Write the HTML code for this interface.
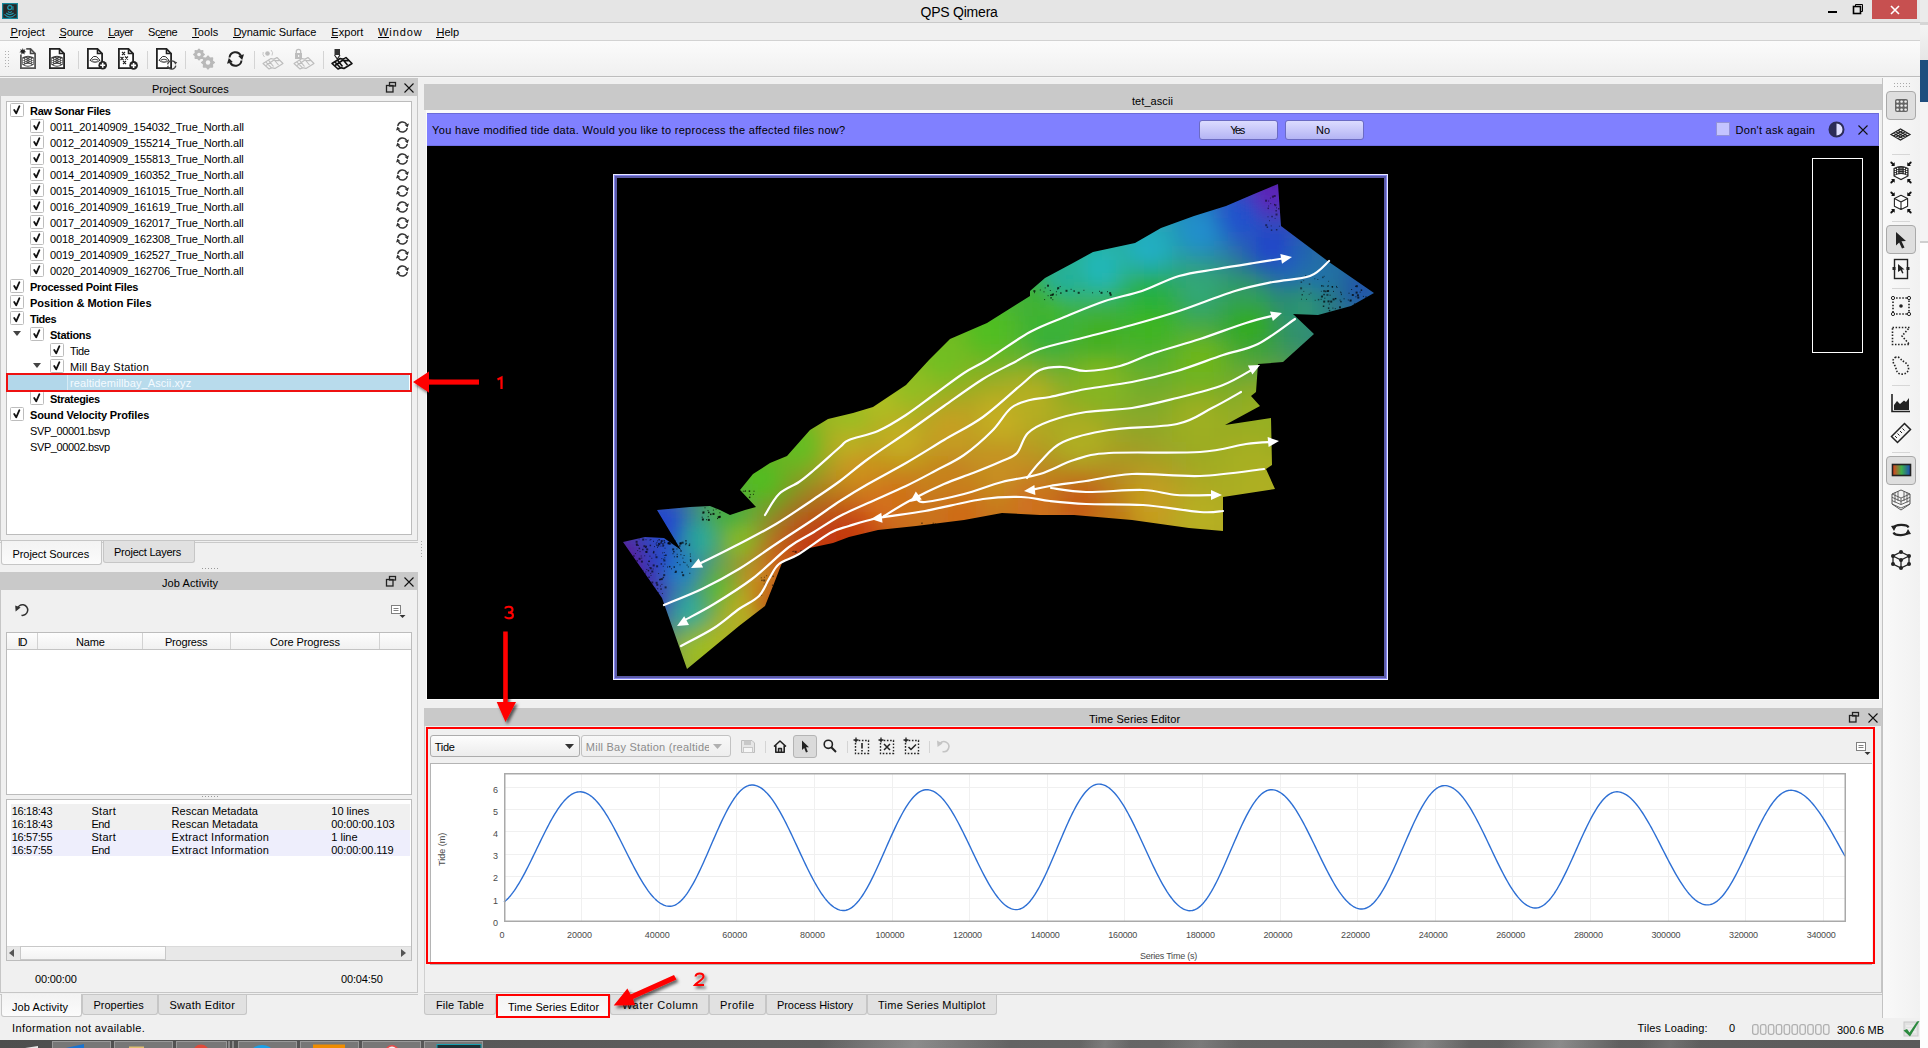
<!DOCTYPE html>
<html><head><meta charset="utf-8"><title>QPS Qimera</title>
<style>
html,body{margin:0;padding:0;}
body{width:1928px;height:1048px;overflow:hidden;position:relative;background:#f0f0f0;font-family:"Liberation Sans",sans-serif;}
.t{position:absolute;white-space:pre;}
.r{position:absolute;}
.s{position:absolute;overflow:visible;}
</style></head><body>
<div class="r" style="left:0px;top:0px;width:1920px;height:22px;background:#e5e5e5;"></div><div class="r" style="left:0px;top:22px;width:1920px;height:1px;background:#c9c9c9;"></div><svg class="s" style="left:2px;top:3px;" width="16" height="16" viewBox="0 0 16 16"><rect x="0" y="0" width="16" height="16" fill="#17889c"/><rect x="1.2" y="1.2" width="13.6" height="13.6" fill="#272727"/><circle cx="7.8" cy="4.6" r="2.1" stroke="#1e96aa" stroke-width="1.3" fill="none"/><path d="M11 3.2 V7.2" stroke="#1e96aa" stroke-width="1.1"/><path d="M6 8.4 Q7.8 10.6 9.8 8.4 M4.2 10 Q7.8 13.2 11.6 10 M2.4 11.4 Q7.8 16.8 13.6 11.4" stroke="#1e96aa" stroke-width="1.2" fill="none"/></svg><div class="t" style="left:920.50px;top:4px;font:14px/16px 'Liberation Sans',sans-serif;color:#000;letter-spacing:-0.222px;">QPS Qimera</div><div class="r" style="left:1828px;top:11px;width:9px;height:2px;background:#000;"></div><svg class="s" style="left:1852px;top:3px;" width="13" height="12" viewBox="0 0 13 12"><path d="M3.5 3.5 V1.5 H10.5 V8.5 H8.5" stroke="#000" fill="none"/><rect x="1.5" y="3.5" width="7" height="7" stroke="#000" stroke-width="1.6" fill="none"/></svg><div class="r" style="left:1872px;top:0px;width:45px;height:19px;background:#c75050;"></div><svg class="s" style="left:1889px;top:5px;" width="12" height="10" viewBox="0 0 12 10"><path d="M2 1 L10 9 M10 1 L2 9" stroke="#fff" stroke-width="1.6"/></svg><div class="r" style="left:0px;top:23px;width:1920px;height:17px;background:#f0f0f0;"></div><div class="r" style="left:0px;top:40px;width:1920px;height:1px;background:#d2d2d2;"></div><div class="t" style="left:10.60px;top:26px;font:11px/12px 'Liberation Sans',sans-serif;color:#000;letter-spacing:0.000px;">Project</div><div class="t" style="left:59.50px;top:26px;font:11px/12px 'Liberation Sans',sans-serif;color:#000;letter-spacing:-0.200px;">Source</div><div class="t" style="left:108.30px;top:26px;font:11px/12px 'Liberation Sans',sans-serif;color:#000;letter-spacing:-0.625px;">Layer</div><div class="t" style="left:148.10px;top:26px;font:11px/12px 'Liberation Sans',sans-serif;color:#000;letter-spacing:-0.425px;">Scene</div><div class="t" style="left:192.30px;top:26px;font:11px/12px 'Liberation Sans',sans-serif;color:#000;letter-spacing:0.050px;">Tools</div><div class="t" style="left:233.50px;top:26px;font:11px/12px 'Liberation Sans',sans-serif;color:#000;letter-spacing:-0.071px;">Dynamic Surface</div><div class="t" style="left:331.30px;top:26px;font:11px/12px 'Liberation Sans',sans-serif;color:#000;letter-spacing:0.060px;">Export</div><div class="t" style="left:378.00px;top:26px;font:11px/12px 'Liberation Sans',sans-serif;color:#000;letter-spacing:0.920px;">Window</div><div class="t" style="left:436.50px;top:26px;font:11px/12px 'Liberation Sans',sans-serif;color:#000;letter-spacing:0.000px;">Help</div><div class="r" style="left:10px;top:37px;width:8px;height:1px;background:#000;"></div><div class="r" style="left:59px;top:37px;width:7px;height:1px;background:#000;"></div><div class="r" style="left:108px;top:37px;width:7px;height:1px;background:#000;"></div><div class="r" style="left:158px;top:37px;width:7px;height:1px;background:#000;"></div><div class="r" style="left:192px;top:37px;width:7px;height:1px;background:#000;"></div><div class="r" style="left:233px;top:37px;width:8px;height:1px;background:#000;"></div><div class="r" style="left:331px;top:37px;width:7px;height:1px;background:#000;"></div><div class="r" style="left:378px;top:37px;width:11px;height:1px;background:#000;"></div><div class="r" style="left:436px;top:37px;width:8px;height:1px;background:#000;"></div><div class="r" style="left:0px;top:41px;width:1920px;height:35px;background:linear-gradient(#fbfbfb,#f0f0f0);"></div><div class="r" style="left:0px;top:76px;width:1920px;height:1px;background:#bdbdbd;"></div><div class="r" style="left:0px;top:77px;width:1920px;height:1px;background:#f5f5f5;"></div><svg class="s" style="left:5px;top:51px;" width="4" height="18" viewBox="0 0 4 18"><rect x="0" y="0" width="1" height="1" fill="#b0b0b0"/><rect x="0" y="3" width="1" height="1" fill="#b0b0b0"/><rect x="0" y="6" width="1" height="1" fill="#b0b0b0"/><rect x="0" y="9" width="1" height="1" fill="#b0b0b0"/><rect x="0" y="12" width="1" height="1" fill="#b0b0b0"/><rect x="0" y="15" width="1" height="1" fill="#b0b0b0"/><rect x="3" y="0" width="1" height="1" fill="#b0b0b0"/><rect x="3" y="3" width="1" height="1" fill="#b0b0b0"/><rect x="3" y="6" width="1" height="1" fill="#b0b0b0"/><rect x="3" y="9" width="1" height="1" fill="#b0b0b0"/><rect x="3" y="12" width="1" height="1" fill="#b0b0b0"/><rect x="3" y="15" width="1" height="1" fill="#b0b0b0"/></svg><svg class="s" style="left:20px;top:48px;" width="17" height="22" viewBox="0 0 17 22"><path d="M0.9 6.5 V20.1 H15.1 V5.5 L10.5 0.9 H6.2" fill="#fff" stroke="#555" stroke-width="1.8"/><path d="M10.5 0.9 V5.5 H15.1" fill="none" stroke="#444" stroke-width="1.6"/><path d="M2.3 9.2 Q8 6.2 13.7 9.2 V16.8 Q8 13.8 2.3 16.8Z" fill="#444"/><rect x="2.8" y="10.6" width="1.6" height="1.5" rx="0.7" fill="#fff"/><rect x="2.8" y="12.6" width="1.6" height="1.5" rx="0.7" fill="#fff"/><rect x="2.8" y="14.6" width="1.6" height="1.5" rx="0.7" fill="#fff"/><rect x="5.1" y="9.8" width="1.6" height="1.5" rx="0.7" fill="#fff"/><rect x="5.1" y="11.8" width="1.6" height="1.5" rx="0.7" fill="#fff"/><rect x="5.1" y="13.8" width="1.6" height="1.5" rx="0.7" fill="#fff"/><rect x="9.3" y="9.8" width="1.6" height="1.5" rx="0.7" fill="#fff"/><rect x="9.3" y="11.8" width="1.6" height="1.5" rx="0.7" fill="#fff"/><rect x="9.3" y="13.8" width="1.6" height="1.5" rx="0.7" fill="#fff"/><rect x="11.6" y="10.6" width="1.6" height="1.5" rx="0.7" fill="#fff"/><rect x="11.6" y="12.6" width="1.6" height="1.5" rx="0.7" fill="#fff"/><rect x="11.6" y="14.6" width="1.6" height="1.5" rx="0.7" fill="#fff"/><path d="M7 9.2 H9 M7 11.4 H9 M7 13.4 H9" stroke="#999" stroke-width="0.8"/><path d="M3.2 16.6 Q8 13.6 12.8 16.6 Q8 19.8 3.2 16.6Z" fill="#fff" stroke="#444" stroke-width="1.1"/><path d="M2.8 0 L3.5 1.9 L5.4 1.2 L4.6 3 L6.3 4 L4.4 4.4 L4.6 6.4 L2.9 5.2 L1.4 6.5 L1.4 4.5 L-0.6 4.2 L1 3 L0.2 1.2 L2.1 1.9Z" fill="#222"/></svg><svg class="s" style="left:49px;top:48px;" width="17" height="22" viewBox="0 0 17 22"><path d="M0.9 0.9 H10.5 L15.1 5.5 V20.1 H0.9Z" fill="#fff" stroke="#222" stroke-width="1.8" stroke-linejoin="miter"/><path d="M10.5 0.9 V5.5 H15.1" fill="none" stroke="#222" stroke-width="1.6"/><path d="M2.3 9.2 Q8 6.2 13.7 9.2 V16.8 Q8 13.8 2.3 16.8Z" fill="#3a3a3a"/><rect x="2.8" y="10.6" width="1.6" height="1.5" rx="0.7" fill="#fff"/><rect x="2.8" y="12.6" width="1.6" height="1.5" rx="0.7" fill="#fff"/><rect x="2.8" y="14.6" width="1.6" height="1.5" rx="0.7" fill="#fff"/><rect x="5.1" y="9.8" width="1.6" height="1.5" rx="0.7" fill="#fff"/><rect x="5.1" y="11.8" width="1.6" height="1.5" rx="0.7" fill="#fff"/><rect x="5.1" y="13.8" width="1.6" height="1.5" rx="0.7" fill="#fff"/><rect x="9.3" y="9.8" width="1.6" height="1.5" rx="0.7" fill="#fff"/><rect x="9.3" y="11.8" width="1.6" height="1.5" rx="0.7" fill="#fff"/><rect x="9.3" y="13.8" width="1.6" height="1.5" rx="0.7" fill="#fff"/><rect x="11.6" y="10.6" width="1.6" height="1.5" rx="0.7" fill="#fff"/><rect x="11.6" y="12.6" width="1.6" height="1.5" rx="0.7" fill="#fff"/><rect x="11.6" y="14.6" width="1.6" height="1.5" rx="0.7" fill="#fff"/><path d="M7 9.2 H9 M7 11.4 H9 M7 13.4 H9" stroke="#999" stroke-width="0.8"/><path d="M3.2 16.6 Q8 13.6 12.8 16.6 Q8 19.8 3.2 16.6Z" fill="#fff" stroke="#3a3a3a" stroke-width="1.1"/></svg><div class="r" style="left:78px;top:51px;width:1px;height:18px;background:#d4d4d4;"></div><svg class="s" style="left:87px;top:48px;" width="22" height="23" viewBox="0 0 22 23"><path d="M0.9 0.9 H10.5 L15.1 5.5 V20.1 H0.9Z" fill="#fff" stroke="#222" stroke-width="1.8" stroke-linejoin="miter"/><path d="M10.5 0.9 V5.5 H15.1" fill="none" stroke="#222" stroke-width="1.6"/><path d="M3 12.3 L6.3 8.6 Q8 8.2 9.8 8.8 L13 12.3 Q8 16.2 3 12.3Z" fill="#fff" stroke="#333" stroke-width="1"/><path d="M4.8 12.3 Q8 10.2 11.2 12.3" stroke="#555" stroke-width="1.1" fill="none"/><path d="M5.5 13.4 Q8 14.8 10.5 13.4" stroke="#777" stroke-width="1" fill="none"/><circle cx="15.7" cy="17.3" r="4.3" fill="#222"/><path d="M13.2 17.3 h5 M15.7 14.8 v5" stroke="#fff" stroke-width="1.6"/></svg><svg class="s" style="left:118px;top:48px;" width="22" height="23" viewBox="0 0 22 23"><path d="M0.9 0.9 H10.5 L15.1 5.5 V20.1 H0.9Z" fill="#fff" stroke="#222" stroke-width="1.8" stroke-linejoin="miter"/><path d="M10.5 0.9 V5.5 H15.1" fill="none" stroke="#222" stroke-width="1.6"/><path d="M4 4 l3 3 m0 -3 l-3 3 M2.5 9 l3 3 m0 -3 l-3 3 M7 8.5 l3 3 m0 -3 l-3 3 M5 13 l3 3 m0 -3 l-3 3" stroke="#222" stroke-width="1.1"/><circle cx="15.6" cy="17.4" r="4.3" fill="#222"/><path d="M13.1 17.4 h5 M15.6 14.9 v5" stroke="#fff" stroke-width="1.6"/></svg><div class="r" style="left:147px;top:51px;width:1px;height:18px;background:#d4d4d4;"></div><svg class="s" style="left:156px;top:48px;" width="23" height="23" viewBox="0 0 23 23"><path d="M0.9 0.9 H10.5 L15.1 5.5 V20.1 H0.9Z" fill="#fff" stroke="#222" stroke-width="1.8" stroke-linejoin="miter"/><path d="M10.5 0.9 V5.5 H15.1" fill="none" stroke="#222" stroke-width="1.6"/><path d="M3 12.3 L6.3 8.6 Q8 8.2 9.8 8.8 L13 12.3 Q8 16.2 3 12.3Z" fill="#fff" stroke="#333" stroke-width="1"/><path d="M4.8 12.3 Q8 10.2 11.2 12.3" stroke="#555" stroke-width="1.1" fill="none"/><path d="M5.5 13.4 Q8 14.8 10.5 13.4" stroke="#777" stroke-width="1" fill="none"/><path d="M11.6 16.3 A4.2 4.2 0 0 1 19.3 14.9" fill="none" stroke="#444" stroke-width="1.3"/><path d="M19.8 17.7 A4.2 4.2 0 0 1 12.1 19.1" fill="none" stroke="#444" stroke-width="1.3"/><path d="M18 13.2 L21.2 14.2 L19.2 16.8Z M13.4 20.8 L10.2 19.8 L12.2 17.2Z" fill="#444"/></svg><div class="r" style="left:185px;top:51px;width:1px;height:18px;background:#d4d4d4;"></div><svg class="s" style="left:192px;top:48px;" width="24" height="23" viewBox="0 0 24 23"><polygon points="12.20,6.50 10.46,7.93 10.68,10.18 8.43,9.96 7.00,11.70 5.57,9.96 3.32,10.18 3.54,7.93 1.80,6.50 3.54,5.07 3.32,2.82 5.57,3.04 7.00,1.30 8.43,3.04 10.68,2.82 10.46,5.07" fill="#b9b9b9" stroke="#b9b9b9" stroke-width="1.6" stroke-linejoin="round"/><circle cx="7" cy="6.5" r="1.8" fill="#f4f4f4"/><polygon points="22.30,14.50 20.19,16.24 20.45,18.95 17.74,18.69 16.00,20.80 14.26,18.69 11.55,18.95 11.81,16.24 9.70,14.50 11.81,12.76 11.55,10.05 14.26,10.31 16.00,8.20 17.74,10.31 20.45,10.05 20.19,12.76" fill="#b9b9b9" stroke="#b9b9b9" stroke-width="1.6" stroke-linejoin="round"/><circle cx="16" cy="14.5" r="2.2" fill="#f4f4f4"/></svg><svg class="s" style="left:226px;top:51px;" width="19" height="16" viewBox="0 0 19 16"><path d="M3.5 6.5 A6 6 0 0 1 14.8 4.5" stroke="#222" stroke-width="2" fill="none"/><path d="M15.5 9.5 A6 6 0 0 1 4.2 11.5" stroke="#222" stroke-width="2" fill="none"/><path d="M12.2 5 L18 3.2 L16.2 9Z M6.8 11 L1 12.8 L2.8 7Z" fill="#222"/></svg><div class="r" style="left:254px;top:51px;width:1px;height:18px;background:#d4d4d4;"></div><svg class="s" style="left:262px;top:48px;" width="22" height="22" viewBox="0 0 22 22"><path d="M1 15.5 L9 10.5 Q12 12 15 9.5 L21 15.5 L13 20.5 Q10 19 7 21Z" fill="none" stroke="#bdbdbd" stroke-width="1.1" stroke-linejoin="round"/><path d="M3.7 13.8 L9.5 19.8 M6.4 12.1 L11.5 18.5 M11.8 11.5 L16.5 17 M4 17.5 L12 12 Q14 13 18 12.5" fill="none" stroke="#bdbdbd" stroke-width="1.1"/><circle cx="5.5" cy="5.5" r="2.3" fill="#bdbdbd"/><path d="M2.5 9 A4.5 4.5 0 0 1 1.2 4 M9 2 A4.5 4.5 0 0 1 10 7.5" stroke="#c8c8c8" fill="none"/></svg><svg class="s" style="left:293px;top:48px;" width="22" height="22" viewBox="0 0 22 22"><path d="M1 15.5 L9 10.5 Q12 12 15 9.5 L21 15.5 L13 20.5 Q10 19 7 21Z" fill="none" stroke="#bdbdbd" stroke-width="1.1" stroke-linejoin="round"/><path d="M3.7 13.8 L9.5 19.8 M6.4 12.1 L11.5 18.5 M11.8 11.5 L16.5 17 M4 17.5 L12 12 Q14 13 18 12.5" fill="none" stroke="#bdbdbd" stroke-width="1.1"/><rect x="2" y="5" width="7" height="6" fill="#bdbdbd"/><path d="M3.3 5 V3.6 A2.2 2.2 0 0 1 7.7 3.6 V5" stroke="#bdbdbd" stroke-width="1.3" fill="none"/><rect x="5" y="7" width="1.2" height="2" fill="#f4f4f4"/></svg><div class="r" style="left:323px;top:51px;width:1px;height:18px;background:#d4d4d4;"></div><svg class="s" style="left:331px;top:48px;" width="23" height="23" viewBox="0 0 23 23"><path d="M1 15.5 L9 10.5 Q12 12 15 9.5 L21 15.5 L13 20.5 Q10 19 7 21Z" fill="none" stroke="#111" stroke-width="1.6" stroke-linejoin="round"/><path d="M3.7 13.8 L9.5 19.8 M6.4 12.1 L11.5 18.5 M11.8 11.5 L16.5 17 M4 17.5 L12 12 Q14 13 18 12.5" fill="none" stroke="#111" stroke-width="1.6"/><rect x="3.5" y="1" width="5.5" height="6" fill="#333"/><path d="M3.5 7 L6.25 11 L9 7" fill="#fff" stroke="#222" stroke-width="1.2"/></svg>
<div class="r" style="left:0px;top:78px;width:418px;height:18px;background:#c9c9c9;"></div><div class="t" style="left:152.00px;top:83px;font:11px/12px 'Liberation Sans',sans-serif;color:#000;letter-spacing:-0.071px;">Project Sources</div><svg class="s" style="left:386px;top:82px;" width="11" height="11" viewBox="0 0 11 11"><rect x="3.5" y="0.5" width="6" height="3.5" stroke="#222" stroke-width="1.3" fill="none"/><rect x="0.5" y="3.5" width="6.5" height="6.5" stroke="#222" stroke-width="1.3" fill="none"/></svg><svg class="s" style="left:404px;top:83px;" width="10" height="10" viewBox="0 0 10 10"><path d="M0.5 0.5 L9.5 9.5 M9.5 0.5 L0.5 9.5" stroke="#111" stroke-width="1.1"/></svg><div class="r" style="left:0px;top:96px;width:1px;height:445px;background:#c6c6c6;"></div><div class="r" style="left:417px;top:96px;width:1px;height:445px;background:#c6c6c6;"></div><div class="r" style="left:0px;top:540px;width:418px;height:1px;background:#c6c6c6;"></div><div class="r" style="left:6px;top:101px;width:406px;height:434px;background:#fff;border:1px solid #bcbcbc;box-sizing:border-box;"></div><div class="r" style="left:8px;top:375px;width:401px;height:15px;background:#b2d7ea;"></div><div class="r" style="left:67px;top:375px;width:342px;height:15px;background:#b8dbec;"></div><div class="r" style="left:67px;top:375px;width:1px;height:15px;background:#d6ebf5;"></div><div class="t" style="left:70.00px;top:377px;font:11px/12px 'Liberation Sans',sans-serif;color:#f4faff;letter-spacing:0.083px;">realtidemillbay_Ascii.xyz</div><svg class="s" style="left:10px;top:103px;" width="14" height="14" viewBox="0 0 14 14"><rect x="0.5" y="0.5" width="13" height="13" rx="1" fill="#fff" stroke="#bdbdbd"/><path d="M4.2 7 L6.2 10.3 L9.4 3.2" stroke="#111" stroke-width="1.8" fill="none" stroke-linejoin="round" stroke-linecap="round"/></svg><div class="t" style="left:30.00px;top:105px;font:bold 11px/12px 'Liberation Sans',sans-serif;color:#000;letter-spacing:-0.286px;">Raw Sonar Files</div><svg class="s" style="left:30px;top:119px;" width="14" height="14" viewBox="0 0 14 14"><rect x="0.5" y="0.5" width="13" height="13" rx="1" fill="#fff" stroke="#bdbdbd"/><path d="M4.2 7 L6.2 10.3 L9.4 3.2" stroke="#111" stroke-width="1.8" fill="none" stroke-linejoin="round" stroke-linecap="round"/></svg><div class="t" style="left:50.00px;top:121px;font:11px/12px 'Liberation Sans',sans-serif;color:#000;letter-spacing:-0.088px;">0011_20140909_154032_True_North.all</div><svg class="s" style="left:395px;top:120px;" width="15" height="14" viewBox="0 0 15 14"><path d="M2.8 6 A4.8 4.8 0 0 1 11.6 4.2" stroke="#333" stroke-width="1.4" fill="none"/><path d="M12.2 8 A4.8 4.8 0 0 1 3.4 9.8" stroke="#333" stroke-width="1.4" fill="none"/><path d="M9.6 4.8 L14 3.6 L12.6 7.6Z M5.4 9.2 L1 10.4 L2.4 6.4Z" fill="#333"/></svg><svg class="s" style="left:30px;top:135px;" width="14" height="14" viewBox="0 0 14 14"><rect x="0.5" y="0.5" width="13" height="13" rx="1" fill="#fff" stroke="#bdbdbd"/><path d="M4.2 7 L6.2 10.3 L9.4 3.2" stroke="#111" stroke-width="1.8" fill="none" stroke-linejoin="round" stroke-linecap="round"/></svg><div class="t" style="left:50.00px;top:137px;font:11px/12px 'Liberation Sans',sans-serif;color:#000;letter-spacing:-0.118px;">0012_20140909_155214_True_North.all</div><svg class="s" style="left:395px;top:136px;" width="15" height="14" viewBox="0 0 15 14"><path d="M2.8 6 A4.8 4.8 0 0 1 11.6 4.2" stroke="#333" stroke-width="1.4" fill="none"/><path d="M12.2 8 A4.8 4.8 0 0 1 3.4 9.8" stroke="#333" stroke-width="1.4" fill="none"/><path d="M9.6 4.8 L14 3.6 L12.6 7.6Z M5.4 9.2 L1 10.4 L2.4 6.4Z" fill="#333"/></svg><svg class="s" style="left:30px;top:151px;" width="14" height="14" viewBox="0 0 14 14"><rect x="0.5" y="0.5" width="13" height="13" rx="1" fill="#fff" stroke="#bdbdbd"/><path d="M4.2 7 L6.2 10.3 L9.4 3.2" stroke="#111" stroke-width="1.8" fill="none" stroke-linejoin="round" stroke-linecap="round"/></svg><div class="t" style="left:50.00px;top:153px;font:11px/12px 'Liberation Sans',sans-serif;color:#000;letter-spacing:-0.118px;">0013_20140909_155813_True_North.all</div><svg class="s" style="left:395px;top:152px;" width="15" height="14" viewBox="0 0 15 14"><path d="M2.8 6 A4.8 4.8 0 0 1 11.6 4.2" stroke="#333" stroke-width="1.4" fill="none"/><path d="M12.2 8 A4.8 4.8 0 0 1 3.4 9.8" stroke="#333" stroke-width="1.4" fill="none"/><path d="M9.6 4.8 L14 3.6 L12.6 7.6Z M5.4 9.2 L1 10.4 L2.4 6.4Z" fill="#333"/></svg><svg class="s" style="left:30px;top:167px;" width="14" height="14" viewBox="0 0 14 14"><rect x="0.5" y="0.5" width="13" height="13" rx="1" fill="#fff" stroke="#bdbdbd"/><path d="M4.2 7 L6.2 10.3 L9.4 3.2" stroke="#111" stroke-width="1.8" fill="none" stroke-linejoin="round" stroke-linecap="round"/></svg><div class="t" style="left:50.00px;top:169px;font:11px/12px 'Liberation Sans',sans-serif;color:#000;letter-spacing:-0.118px;">0014_20140909_160352_True_North.all</div><svg class="s" style="left:395px;top:168px;" width="15" height="14" viewBox="0 0 15 14"><path d="M2.8 6 A4.8 4.8 0 0 1 11.6 4.2" stroke="#333" stroke-width="1.4" fill="none"/><path d="M12.2 8 A4.8 4.8 0 0 1 3.4 9.8" stroke="#333" stroke-width="1.4" fill="none"/><path d="M9.6 4.8 L14 3.6 L12.6 7.6Z M5.4 9.2 L1 10.4 L2.4 6.4Z" fill="#333"/></svg><svg class="s" style="left:30px;top:183px;" width="14" height="14" viewBox="0 0 14 14"><rect x="0.5" y="0.5" width="13" height="13" rx="1" fill="#fff" stroke="#bdbdbd"/><path d="M4.2 7 L6.2 10.3 L9.4 3.2" stroke="#111" stroke-width="1.8" fill="none" stroke-linejoin="round" stroke-linecap="round"/></svg><div class="t" style="left:50.00px;top:185px;font:11px/12px 'Liberation Sans',sans-serif;color:#000;letter-spacing:-0.118px;">0015_20140909_161015_True_North.all</div><svg class="s" style="left:395px;top:184px;" width="15" height="14" viewBox="0 0 15 14"><path d="M2.8 6 A4.8 4.8 0 0 1 11.6 4.2" stroke="#333" stroke-width="1.4" fill="none"/><path d="M12.2 8 A4.8 4.8 0 0 1 3.4 9.8" stroke="#333" stroke-width="1.4" fill="none"/><path d="M9.6 4.8 L14 3.6 L12.6 7.6Z M5.4 9.2 L1 10.4 L2.4 6.4Z" fill="#333"/></svg><svg class="s" style="left:30px;top:199px;" width="14" height="14" viewBox="0 0 14 14"><rect x="0.5" y="0.5" width="13" height="13" rx="1" fill="#fff" stroke="#bdbdbd"/><path d="M4.2 7 L6.2 10.3 L9.4 3.2" stroke="#111" stroke-width="1.8" fill="none" stroke-linejoin="round" stroke-linecap="round"/></svg><div class="t" style="left:50.00px;top:201px;font:11px/12px 'Liberation Sans',sans-serif;color:#000;letter-spacing:-0.118px;">0016_20140909_161619_True_North.all</div><svg class="s" style="left:395px;top:200px;" width="15" height="14" viewBox="0 0 15 14"><path d="M2.8 6 A4.8 4.8 0 0 1 11.6 4.2" stroke="#333" stroke-width="1.4" fill="none"/><path d="M12.2 8 A4.8 4.8 0 0 1 3.4 9.8" stroke="#333" stroke-width="1.4" fill="none"/><path d="M9.6 4.8 L14 3.6 L12.6 7.6Z M5.4 9.2 L1 10.4 L2.4 6.4Z" fill="#333"/></svg><svg class="s" style="left:30px;top:215px;" width="14" height="14" viewBox="0 0 14 14"><rect x="0.5" y="0.5" width="13" height="13" rx="1" fill="#fff" stroke="#bdbdbd"/><path d="M4.2 7 L6.2 10.3 L9.4 3.2" stroke="#111" stroke-width="1.8" fill="none" stroke-linejoin="round" stroke-linecap="round"/></svg><div class="t" style="left:50.00px;top:217px;font:11px/12px 'Liberation Sans',sans-serif;color:#000;letter-spacing:-0.118px;">0017_20140909_162017_True_North.all</div><svg class="s" style="left:395px;top:216px;" width="15" height="14" viewBox="0 0 15 14"><path d="M2.8 6 A4.8 4.8 0 0 1 11.6 4.2" stroke="#333" stroke-width="1.4" fill="none"/><path d="M12.2 8 A4.8 4.8 0 0 1 3.4 9.8" stroke="#333" stroke-width="1.4" fill="none"/><path d="M9.6 4.8 L14 3.6 L12.6 7.6Z M5.4 9.2 L1 10.4 L2.4 6.4Z" fill="#333"/></svg><svg class="s" style="left:30px;top:231px;" width="14" height="14" viewBox="0 0 14 14"><rect x="0.5" y="0.5" width="13" height="13" rx="1" fill="#fff" stroke="#bdbdbd"/><path d="M4.2 7 L6.2 10.3 L9.4 3.2" stroke="#111" stroke-width="1.8" fill="none" stroke-linejoin="round" stroke-linecap="round"/></svg><div class="t" style="left:50.00px;top:233px;font:11px/12px 'Liberation Sans',sans-serif;color:#000;letter-spacing:-0.118px;">0018_20140909_162308_True_North.all</div><svg class="s" style="left:395px;top:232px;" width="15" height="14" viewBox="0 0 15 14"><path d="M2.8 6 A4.8 4.8 0 0 1 11.6 4.2" stroke="#333" stroke-width="1.4" fill="none"/><path d="M12.2 8 A4.8 4.8 0 0 1 3.4 9.8" stroke="#333" stroke-width="1.4" fill="none"/><path d="M9.6 4.8 L14 3.6 L12.6 7.6Z M5.4 9.2 L1 10.4 L2.4 6.4Z" fill="#333"/></svg><svg class="s" style="left:30px;top:247px;" width="14" height="14" viewBox="0 0 14 14"><rect x="0.5" y="0.5" width="13" height="13" rx="1" fill="#fff" stroke="#bdbdbd"/><path d="M4.2 7 L6.2 10.3 L9.4 3.2" stroke="#111" stroke-width="1.8" fill="none" stroke-linejoin="round" stroke-linecap="round"/></svg><div class="t" style="left:50.00px;top:249px;font:11px/12px 'Liberation Sans',sans-serif;color:#000;letter-spacing:-0.118px;">0019_20140909_162527_True_North.all</div><svg class="s" style="left:395px;top:248px;" width="15" height="14" viewBox="0 0 15 14"><path d="M2.8 6 A4.8 4.8 0 0 1 11.6 4.2" stroke="#333" stroke-width="1.4" fill="none"/><path d="M12.2 8 A4.8 4.8 0 0 1 3.4 9.8" stroke="#333" stroke-width="1.4" fill="none"/><path d="M9.6 4.8 L14 3.6 L12.6 7.6Z M5.4 9.2 L1 10.4 L2.4 6.4Z" fill="#333"/></svg><svg class="s" style="left:30px;top:263px;" width="14" height="14" viewBox="0 0 14 14"><rect x="0.5" y="0.5" width="13" height="13" rx="1" fill="#fff" stroke="#bdbdbd"/><path d="M4.2 7 L6.2 10.3 L9.4 3.2" stroke="#111" stroke-width="1.8" fill="none" stroke-linejoin="round" stroke-linecap="round"/></svg><div class="t" style="left:50.00px;top:265px;font:11px/12px 'Liberation Sans',sans-serif;color:#000;letter-spacing:-0.118px;">0020_20140909_162706_True_North.all</div><svg class="s" style="left:395px;top:264px;" width="15" height="14" viewBox="0 0 15 14"><path d="M2.8 6 A4.8 4.8 0 0 1 11.6 4.2" stroke="#333" stroke-width="1.4" fill="none"/><path d="M12.2 8 A4.8 4.8 0 0 1 3.4 9.8" stroke="#333" stroke-width="1.4" fill="none"/><path d="M9.6 4.8 L14 3.6 L12.6 7.6Z M5.4 9.2 L1 10.4 L2.4 6.4Z" fill="#333"/></svg><svg class="s" style="left:10px;top:279px;" width="14" height="14" viewBox="0 0 14 14"><rect x="0.5" y="0.5" width="13" height="13" rx="1" fill="#fff" stroke="#bdbdbd"/><path d="M4.2 7 L6.2 10.3 L9.4 3.2" stroke="#111" stroke-width="1.8" fill="none" stroke-linejoin="round" stroke-linecap="round"/></svg><div class="t" style="left:30.00px;top:281px;font:bold 11px/12px 'Liberation Sans',sans-serif;color:#000;letter-spacing:-0.300px;">Processed Point Files</div><svg class="s" style="left:10px;top:295px;" width="14" height="14" viewBox="0 0 14 14"><rect x="0.5" y="0.5" width="13" height="13" rx="1" fill="#fff" stroke="#bdbdbd"/><path d="M4.2 7 L6.2 10.3 L9.4 3.2" stroke="#111" stroke-width="1.8" fill="none" stroke-linejoin="round" stroke-linecap="round"/></svg><div class="t" style="left:30.00px;top:297px;font:bold 11px/12px 'Liberation Sans',sans-serif;color:#000;letter-spacing:0.000px;">Position &amp; Motion Files</div><svg class="s" style="left:10px;top:311px;" width="14" height="14" viewBox="0 0 14 14"><rect x="0.5" y="0.5" width="13" height="13" rx="1" fill="#fff" stroke="#bdbdbd"/><path d="M4.2 7 L6.2 10.3 L9.4 3.2" stroke="#111" stroke-width="1.8" fill="none" stroke-linejoin="round" stroke-linecap="round"/></svg><div class="t" style="left:30.00px;top:313px;font:bold 11px/12px 'Liberation Sans',sans-serif;color:#000;letter-spacing:-0.500px;">Tides</div><svg class="s" style="left:30px;top:327px;" width="14" height="14" viewBox="0 0 14 14"><rect x="0.5" y="0.5" width="13" height="13" rx="1" fill="#fff" stroke="#bdbdbd"/><path d="M4.2 7 L6.2 10.3 L9.4 3.2" stroke="#111" stroke-width="1.8" fill="none" stroke-linejoin="round" stroke-linecap="round"/></svg><div class="t" style="left:50.00px;top:329px;font:bold 11px/12px 'Liberation Sans',sans-serif;color:#000;letter-spacing:-0.286px;">Stations</div><svg class="s" style="left:13px;top:331px;" width="8" height="5" viewBox="0 0 8 5"><path d="M0 0 H8 L4.0 5Z" fill="#444"/></svg><svg class="s" style="left:50px;top:343px;" width="14" height="14" viewBox="0 0 14 14"><rect x="0.5" y="0.5" width="13" height="13" rx="1" fill="#fff" stroke="#bdbdbd"/><path d="M4.2 7 L6.2 10.3 L9.4 3.2" stroke="#111" stroke-width="1.8" fill="none" stroke-linejoin="round" stroke-linecap="round"/></svg><div class="t" style="left:70.00px;top:345px;font:11px/12px 'Liberation Sans',sans-serif;color:#000;letter-spacing:-0.333px;">Tide</div><svg class="s" style="left:50px;top:359px;" width="14" height="14" viewBox="0 0 14 14"><rect x="0.5" y="0.5" width="13" height="13" rx="1" fill="#fff" stroke="#bdbdbd"/><path d="M4.2 7 L6.2 10.3 L9.4 3.2" stroke="#111" stroke-width="1.8" fill="none" stroke-linejoin="round" stroke-linecap="round"/></svg><div class="t" style="left:70.00px;top:361px;font:11px/12px 'Liberation Sans',sans-serif;color:#000;letter-spacing:0.200px;">Mill Bay Station</div><svg class="s" style="left:33px;top:363px;" width="8" height="5" viewBox="0 0 8 5"><path d="M0 0 H8 L4.0 5Z" fill="#444"/></svg><svg class="s" style="left:30px;top:391px;" width="14" height="14" viewBox="0 0 14 14"><rect x="0.5" y="0.5" width="13" height="13" rx="1" fill="#fff" stroke="#bdbdbd"/><path d="M4.2 7 L6.2 10.3 L9.4 3.2" stroke="#111" stroke-width="1.8" fill="none" stroke-linejoin="round" stroke-linecap="round"/></svg><div class="t" style="left:50.00px;top:393px;font:bold 11px/12px 'Liberation Sans',sans-serif;color:#000;letter-spacing:-0.333px;">Strategies</div><svg class="s" style="left:10px;top:407px;" width="14" height="14" viewBox="0 0 14 14"><rect x="0.5" y="0.5" width="13" height="13" rx="1" fill="#fff" stroke="#bdbdbd"/><path d="M4.2 7 L6.2 10.3 L9.4 3.2" stroke="#111" stroke-width="1.8" fill="none" stroke-linejoin="round" stroke-linecap="round"/></svg><div class="t" style="left:30.00px;top:409px;font:bold 11px/12px 'Liberation Sans',sans-serif;color:#000;letter-spacing:-0.136px;">Sound Velocity Profiles</div><div class="t" style="left:30.00px;top:425px;font:11px/12px 'Liberation Sans',sans-serif;color:#000;letter-spacing:-0.385px;">SVP_00001.bsvp</div><div class="t" style="left:30.00px;top:441px;font:11px/12px 'Liberation Sans',sans-serif;color:#000;letter-spacing:-0.385px;">SVP_00002.bsvp</div><div class="r" style="left:6px;top:373px;width:406px;height:19px;border:1px solid #ee1111;box-sizing:border-box;border-width:2px;"></div><div class="r" style="left:0px;top:542px;width:418px;height:1px;background:#cacaca;"></div><div class="r" style="left:1px;top:541px;width:101px;height:24px;background:linear-gradient(#f3f3f3,#fbfbfb);border:1px solid #c6c6c6;border-top:none;border-radius:0 0 3px 3px;box-sizing:border-box;"></div><div class="t" style="left:12.50px;top:548px;font:11px/12px 'Liberation Sans',sans-serif;color:#000;letter-spacing:-0.071px;">Project Sources</div><div class="r" style="left:103px;top:541px;width:92px;height:22px;background:#e1e1e1;border:1px solid #c6c6c6;border-top:none;border-radius:0 0 3px 3px;box-sizing:border-box;"></div><div class="t" style="left:114.00px;top:546px;font:11px/12px 'Liberation Sans',sans-serif;color:#000;letter-spacing:-0.231px;">Project Layers</div><div class="r" style="left:202px;top:568px;width:1px;height:1px;background:#999;"></div><div class="r" style="left:205px;top:568px;width:1px;height:1px;background:#999;"></div><div class="r" style="left:208px;top:568px;width:1px;height:1px;background:#999;"></div><div class="r" style="left:211px;top:568px;width:1px;height:1px;background:#999;"></div><div class="r" style="left:214px;top:568px;width:1px;height:1px;background:#999;"></div><div class="r" style="left:217px;top:568px;width:1px;height:1px;background:#999;"></div><div class="r" style="left:421px;top:541px;width:1px;height:1px;background:#aaa;"></div><div class="r" style="left:421px;top:544px;width:1px;height:1px;background:#aaa;"></div><div class="r" style="left:421px;top:547px;width:1px;height:1px;background:#aaa;"></div><div class="r" style="left:421px;top:550px;width:1px;height:1px;background:#aaa;"></div><div class="r" style="left:421px;top:553px;width:1px;height:1px;background:#aaa;"></div><div class="r" style="left:421px;top:556px;width:1px;height:1px;background:#aaa;"></div><div class="r" style="left:0px;top:572px;width:418px;height:18px;background:#c9c9c9;"></div><div class="t" style="left:162.00px;top:577px;font:11px/12px 'Liberation Sans',sans-serif;color:#000;letter-spacing:0.091px;">Job Activity</div><svg class="s" style="left:386px;top:576px;" width="11" height="11" viewBox="0 0 11 11"><rect x="3.5" y="0.5" width="6" height="3.5" stroke="#222" stroke-width="1.3" fill="none"/><rect x="0.5" y="3.5" width="6.5" height="6.5" stroke="#222" stroke-width="1.3" fill="none"/></svg><svg class="s" style="left:404px;top:577px;" width="10" height="10" viewBox="0 0 10 10"><path d="M0.5 0.5 L9.5 9.5 M9.5 0.5 L0.5 9.5" stroke="#111" stroke-width="1.1"/></svg><div class="r" style="left:0px;top:590px;width:1px;height:403px;background:#c6c6c6;"></div><div class="r" style="left:417px;top:590px;width:1px;height:403px;background:#c6c6c6;"></div><div class="r" style="left:0px;top:992px;width:418px;height:1px;background:#c6c6c6;"></div><svg class="s" style="left:14px;top:602px;" width="16" height="16" viewBox="0 0 16 16"><path d="M3.2 7.2 A5.3 5.3 0 1 1 7.5 13.3" stroke="#333" stroke-width="1.5" fill="none"/><path d="M1.2 3.6 L6.6 5.4 L1.6 9.6Z" fill="#333"/></svg><svg class="s" style="left:391px;top:605px;" width="16" height="14" viewBox="0 0 16 14"><rect x="0.5" y="0.5" width="9" height="8" fill="#fff" stroke="#808080"/><path d="M2.5 3.5 H7.5 M2.5 5.5 H7.5" stroke="#808080"/><path d="M8.5 10 H14.5 L11.5 13Z" fill="#333"/></svg><div class="r" style="left:6px;top:632px;width:406px;height:163px;background:#fff;border:1px solid #bcbcbc;box-sizing:border-box;"></div><div class="r" style="left:7px;top:633px;width:404px;height:16px;background:linear-gradient(#fdfdfd,#f1f1f1);"></div><div class="r" style="left:7px;top:649px;width:404px;height:1px;background:#c4c4c4;"></div><div class="r" style="left:37px;top:633px;width:1px;height:16px;background:#d2d2d2;"></div><div class="r" style="left:142px;top:633px;width:1px;height:16px;background:#d2d2d2;"></div><div class="r" style="left:230px;top:633px;width:1px;height:16px;background:#d2d2d2;"></div><div class="r" style="left:379px;top:633px;width:1px;height:16px;background:#d2d2d2;"></div><div class="t" style="left:17.70px;top:636px;font:11px/12px 'Liberation Sans',sans-serif;color:#000;letter-spacing:-1.300px;">ID</div><div class="t" style="left:76.00px;top:636px;font:11px/12px 'Liberation Sans',sans-serif;color:#000;letter-spacing:-0.167px;">Name</div><div class="t" style="left:165.00px;top:636px;font:11px/12px 'Liberation Sans',sans-serif;color:#000;letter-spacing:-0.214px;">Progress</div><div class="t" style="left:270.00px;top:636px;font:11px/12px 'Liberation Sans',sans-serif;color:#000;letter-spacing:-0.083px;">Core Progress</div><div class="r" style="left:202px;top:796px;width:1px;height:1px;background:#999;"></div><div class="r" style="left:205px;top:796px;width:1px;height:1px;background:#999;"></div><div class="r" style="left:208px;top:796px;width:1px;height:1px;background:#999;"></div><div class="r" style="left:211px;top:796px;width:1px;height:1px;background:#999;"></div><div class="r" style="left:214px;top:796px;width:1px;height:1px;background:#999;"></div><div class="r" style="left:217px;top:796px;width:1px;height:1px;background:#999;"></div><div class="r" style="left:6px;top:799px;width:406px;height:162px;background:#fff;border:1px solid #bcbcbc;box-sizing:border-box;"></div><div class="r" style="left:11px;top:804px;width:399px;height:26px;background:#f0f0f0;"></div><div class="r" style="left:11px;top:830px;width:399px;height:26px;background:#eeeefc;"></div><div class="t" style="left:11.70px;top:805px;font:11px/12px 'Liberation Sans',sans-serif;color:#000;letter-spacing:-0.286px;">16:18:43</div><div class="t" style="left:91.50px;top:805px;font:11px/12px 'Liberation Sans',sans-serif;color:#000;letter-spacing:0.250px;">Start</div><div class="t" style="left:171.60px;top:805px;font:11px/12px 'Liberation Sans',sans-serif;color:#000;letter-spacing:0.000px;">Rescan Metadata</div><div class="t" style="left:331.30px;top:805px;font:11px/12px 'Liberation Sans',sans-serif;color:#000;letter-spacing:0.000px;">10 lines</div><div class="t" style="left:11.70px;top:818px;font:11px/12px 'Liberation Sans',sans-serif;color:#000;letter-spacing:-0.286px;">16:18:43</div><div class="t" style="left:91.50px;top:818px;font:11px/12px 'Liberation Sans',sans-serif;color:#000;letter-spacing:-0.500px;">End</div><div class="t" style="left:171.60px;top:818px;font:11px/12px 'Liberation Sans',sans-serif;color:#000;letter-spacing:0.000px;">Rescan Metadata</div><div class="t" style="left:331.30px;top:818px;font:11px/12px 'Liberation Sans',sans-serif;color:#000;letter-spacing:-0.091px;">00:00:00.103</div><div class="t" style="left:11.70px;top:831px;font:11px/12px 'Liberation Sans',sans-serif;color:#000;letter-spacing:-0.286px;">16:57:55</div><div class="t" style="left:91.50px;top:831px;font:11px/12px 'Liberation Sans',sans-serif;color:#000;letter-spacing:0.250px;">Start</div><div class="t" style="left:171.60px;top:831px;font:11px/12px 'Liberation Sans',sans-serif;color:#000;letter-spacing:0.278px;">Extract Information</div><div class="t" style="left:331.30px;top:831px;font:11px/12px 'Liberation Sans',sans-serif;color:#000;letter-spacing:0.000px;">1 line</div><div class="t" style="left:11.70px;top:844px;font:11px/12px 'Liberation Sans',sans-serif;color:#000;letter-spacing:-0.286px;">16:57:55</div><div class="t" style="left:91.50px;top:844px;font:11px/12px 'Liberation Sans',sans-serif;color:#000;letter-spacing:-0.500px;">End</div><div class="t" style="left:171.60px;top:844px;font:11px/12px 'Liberation Sans',sans-serif;color:#000;letter-spacing:0.278px;">Extract Information</div><div class="t" style="left:331.30px;top:844px;font:11px/12px 'Liberation Sans',sans-serif;color:#000;letter-spacing:-0.091px;">00:00:00.119</div><div class="r" style="left:7px;top:946px;width:404px;height:14px;background:#e8e8e8;"></div><div class="r" style="left:7px;top:946px;width:404px;height:1px;background:#dadada;"></div><div class="r" style="left:20px;top:946px;width:146px;height:14px;background:linear-gradient(#fdfdfd,#f3f3f3);border:1px solid #c8c8c8;box-sizing:border-box;"></div><svg class="s" style="left:9px;top:949px;" width="6" height="9" viewBox="0 0 6 9"><path d="M5 0 V8 L0 4Z" fill="#555"/></svg><svg class="s" style="left:401px;top:949px;" width="6" height="9" viewBox="0 0 6 9"><path d="M0 0 V8 L5 4Z" fill="#555"/></svg><div class="t" style="left:35.00px;top:973px;font:11px/12px 'Liberation Sans',sans-serif;color:#000;letter-spacing:-0.143px;">00:00:00</div><div class="t" style="left:341.00px;top:973px;font:11px/12px 'Liberation Sans',sans-serif;color:#000;letter-spacing:-0.143px;">00:04:50</div><div class="r" style="left:0px;top:994px;width:418px;height:1px;background:#c6c6c6;"></div><div class="r" style="left:1px;top:994px;width:81px;height:23px;background:linear-gradient(#f3f3f3,#fbfbfb);border:1px solid #c6c6c6;border-top:none;border-radius:0 0 3px 3px;box-sizing:border-box;"></div><div class="t" style="left:12.00px;top:1001px;font:11px/12px 'Liberation Sans',sans-serif;color:#000;letter-spacing:0.091px;">Job Activity</div><div class="r" style="left:82px;top:995px;width:76px;height:20px;background:#e1e1e1;border:1px solid #c6c6c6;border-top:none;border-radius:0 0 3px 3px;box-sizing:border-box;"></div><div class="t" style="left:93.50px;top:999px;font:11px/12px 'Liberation Sans',sans-serif;color:#000;letter-spacing:0.000px;">Properties</div><div class="r" style="left:158px;top:995px;width:89px;height:20px;background:#e1e1e1;border:1px solid #c6c6c6;border-top:none;border-radius:0 0 3px 3px;box-sizing:border-box;"></div><div class="t" style="left:169.50px;top:999px;font:11px/12px 'Liberation Sans',sans-serif;color:#000;letter-spacing:0.273px;">Swath Editor</div>
<div class="r" style="left:424px;top:84px;width:1458px;height:26px;background:#c9c9c9;"></div><div class="t" style="left:1132.00px;top:95px;font:11px/12px 'Liberation Sans',sans-serif;color:#000;letter-spacing:0.062px;">tet_ascii</div><div class="r" style="left:426px;top:110px;width:1454px;height:590px;background:#fafafa;"></div><div class="r" style="left:427px;top:113px;width:1452px;height:33px;background:#8080ff;"></div><div class="r" style="left:427px;top:113px;width:1452px;height:1px;background:#6a6ad8;"></div><div class="r" style="left:1878px;top:113px;width:1px;height:33px;background:#6f6fe0;"></div><div class="r" style="left:427px;top:145px;width:1452px;height:1px;background:#7070e6;"></div><div class="r" style="left:427px;top:146px;width:1452px;height:553px;background:#000;"></div><div class="t" style="left:432.10px;top:124px;font:11px/12px 'Liberation Sans',sans-serif;color:#000;letter-spacing:0.309px;">You have modified tide data. Would you like to reprocess the affected files now?</div><div class="r" style="left:1199px;top:120px;width:79px;height:20px;background:linear-gradient(#dcdcff,#b4b4f4);border:1px solid #6b6bc4;border-radius:3px;box-sizing:border-box;"></div><div class="t" style="left:1230.30px;top:124px;font:11px/12px 'Liberation Sans',sans-serif;color:#000;letter-spacing:-1.500px;">Yes</div><div class="r" style="left:1285px;top:120px;width:79px;height:20px;background:linear-gradient(#dcdcff,#b4b4f4);border:1px solid #6b6bc4;border-radius:3px;box-sizing:border-box;"></div><div class="t" style="left:1316.00px;top:124px;font:11px/12px 'Liberation Sans',sans-serif;color:#000;letter-spacing:0.000px;">No</div><div class="r" style="left:1716px;top:122px;width:14px;height:14px;background:#c4c4ff;border:1px solid #9292d8;box-sizing:border-box;"></div><div class="t" style="left:1735.50px;top:124px;font:11px/12px 'Liberation Sans',sans-serif;color:#000;letter-spacing:0.286px;">Don't ask again</div><svg class="s" style="left:1828px;top:121px;" width="17" height="17" viewBox="0 0 17 17"><circle cx="8.5" cy="8.5" r="7" fill="#e0e0ff" stroke="#2c2c58" stroke-width="2"/><path d="M8.5 1.5 A7 7 0 0 0 8.5 15.5Z" fill="#2c2c58"/></svg><svg class="s" style="left:1858px;top:125px;" width="10" height="10" viewBox="0 0 10 10"><path d="M0.5 0.5 L9.5 9.5 M9.5 0.5 L0.5 9.5" stroke="#111" stroke-width="1.1"/></svg><svg class="s" style="left:613px;top:174px;" width="775" height="506" viewBox="0 0 775 506"><rect x="0.5" y="0.5" width="774" height="505" fill="none" stroke="#e8e8ff" stroke-width="1"/><rect x="1.5" y="1.5" width="772" height="503" fill="none" stroke="#8282ee" stroke-width="1"/><rect x="3" y="3" width="769" height="500" fill="none" stroke="#5a5aa6" stroke-width="2"/></svg><div class="r" style="left:1812px;top:158px;width:51px;height:195px;border:1px solid #fff;box-sizing:border-box;"></div><div class="r" style="left:424px;top:708px;width:1458px;height:18px;background:#c9c9c9;"></div><div class="t" style="left:1089.00px;top:713px;font:11px/12px 'Liberation Sans',sans-serif;color:#000;letter-spacing:0.059px;">Time Series Editor</div><svg class="s" style="left:1849px;top:712px;" width="11" height="11" viewBox="0 0 11 11"><rect x="3.5" y="0.5" width="6" height="3.5" stroke="#222" stroke-width="1.3" fill="none"/><rect x="0.5" y="3.5" width="6.5" height="6.5" stroke="#222" stroke-width="1.3" fill="none"/></svg><svg class="s" style="left:1868px;top:713px;" width="10" height="10" viewBox="0 0 10 10"><path d="M0.5 0.5 L9.5 9.5 M9.5 0.5 L0.5 9.5" stroke="#111" stroke-width="1.1"/></svg><div class="r" style="left:424px;top:726px;width:1px;height:267px;background:#d0d0d0;"></div><div class="r" style="left:1881px;top:726px;width:1px;height:267px;background:#c6c6c6;"></div><div class="r" style="left:424px;top:992px;width:1458px;height:1px;background:#c6c6c6;"></div><div class="r" style="left:430px;top:763px;width:1442px;height:202px;background:#fff;border-left:1px solid #b4b4b4;border-top:1px solid #b4b4b4;border-bottom:1px solid #b4b4b4;box-sizing:border-box;"></div><div class="r" style="left:430px;top:735px;width:150px;height:22px;background:linear-gradient(#fdfdfd,#ececec);border:1px solid #acacac;border-radius:3px;box-sizing:border-box;"></div><div class="t" style="left:434.80px;top:741px;font:11px/12px 'Liberation Sans',sans-serif;color:#000;letter-spacing:-0.333px;">Tide</div><svg class="s" style="left:565px;top:744px;" width="9" height="5" viewBox="0 0 9 5"><path d="M0 0 H9 L4.5 5Z" fill="#333"/></svg><div class="r" style="left:581px;top:735px;width:150px;height:22px;background:linear-gradient(#f8f8f8,#eeeeee);border:1px solid #c2c2c2;border-radius:3px;box-sizing:border-box;"></div><div style="position:absolute;left:585px;top:738px;width:124px;height:16px;overflow:hidden"><div class="t" style="left:0.80px;top:3px;font:11px/12px 'Liberation Sans',sans-serif;color:#8c8c8c;letter-spacing:0.240px;">Mill Bay Station (realtide</div></div><svg class="s" style="left:713px;top:744px;" width="9" height="5" viewBox="0 0 9 5"><path d="M0 0 H9 L4.5 5Z" fill="#b0b0b0"/></svg><svg class="s" style="left:741px;top:740px;" width="14" height="13" viewBox="0 0 14 13"><path d="M0.5 0.5 H11 L13.5 3 V12.5 H0.5Z" fill="#e6e6e6" stroke="#bdbdbd"/><rect x="3" y="0.5" width="7" height="4.5" fill="#c8c8c8"/><rect x="2.5" y="7.5" width="9" height="5" fill="#f6f6f6" stroke="#c8c8c8"/></svg><div class="r" style="left:765px;top:741px;width:1px;height:12px;background:#d4d4d4;"></div><svg class="s" style="left:773px;top:740px;" width="14" height="13" viewBox="0 0 14 13"><path d="M1 6.5 L7 1 L13 6.5 M2.8 5.5 V12.3 H11.2 V5.5 M5.6 12.3 V8.5 H8.4 V12.3" stroke="#222" stroke-width="1.6" fill="none" stroke-linejoin="round"/></svg><div class="r" style="left:793px;top:735px;width:24px;height:23px;background:#dadada;border:1px solid #b4b4b4;border-radius:3px;box-sizing:border-box;"></div><svg class="s" style="left:801px;top:740px;" width="9" height="13" viewBox="0 0 9 13"><path d="M1 0.5 L8 7.2 L5 7.2 L6.8 11.8 L5 12.5 L3.2 8 L1 10Z" fill="#222"/></svg><svg class="s" style="left:823px;top:739px;" width="14" height="14" viewBox="0 0 14 14"><circle cx="5.3" cy="5.3" r="4.1" stroke="#222" stroke-width="1.6" fill="none"/><path d="M8.3 8.3 L13 13" stroke="#222" stroke-width="2"/></svg><div class="r" style="left:847px;top:741px;width:1px;height:12px;background:#d4d4d4;"></div><svg class="s" style="left:853px;top:737px;" width="18" height="18" viewBox="0 0 18 18"><rect x="2.5" y="3.5" width="13" height="13" stroke="#222" stroke-width="1.4" stroke-dasharray="1.6 1.6" fill="none"/><path d="M0.5 3 H5.5 M3 0.5 V5.5" stroke="#222" stroke-width="1.3"/><path d="M9 6 V11.5 M9 13 V14.5" stroke="#222" stroke-width="1.6"/></svg><svg class="s" style="left:878px;top:737px;" width="18" height="18" viewBox="0 0 18 18"><rect x="2.5" y="3.5" width="13" height="13" stroke="#222" stroke-width="1.4" stroke-dasharray="1.6 1.6" fill="none"/><path d="M0.5 3 H5.5 M3 0.5 V5.5" stroke="#222" stroke-width="1.3"/><path d="M6 7 L12 13 M12 7 L6 13" stroke="#222" stroke-width="1.5"/></svg><svg class="s" style="left:903px;top:737px;" width="18" height="18" viewBox="0 0 18 18"><rect x="2.5" y="3.5" width="13" height="13" stroke="#222" stroke-width="1.4" stroke-dasharray="1.6 1.6" fill="none"/><path d="M0.5 3 H5.5 M3 0.5 V5.5" stroke="#222" stroke-width="1.3"/><path d="M5.5 10 L8 12.5 L13 7.5" stroke="#222" stroke-width="1.5" fill="none"/></svg><div class="r" style="left:929px;top:741px;width:1px;height:12px;background:#d4d4d4;"></div><svg class="s" style="left:936px;top:739px;" width="16" height="14" viewBox="0 0 16 14"><path d="M4 4.5 A5 5 0 1 1 6.5 12.5" stroke="#c4c4c4" stroke-width="1.6" fill="none"/><path d="M1 1.5 L6.5 4.5 L1.5 8Z" fill="#c4c4c4"/></svg><svg class="s" style="left:1856px;top:742px;" width="16" height="14" viewBox="0 0 16 14"><rect x="0.5" y="0.5" width="9" height="8" fill="#fff" stroke="#808080"/><path d="M2.5 3.5 H7.5 M2.5 5.5 H7.5" stroke="#808080"/><path d="M8.5 10 H14.5 L11.5 13Z" fill="#333"/></svg><div class="r" style="left:426px;top:727px;width:1449px;height:237px;border:1px solid #ff0000;box-sizing:border-box;border-width:2px;"></div>
<div class="r" style="left:1882px;top:78px;width:1px;height:940px;background:#c3c3c3;"></div><div class="r" style="left:1883px;top:78px;width:37px;height:940px;background:linear-gradient(90deg,#f9f9f9,#f1f1f1);"></div><div class="r" style="left:1920px;top:0px;width:8px;height:22px;background:#ebebeb;"></div><div class="r" style="left:1920px;top:22px;width:8px;height:3px;background:#d6d6d6;"></div><div class="r" style="left:1920px;top:25px;width:8px;height:35px;background:linear-gradient(#f4f4f4,#e6e6e6);"></div><div class="r" style="left:1920px;top:60px;width:8px;height:42px;background:#1f4e7e;"></div><div class="r" style="left:1920px;top:102px;width:8px;height:139px;background:#f4f4f4;"></div><div class="r" style="left:1920px;top:241px;width:8px;height:2px;background:#cfcfcf;"></div><div class="r" style="left:1920px;top:243px;width:8px;height:805px;background:#fdfdfd;"></div><svg class="s" style="left:1883px;top:78px;" width="37" height="12" viewBox="0 0 37 12"><rect x="11" y="5" width="1" height="1" fill="#aaa"/><rect x="11" y="8" width="1" height="1" fill="#aaa"/><rect x="14" y="5" width="1" height="1" fill="#aaa"/><rect x="14" y="8" width="1" height="1" fill="#aaa"/><rect x="17" y="5" width="1" height="1" fill="#aaa"/><rect x="17" y="8" width="1" height="1" fill="#aaa"/><rect x="20" y="5" width="1" height="1" fill="#aaa"/><rect x="20" y="8" width="1" height="1" fill="#aaa"/><rect x="23" y="5" width="1" height="1" fill="#aaa"/><rect x="23" y="8" width="1" height="1" fill="#aaa"/><rect x="26" y="5" width="1" height="1" fill="#aaa"/><rect x="26" y="8" width="1" height="1" fill="#aaa"/></svg><div class="r" style="left:1886px;top:91px;width:30px;height:29px;background:#dedede;border:1px solid #a9a9a9;border-radius:4px;box-sizing:border-box;"></div><svg class="s" style="left:1894px;top:98px;" width="15" height="15" viewBox="0 0 15 15"><rect x="1" y="1" width="13" height="13" rx="2" fill="#666"/><rect x="2.3" y="2.6" width="2.6" height="2.2" rx="1" fill="#eee"/><rect x="2.3" y="6.6" width="2.6" height="2.2" rx="1" fill="#eee"/><rect x="2.3" y="10.6" width="2.6" height="2.2" rx="1" fill="#eee"/><rect x="6.3" y="2.6" width="2.6" height="2.2" rx="1" fill="#eee"/><rect x="6.3" y="6.6" width="2.6" height="2.2" rx="1" fill="#eee"/><rect x="6.3" y="10.6" width="2.6" height="2.2" rx="1" fill="#eee"/><rect x="10.3" y="2.6" width="2.6" height="2.2" rx="1" fill="#eee"/><rect x="10.3" y="6.6" width="2.6" height="2.2" rx="1" fill="#eee"/><rect x="10.3" y="10.6" width="2.6" height="2.2" rx="1" fill="#eee"/></svg><svg class="s" style="left:1890px;top:128px;" width="22" height="14" viewBox="0 0 22 14"><path d="M1 6.5 L10.5 1 L20 6.5 L10.5 12Z M5.75 3.75 L15.25 9.25 M15.25 3.75 L5.75 9.25 M3.4 5.1 L12.9 10.6 M8.1 2.4 L17.6 7.9 M17.6 5.1 L8.1 10.6 M12.9 2.4 L3.4 7.9" stroke="#222" stroke-width="1.2" fill="none"/></svg><div class="r" style="left:1892px;top:154px;width:18px;height:1px;background:#d6d6d6;"></div><svg class="s" style="left:1890px;top:161px;" width="22" height="23" viewBox="0 0 22 23"><path d="M1.3 1.5 L3.2 3.4 M20.7 1.5 L18.8 3.4 M1.3 21.5 L3.2 19.6 M20.7 21.5 L18.8 19.6" stroke="#111" stroke-width="1.9" stroke-linecap="round"/><path d="M4.7 4.9 V1.6 H4.2 L1.4 4.4 V4.9Z M17.3 4.9 V1.6 H17.8 L20.6 4.4 V4.9Z M4.7 18.1 V21.4 H4.2 L1.4 18.6 V18.1Z M17.3 18.1 V21.4 H17.8 L20.6 18.6 V18.1Z" fill="#111"/><path d="M4 7.5 Q11 3.6 18 7.5 V15 L11 18.6 L4 15Z" fill="#fff" stroke="#222" stroke-width="1.1"/><path d="M4 7.5 Q11 3.6 18 7.5 V15 Q11 11.2 4 15Z" fill="#2a2a2a"/><circle cx="5.4" cy="8.5" r="0.75" fill="#fff"/><circle cx="5.4" cy="10.6" r="0.75" fill="#fff"/><circle cx="5.4" cy="12.7" r="0.75" fill="#fff"/><circle cx="7.6" cy="7.6" r="0.75" fill="#fff"/><circle cx="7.6" cy="9.7" r="0.75" fill="#fff"/><circle cx="7.6" cy="11.8" r="0.75" fill="#fff"/><circle cx="14.4" cy="7.6" r="0.75" fill="#fff"/><circle cx="14.4" cy="9.7" r="0.75" fill="#fff"/><circle cx="14.4" cy="11.8" r="0.75" fill="#fff"/><circle cx="16.6" cy="8.5" r="0.75" fill="#fff"/><circle cx="16.6" cy="10.6" r="0.75" fill="#fff"/><circle cx="16.6" cy="12.7" r="0.75" fill="#fff"/><path d="M9.5 7.2 H12.5 M9.5 9.4 H12.5 M9.5 11.5 H12.5" stroke="#aaa" stroke-width="0.8"/></svg><svg class="s" style="left:1890px;top:191px;" width="22" height="23" viewBox="0 0 22 23"><path d="M1.3 1.5 L3.2 3.4 M20.7 1.5 L18.8 3.4 M1.3 21.5 L3.2 19.6 M20.7 21.5 L18.8 19.6" stroke="#111" stroke-width="1.9" stroke-linecap="round"/><path d="M4.7 4.9 V1.6 H4.2 L1.4 4.4 V4.9Z M17.3 4.9 V1.6 H17.8 L20.6 4.4 V4.9Z M4.7 18.1 V21.4 H4.2 L1.4 18.6 V18.1Z M17.3 18.1 V21.4 H17.8 L20.6 18.6 V18.1Z" fill="#111"/><path d="M11 4.3 L17.6 7.6 V15.2 L11 18.5 L4.4 15.2 V7.6Z M4.4 7.6 L11 10.9 L17.6 7.6 M11 10.9 V18.5" stroke="#222" stroke-width="1.1" fill="#fff" stroke-linejoin="round"/></svg><div class="r" style="left:1892px;top:221px;width:18px;height:1px;background:#d6d6d6;"></div><div class="r" style="left:1886px;top:225px;width:30px;height:29px;background:#dedede;border:1px solid #a9a9a9;border-radius:4px;box-sizing:border-box;"></div><svg class="s" style="left:1894px;top:230px;" width="14" height="20" viewBox="0 0 14 20"><path d="M2 2 L12 11 L7.5 11.2 L10.5 17.5 L8 18.6 L5.2 12.4 L2 15.5Z" fill="#222"/></svg><svg class="s" style="left:1892px;top:258px;" width="18" height="22" viewBox="0 0 18 22"><rect x="2.5" y="1.5" width="13" height="19" fill="none" stroke="#222" stroke-width="1.4"/><rect x="0.5" y="9" width="3" height="3" fill="#222"/><rect x="14.5" y="9" width="3" height="3" fill="#222"/><path d="M6 6 L12.5 11.5 L10 11.6 L11.5 15 L10.2 15.6 L8.7 12.2 L6 14Z" fill="#222"/></svg><div class="r" style="left:1892px;top:288px;width:18px;height:1px;background:#d6d6d6;"></div><svg class="s" style="left:1891px;top:296px;" width="20" height="20" viewBox="0 0 20 20"><rect x="2" y="2" width="16" height="16" stroke="#222" stroke-width="1.6" stroke-dasharray="1.5 1.6" fill="none"/><circle cx="2" cy="2" r="1.6" fill="#fff" stroke="#222"/><circle cx="18" cy="2" r="1.6" fill="#fff" stroke="#222"/><circle cx="2" cy="18" r="1.6" fill="#fff" stroke="#222"/><circle cx="18" cy="18" r="1.6" fill="#fff" stroke="#222"/><circle cx="10" cy="10" r="1.8" fill="#222"/></svg><svg class="s" style="left:1891px;top:326px;" width="20" height="20" viewBox="0 0 20 20"><path d="M1.5 1.5 H18.5 L11 10 L18.5 18.5 H1.5Z" stroke="#222" stroke-width="1.6" stroke-dasharray="1.5 1.6" fill="none"/></svg><svg class="s" style="left:1891px;top:355px;" width="20" height="22" viewBox="0 0 20 22"><path d="M4 2.5 C7 0.5 9.5 4 11 5.5 C14 7.5 18 9 17.5 14 C17 19 11 20 8 18.5 C5 17 5.5 13 3.5 10 C1.5 7 1.5 4 4 2.5Z" stroke="#222" stroke-width="1.6" stroke-dasharray="1.5 1.6" fill="none"/></svg><div class="r" style="left:1892px;top:385px;width:18px;height:1px;background:#d6d6d6;"></div><svg class="s" style="left:1891px;top:393px;" width="20" height="20" viewBox="0 0 20 20"><path d="M1 1 V18.5 H19" stroke="#222" stroke-width="1.6" fill="none"/><path d="M3 17 V12 L6 8 L9 11 L13 7.5 L15 9 L18 5 V17Z" fill="#222"/></svg><svg class="s" style="left:1890px;top:422px;" width="22" height="20" viewBox="0 0 22 20"><path d="M1.5 14.5 L14.5 1.5 L20.5 7.5 L7.5 20.5Z" stroke="#222" stroke-width="1.5" fill="none"/><path d="M5 14 L7 16 M7.5 11.5 L9.5 13.5 M10 9 L12 11 M12.5 6.5 L14.5 8.5" stroke="#222" stroke-width="1"/></svg><div class="r" style="left:1892px;top:452px;width:18px;height:1px;background:#d6d6d6;"></div><div class="r" style="left:1886px;top:456px;width:30px;height:29px;background:#dedede;border:1px solid #a9a9a9;border-radius:4px;box-sizing:border-box;"></div><svg class="s" style="left:1892px;top:464px;" width="19" height="12" viewBox="0 0 19 12"><defs><linearGradient id="cb" x1="0" x2="1"><stop offset="0" stop-color="#e83a1a"/><stop offset="0.5" stop-color="#3fb04a"/><stop offset="1" stop-color="#1a48b8"/></linearGradient></defs><rect x="0.5" y="0.5" width="18" height="11" fill="url(#cb)" stroke="#222" stroke-width="1.6"/></svg><svg class="s" style="left:1891px;top:489px;" width="20" height="22" viewBox="0 0 20 22"><path d="M10 1 L19 5 V15 L10 21 L1 15 V5Z" fill="none" stroke="#555" stroke-width="1"/><path d="M1 5 L10 9 L19 5 M10 9 V15 M1 8.3 L10 12.3 L19 8.3 M1 11.6 L10 15.6 L19 11.6 M4 3.7 V13.5 M7 2.4 V12 M13 2.4 V12 M16 3.7 V13.5 M1 15 L10 19 L19 15" stroke="#555" stroke-width="0.9" fill="none"/></svg><svg class="s" style="left:1890px;top:522px;" width="22" height="16" viewBox="0 0 22 16"><path d="M4 6 C5 2 17 2 18.5 5.5" stroke="#222" stroke-width="2.2" fill="none"/><path d="M18 10 C17 14 5 14 3.5 10.5" stroke="#222" stroke-width="2.2" fill="none"/><path d="M1 4 L7 3 L4 9Z M21 12 L15 13 L18 7Z" fill="#222"/></svg><svg class="s" style="left:1890px;top:550px;" width="22" height="20" viewBox="0 0 22 20"><path d="M11 2 L19 6 V14 L11 18 L3 14 V6Z M3 6 L11 10 L19 6 M11 10 V18" stroke="#222" stroke-width="1.3" fill="none"/><circle cx="11" cy="2" r="2" fill="#222"/><circle cx="19" cy="6" r="2" fill="#222"/><circle cx="19" cy="14" r="2" fill="#222"/><circle cx="11" cy="18" r="2" fill="#222"/><circle cx="3" cy="14" r="2" fill="#222"/><circle cx="3" cy="6" r="2" fill="#222"/><circle cx="11" cy="10" r="2" fill="#222"/></svg>
<div class="r" style="left:424px;top:994px;width:1458px;height:1px;background:#c6c6c6;"></div><div class="r" style="left:424px;top:995px;width:72px;height:20px;background:#e1e1e1;border:1px solid #c6c6c6;border-top:none;border-radius:0 0 3px 3px;box-sizing:border-box;"></div><div class="t" style="left:436.00px;top:999px;font:11px/12px 'Liberation Sans',sans-serif;color:#000;letter-spacing:0.111px;">File Table</div><div class="r" style="left:610px;top:995px;width:99px;height:20px;background:#e1e1e1;border:1px solid #c6c6c6;border-top:none;border-radius:0 0 3px 3px;box-sizing:border-box;"></div><div class="t" style="left:622.00px;top:999px;font:11px/12px 'Liberation Sans',sans-serif;color:#000;letter-spacing:0.545px;">Water Column</div><div class="r" style="left:709px;top:995px;width:57px;height:20px;background:#e1e1e1;border:1px solid #c6c6c6;border-top:none;border-radius:0 0 3px 3px;box-sizing:border-box;"></div><div class="t" style="left:720.00px;top:999px;font:11px/12px 'Liberation Sans',sans-serif;color:#000;letter-spacing:0.500px;">Profile</div><div class="r" style="left:766px;top:995px;width:101px;height:20px;background:#e1e1e1;border:1px solid #c6c6c6;border-top:none;border-radius:0 0 3px 3px;box-sizing:border-box;"></div><div class="t" style="left:777.00px;top:999px;font:11px/12px 'Liberation Sans',sans-serif;color:#000;letter-spacing:-0.071px;">Process History</div><div class="r" style="left:867px;top:995px;width:130px;height:20px;background:#e1e1e1;border:1px solid #c6c6c6;border-top:none;border-radius:0 0 3px 3px;box-sizing:border-box;"></div><div class="t" style="left:878.00px;top:999px;font:11px/12px 'Liberation Sans',sans-serif;color:#000;letter-spacing:0.250px;">Time Series Multiplot</div><div class="r" style="left:497px;top:994px;width:112px;height:23px;background:linear-gradient(#f3f3f3,#fbfbfb);"></div><div class="t" style="left:508.00px;top:1001px;font:11px/12px 'Liberation Sans',sans-serif;color:#000;letter-spacing:0.059px;">Time Series Editor</div><div class="t" style="left:12.00px;top:1022px;font:11px/12px 'Liberation Sans',sans-serif;color:#000;letter-spacing:0.400px;">Information not available.</div><div class="t" style="left:1637.60px;top:1022px;font:11px/12px 'Liberation Sans',sans-serif;color:#000;letter-spacing:0.154px;">Tiles Loading:</div><div class="t" style="left:1729.00px;top:1022px;font:11px/12px 'Liberation Sans',sans-serif;color:#000;">0</div><svg class="s" style="left:1752px;top:1024px;" width="80" height="12" viewBox="0 0 80 12"><rect x="0.65" y="0.65" width="5.4" height="9.7" rx="1.8" fill="none" stroke="#b0b0b0" stroke-width="1.3"/><rect x="8.53" y="0.65" width="5.4" height="9.7" rx="1.8" fill="none" stroke="#b0b0b0" stroke-width="1.3"/><rect x="16.41" y="0.65" width="5.4" height="9.7" rx="1.8" fill="none" stroke="#b0b0b0" stroke-width="1.3"/><rect x="24.29" y="0.65" width="5.4" height="9.7" rx="1.8" fill="none" stroke="#b0b0b0" stroke-width="1.3"/><rect x="32.17" y="0.65" width="5.4" height="9.7" rx="1.8" fill="none" stroke="#b0b0b0" stroke-width="1.3"/><rect x="40.05" y="0.65" width="5.4" height="9.7" rx="1.8" fill="none" stroke="#b0b0b0" stroke-width="1.3"/><rect x="47.93" y="0.65" width="5.4" height="9.7" rx="1.8" fill="none" stroke="#b0b0b0" stroke-width="1.3"/><rect x="55.81" y="0.65" width="5.4" height="9.7" rx="1.8" fill="none" stroke="#b0b0b0" stroke-width="1.3"/><rect x="63.69" y="0.65" width="5.4" height="9.7" rx="1.8" fill="none" stroke="#b0b0b0" stroke-width="1.3"/><rect x="71.57" y="0.65" width="5.4" height="9.7" rx="1.8" fill="none" stroke="#b0b0b0" stroke-width="1.3"/></svg><div class="t" style="left:1837.00px;top:1024px;font:11px/12px 'Liberation Sans',sans-serif;color:#000;letter-spacing:0.000px;">300.6 MB</div><svg class="s" style="left:1903px;top:1020px;" width="17" height="18" viewBox="0 0 17 18"><rect x="1" y="2" width="14" height="14" fill="#e2e2e2" stroke="#c8c8c8"/><path d="M3 6 H13 M3 9 H13 M3 12 H13" stroke="#f4f4f4"/><path d="M0.5 10.5 L4 9 L6.5 12.5 L14 1.5 L16.5 1 L7 16.5Z" fill="#2b8a3e"/></svg><div class="r" style="left:0px;top:1040px;width:1920px;height:8px;background:linear-gradient(90deg,#4e4e4e,#666 60%,#5a5a5a);"></div><div class="r" style="left:820px;top:1040px;width:190px;height:8px;background:linear-gradient(100deg,transparent,rgba(220,220,220,0.35) 50%,transparent);"></div><div class="r" style="left:1380px;top:1040px;width:90px;height:8px;background:linear-gradient(100deg,transparent,rgba(220,220,220,0.3) 50%,transparent);"></div><div class="r" style="left:1500px;top:1040px;width:120px;height:8px;background:linear-gradient(100deg,transparent,rgba(220,220,220,0.35) 50%,transparent);"></div><div class="r" style="left:1080px;top:1040px;width:50px;height:8px;background:linear-gradient(100deg,transparent,rgba(220,220,220,0.2) 50%,transparent);"></div><div class="r" style="left:1160px;top:1040px;width:80px;height:8px;background:linear-gradient(100deg,transparent,rgba(220,220,220,0.18) 50%,transparent);"></div><div class="r" style="left:1640px;top:1040px;width:60px;height:8px;background:linear-gradient(100deg,transparent,rgba(220,220,220,0.15) 50%,transparent);"></div><div class="r" style="left:52px;top:1041px;width:59px;height:7px;background:#777;border:1px solid #999;border-bottom:none;box-sizing:border-box;"></div><div class="r" style="left:114px;top:1041px;width:59px;height:7px;background:#777;border:1px solid #999;border-bottom:none;box-sizing:border-box;"></div><div class="r" style="left:176px;top:1041px;width:51px;height:7px;background:#777;border:1px solid #999;border-bottom:none;box-sizing:border-box;"></div><div class="r" style="left:238px;top:1041px;width:59px;height:7px;background:#777;border:1px solid #999;border-bottom:none;box-sizing:border-box;"></div><div class="r" style="left:300px;top:1041px;width:59px;height:7px;background:#777;border:1px solid #999;border-bottom:none;box-sizing:border-box;"></div><div class="r" style="left:362px;top:1041px;width:59px;height:7px;background:#777;border:1px solid #999;border-bottom:none;box-sizing:border-box;"></div><div class="r" style="left:424px;top:1041px;width:59px;height:7px;background:#777;border:1px solid #999;border-bottom:none;box-sizing:border-box;"></div><svg class="s" style="left:0px;top:1040px;" width="500" height="8" viewBox="0 0 500 8"><path d="M66 8 L84 4 V8Z" fill="#1a73d0"/><rect x="129" y="6.5" width="15" height="2" fill="#e0c070"/><circle cx="201" cy="12.5" r="8" fill="#e04a3a"/><ellipse cx="262" cy="11" rx="10" ry="6" fill="#1aa0e8"/><rect x="313" y="4.5" width="32" height="4" fill="#f08c00"/><circle cx="392" cy="12" r="7" fill="#e84a4a"/><circle cx="392" cy="12" r="5.5" fill="#f4f4f4"/><rect x="437" y="4.5" width="44" height="4" fill="#1d2f33" stroke="#18a0b0" stroke-width="1"/><path d="M25 8 L38 6 V8Z" fill="#e8e8e8"/></svg><div class="r" style="left:228px;top:1041px;width:2px;height:7px;background:#888;"></div><div class="r" style="left:232px;top:1041px;width:2px;height:7px;background:#888;"></div>
<svg class="s" style="left:600px;top:170px;" width="800" height="520" viewBox="0 0 800 520"><defs><clipPath id="tc"><polygon points="23,372 45,367 64,368 81,380 57,340 90,337 110,336 120,340 130,345 145,340 156,337 140,320 153,304 170,293 187,286 210,260 228,249 253,243 273,237 306,215 329,190 350,169 387,153 430,126 430,121 445,108 473,93 493,82 535,73 561,58 594,46 626,36 654,24 678,14 681,56 729,92 774,123 751,136 718,145 693,144 714,164 683,192 658,194 656,222 651,226 660,236 625,255 671,248 672,295 666,299 675,319 623,327 623,361 589,358 532,350 474,345 440,345 402,343 364,350 316,356 278,360 249,367 233,373 205,379 182,393 173,416 165,436 139,456 87,499 62,428"/></clipPath><filter id="bl" x="-5%" y="-5%" width="110%" height="110%"><feGaussianBlur stdDeviation="7"/></filter></defs><g clip-path="url(#tc)"><g filter="url(#bl)"><rect x="12" y="6" width="14" height="14" fill="#7e9044"/><rect x="26" y="6" width="14" height="14" fill="#7f9143"/><rect x="40" y="6" width="14" height="14" fill="#7f9242"/><rect x="54" y="6" width="14" height="14" fill="#809241"/><rect x="68" y="6" width="14" height="14" fill="#809340"/><rect x="82" y="6" width="14" height="14" fill="#80943f"/><rect x="96" y="6" width="14" height="14" fill="#81953f"/><rect x="110" y="6" width="14" height="14" fill="#81963e"/><rect x="124" y="6" width="14" height="14" fill="#81973d"/><rect x="138" y="6" width="14" height="14" fill="#81993c"/><rect x="152" y="6" width="14" height="14" fill="#819a3c"/><rect x="166" y="6" width="14" height="14" fill="#809b3b"/><rect x="180" y="6" width="14" height="14" fill="#7f9c3b"/><rect x="194" y="6" width="14" height="14" fill="#7f9d3b"/><rect x="208" y="6" width="14" height="14" fill="#7d9e3b"/><rect x="222" y="6" width="14" height="14" fill="#7c9f3b"/><rect x="236" y="6" width="14" height="14" fill="#7aa03c"/><rect x="250" y="6" width="14" height="14" fill="#78a13c"/><rect x="264" y="6" width="14" height="14" fill="#76a23d"/><rect x="278" y="6" width="14" height="14" fill="#73a23f"/><rect x="292" y="6" width="14" height="14" fill="#70a340"/><rect x="306" y="6" width="14" height="14" fill="#6ca442"/><rect x="320" y="6" width="14" height="14" fill="#68a544"/><rect x="334" y="6" width="14" height="14" fill="#64a547"/><rect x="348" y="6" width="14" height="14" fill="#60a64a"/><rect x="362" y="6" width="14" height="14" fill="#5ca64e"/><rect x="376" y="6" width="14" height="14" fill="#57a752"/><rect x="390" y="6" width="14" height="14" fill="#53a756"/><rect x="404" y="6" width="14" height="14" fill="#4fa75b"/><rect x="418" y="6" width="14" height="14" fill="#4ba761"/><rect x="432" y="6" width="14" height="14" fill="#47a766"/><rect x="446" y="6" width="14" height="14" fill="#43a66d"/><rect x="460" y="6" width="14" height="14" fill="#40a673"/><rect x="474" y="6" width="14" height="14" fill="#3da579"/><rect x="488" y="6" width="14" height="14" fill="#3aa380"/><rect x="502" y="6" width="14" height="14" fill="#38a187"/><rect x="516" y="6" width="14" height="14" fill="#359e8d"/><rect x="530" y="6" width="14" height="14" fill="#339a94"/><rect x="544" y="6" width="14" height="14" fill="#31959b"/><rect x="558" y="6" width="14" height="14" fill="#308fa2"/><rect x="572" y="6" width="14" height="14" fill="#2e86a9"/><rect x="586" y="6" width="14" height="14" fill="#2e7daf"/><rect x="600" y="6" width="14" height="14" fill="#2f70b4"/><rect x="614" y="6" width="14" height="14" fill="#315fb8"/><rect x="628" y="6" width="14" height="14" fill="#394eba"/><rect x="642" y="6" width="14" height="14" fill="#4a38b9"/><rect x="656" y="6" width="14" height="14" fill="#5927b7"/><rect x="670" y="6" width="14" height="14" fill="#5b26b7"/><rect x="684" y="6" width="14" height="14" fill="#5430b4"/><rect x="698" y="6" width="14" height="14" fill="#4941af"/><rect x="712" y="6" width="14" height="14" fill="#4150a8"/><rect x="726" y="6" width="14" height="14" fill="#3b5ba2"/><rect x="740" y="6" width="14" height="14" fill="#38639d"/><rect x="754" y="6" width="14" height="14" fill="#376899"/><rect x="768" y="6" width="14" height="14" fill="#366c95"/><rect x="782" y="6" width="14" height="14" fill="#366f92"/><rect x="12" y="20" width="14" height="14" fill="#7f8f44"/><rect x="26" y="20" width="14" height="14" fill="#7f9043"/><rect x="40" y="20" width="14" height="14" fill="#809142"/><rect x="54" y="20" width="14" height="14" fill="#809241"/><rect x="68" y="20" width="14" height="14" fill="#819340"/><rect x="82" y="20" width="14" height="14" fill="#81943f"/><rect x="96" y="20" width="14" height="14" fill="#81953e"/><rect x="110" y="20" width="14" height="14" fill="#82963d"/><rect x="124" y="20" width="14" height="14" fill="#82983c"/><rect x="138" y="20" width="14" height="14" fill="#82993b"/><rect x="152" y="20" width="14" height="14" fill="#829a3b"/><rect x="166" y="20" width="14" height="14" fill="#819b3a"/><rect x="180" y="20" width="14" height="14" fill="#819c3a"/><rect x="194" y="20" width="14" height="14" fill="#809d3a"/><rect x="208" y="20" width="14" height="14" fill="#7f9e3a"/><rect x="222" y="20" width="14" height="14" fill="#7e9f3a"/><rect x="236" y="20" width="14" height="14" fill="#7ca03a"/><rect x="250" y="20" width="14" height="14" fill="#7aa13b"/><rect x="264" y="20" width="14" height="14" fill="#77a23b"/><rect x="278" y="20" width="14" height="14" fill="#74a33d"/><rect x="292" y="20" width="14" height="14" fill="#71a43e"/><rect x="306" y="20" width="14" height="14" fill="#6da540"/><rect x="320" y="20" width="14" height="14" fill="#69a642"/><rect x="334" y="20" width="14" height="14" fill="#65a745"/><rect x="348" y="20" width="14" height="14" fill="#60a748"/><rect x="362" y="20" width="14" height="14" fill="#5ba84c"/><rect x="376" y="20" width="14" height="14" fill="#56a850"/><rect x="390" y="20" width="14" height="14" fill="#51a955"/><rect x="404" y="20" width="14" height="14" fill="#4da95b"/><rect x="418" y="20" width="14" height="14" fill="#48a961"/><rect x="432" y="20" width="14" height="14" fill="#44a967"/><rect x="446" y="20" width="14" height="14" fill="#40a96e"/><rect x="460" y="20" width="14" height="14" fill="#3da876"/><rect x="474" y="20" width="14" height="14" fill="#3aa87d"/><rect x="488" y="20" width="14" height="14" fill="#37a684"/><rect x="502" y="20" width="14" height="14" fill="#34a58b"/><rect x="516" y="20" width="14" height="14" fill="#32a293"/><rect x="530" y="20" width="14" height="14" fill="#309f9a"/><rect x="544" y="20" width="14" height="14" fill="#2e9aa1"/><rect x="558" y="20" width="14" height="14" fill="#2c93a8"/><rect x="572" y="20" width="14" height="14" fill="#2a8bb1"/><rect x="586" y="20" width="14" height="14" fill="#2982b8"/><rect x="600" y="20" width="14" height="14" fill="#2974bc"/><rect x="614" y="20" width="14" height="14" fill="#2a60c0"/><rect x="628" y="20" width="14" height="14" fill="#2d51c4"/><rect x="642" y="20" width="14" height="14" fill="#403dbf"/><rect x="656" y="20" width="14" height="14" fill="#5b25b8"/><rect x="670" y="20" width="14" height="14" fill="#5c23b7"/><rect x="684" y="20" width="14" height="14" fill="#532fb5"/><rect x="698" y="20" width="14" height="14" fill="#4643af"/><rect x="712" y="20" width="14" height="14" fill="#3d53a8"/><rect x="726" y="20" width="14" height="14" fill="#375ea2"/><rect x="740" y="20" width="14" height="14" fill="#35659d"/><rect x="754" y="20" width="14" height="14" fill="#346999"/><rect x="768" y="20" width="14" height="14" fill="#346d96"/><rect x="782" y="20" width="14" height="14" fill="#346f93"/><rect x="12" y="34" width="14" height="14" fill="#7f8f44"/><rect x="26" y="34" width="14" height="14" fill="#7f9043"/><rect x="40" y="34" width="14" height="14" fill="#809142"/><rect x="54" y="34" width="14" height="14" fill="#809241"/><rect x="68" y="34" width="14" height="14" fill="#819340"/><rect x="82" y="34" width="14" height="14" fill="#81943f"/><rect x="96" y="34" width="14" height="14" fill="#82953e"/><rect x="110" y="34" width="14" height="14" fill="#82963c"/><rect x="124" y="34" width="14" height="14" fill="#83983b"/><rect x="138" y="34" width="14" height="14" fill="#83993b"/><rect x="152" y="34" width="14" height="14" fill="#839a3a"/><rect x="166" y="34" width="14" height="14" fill="#839b39"/><rect x="180" y="34" width="14" height="14" fill="#829c39"/><rect x="194" y="34" width="14" height="14" fill="#829e38"/><rect x="208" y="34" width="14" height="14" fill="#819f38"/><rect x="222" y="34" width="14" height="14" fill="#80a038"/><rect x="236" y="34" width="14" height="14" fill="#7ea138"/><rect x="250" y="34" width="14" height="14" fill="#7ca239"/><rect x="264" y="34" width="14" height="14" fill="#79a339"/><rect x="278" y="34" width="14" height="14" fill="#76a43a"/><rect x="292" y="34" width="14" height="14" fill="#72a53c"/><rect x="306" y="34" width="14" height="14" fill="#6ea63e"/><rect x="320" y="34" width="14" height="14" fill="#6aa740"/><rect x="334" y="34" width="14" height="14" fill="#65a842"/><rect x="348" y="34" width="14" height="14" fill="#60a946"/><rect x="362" y="34" width="14" height="14" fill="#5ba94a"/><rect x="376" y="34" width="14" height="14" fill="#55aa4e"/><rect x="390" y="34" width="14" height="14" fill="#50aa54"/><rect x="404" y="34" width="14" height="14" fill="#4bab5a"/><rect x="418" y="34" width="14" height="14" fill="#46ab61"/><rect x="432" y="34" width="14" height="14" fill="#41ab69"/><rect x="446" y="34" width="14" height="14" fill="#3dab71"/><rect x="460" y="34" width="14" height="14" fill="#3aab79"/><rect x="474" y="34" width="14" height="14" fill="#36aa81"/><rect x="488" y="34" width="14" height="14" fill="#34aa89"/><rect x="502" y="34" width="14" height="14" fill="#31a891"/><rect x="516" y="34" width="14" height="14" fill="#2ea69a"/><rect x="530" y="34" width="14" height="14" fill="#2ba4a3"/><rect x="544" y="34" width="14" height="14" fill="#2aa0a9"/><rect x="558" y="34" width="14" height="14" fill="#2998af"/><rect x="572" y="34" width="14" height="14" fill="#268fb9"/><rect x="586" y="34" width="14" height="14" fill="#248ac3"/><rect x="600" y="34" width="14" height="14" fill="#247fc4"/><rect x="614" y="34" width="14" height="14" fill="#2562c6"/><rect x="628" y="34" width="14" height="14" fill="#2251cc"/><rect x="642" y="34" width="14" height="14" fill="#284dc9"/><rect x="656" y="34" width="14" height="14" fill="#4637bc"/><rect x="670" y="34" width="14" height="14" fill="#4f31b8"/><rect x="684" y="34" width="14" height="14" fill="#463db5"/><rect x="698" y="34" width="14" height="14" fill="#3c4dae"/><rect x="712" y="34" width="14" height="14" fill="#365aa8"/><rect x="726" y="34" width="14" height="14" fill="#3262a2"/><rect x="740" y="34" width="14" height="14" fill="#31689d"/><rect x="754" y="34" width="14" height="14" fill="#316b9a"/><rect x="768" y="34" width="14" height="14" fill="#316d97"/><rect x="782" y="34" width="14" height="14" fill="#326f94"/><rect x="12" y="48" width="14" height="14" fill="#7e8e45"/><rect x="26" y="48" width="14" height="14" fill="#7f8f44"/><rect x="40" y="48" width="14" height="14" fill="#809142"/><rect x="54" y="48" width="14" height="14" fill="#819241"/><rect x="68" y="48" width="14" height="14" fill="#819340"/><rect x="82" y="48" width="14" height="14" fill="#82943e"/><rect x="96" y="48" width="14" height="14" fill="#83953d"/><rect x="110" y="48" width="14" height="14" fill="#83963c"/><rect x="124" y="48" width="14" height="14" fill="#84983b"/><rect x="138" y="48" width="14" height="14" fill="#84993a"/><rect x="152" y="48" width="14" height="14" fill="#849a39"/><rect x="166" y="48" width="14" height="14" fill="#849c38"/><rect x="180" y="48" width="14" height="14" fill="#849d37"/><rect x="194" y="48" width="14" height="14" fill="#849e37"/><rect x="208" y="48" width="14" height="14" fill="#839f36"/><rect x="222" y="48" width="14" height="14" fill="#82a136"/><rect x="236" y="48" width="14" height="14" fill="#80a236"/><rect x="250" y="48" width="14" height="14" fill="#7ea337"/><rect x="264" y="48" width="14" height="14" fill="#7ba437"/><rect x="278" y="48" width="14" height="14" fill="#78a538"/><rect x="292" y="48" width="14" height="14" fill="#74a639"/><rect x="306" y="48" width="14" height="14" fill="#70a73b"/><rect x="320" y="48" width="14" height="14" fill="#6ba83d"/><rect x="334" y="48" width="14" height="14" fill="#66a940"/><rect x="348" y="48" width="14" height="14" fill="#60aa43"/><rect x="362" y="48" width="14" height="14" fill="#5aab47"/><rect x="376" y="48" width="14" height="14" fill="#54ab4c"/><rect x="390" y="48" width="14" height="14" fill="#4eac52"/><rect x="404" y="48" width="14" height="14" fill="#48ac59"/><rect x="418" y="48" width="14" height="14" fill="#43ac61"/><rect x="432" y="48" width="14" height="14" fill="#3ead6a"/><rect x="446" y="48" width="14" height="14" fill="#39ad74"/><rect x="460" y="48" width="14" height="14" fill="#36ad7e"/><rect x="474" y="48" width="14" height="14" fill="#32ae88"/><rect x="488" y="48" width="14" height="14" fill="#2fad91"/><rect x="502" y="48" width="14" height="14" fill="#2dac98"/><rect x="516" y="48" width="14" height="14" fill="#2aaaa3"/><rect x="530" y="48" width="14" height="14" fill="#27aaaf"/><rect x="544" y="48" width="14" height="14" fill="#25a8b5"/><rect x="558" y="48" width="14" height="14" fill="#26a0b5"/><rect x="572" y="48" width="14" height="14" fill="#2493bf"/><rect x="586" y="48" width="14" height="14" fill="#218fcb"/><rect x="600" y="48" width="14" height="14" fill="#218bcb"/><rect x="614" y="48" width="14" height="14" fill="#236dc6"/><rect x="628" y="48" width="14" height="14" fill="#2153cc"/><rect x="642" y="48" width="14" height="14" fill="#2451ca"/><rect x="656" y="48" width="14" height="14" fill="#2e4bc1"/><rect x="670" y="48" width="14" height="14" fill="#3148bd"/><rect x="684" y="48" width="14" height="14" fill="#314eb7"/><rect x="698" y="48" width="14" height="14" fill="#3058ae"/><rect x="712" y="48" width="14" height="14" fill="#2e61a7"/><rect x="726" y="48" width="14" height="14" fill="#2d67a1"/><rect x="740" y="48" width="14" height="14" fill="#2d6a9d"/><rect x="754" y="48" width="14" height="14" fill="#2d6c9a"/><rect x="768" y="48" width="14" height="14" fill="#2e6d97"/><rect x="782" y="48" width="14" height="14" fill="#2f6e95"/><rect x="12" y="62" width="14" height="14" fill="#7e8e45"/><rect x="26" y="62" width="14" height="14" fill="#7f8f44"/><rect x="40" y="62" width="14" height="14" fill="#809043"/><rect x="54" y="62" width="14" height="14" fill="#819141"/><rect x="68" y="62" width="14" height="14" fill="#819340"/><rect x="82" y="62" width="14" height="14" fill="#82943e"/><rect x="96" y="62" width="14" height="14" fill="#83953d"/><rect x="110" y="62" width="14" height="14" fill="#84963b"/><rect x="124" y="62" width="14" height="14" fill="#85983a"/><rect x="138" y="62" width="14" height="14" fill="#859939"/><rect x="152" y="62" width="14" height="14" fill="#869b38"/><rect x="166" y="62" width="14" height="14" fill="#869c37"/><rect x="180" y="62" width="14" height="14" fill="#869d36"/><rect x="194" y="62" width="14" height="14" fill="#859f35"/><rect x="208" y="62" width="14" height="14" fill="#85a035"/><rect x="222" y="62" width="14" height="14" fill="#84a134"/><rect x="236" y="62" width="14" height="14" fill="#82a334"/><rect x="250" y="62" width="14" height="14" fill="#80a435"/><rect x="264" y="62" width="14" height="14" fill="#7da535"/><rect x="278" y="62" width="14" height="14" fill="#7aa736"/><rect x="292" y="62" width="14" height="14" fill="#76a837"/><rect x="306" y="62" width="14" height="14" fill="#72a938"/><rect x="320" y="62" width="14" height="14" fill="#6daa3a"/><rect x="334" y="62" width="14" height="14" fill="#67ab3d"/><rect x="348" y="62" width="14" height="14" fill="#61ac40"/><rect x="362" y="62" width="14" height="14" fill="#5aac44"/><rect x="376" y="62" width="14" height="14" fill="#54ad48"/><rect x="390" y="62" width="14" height="14" fill="#4dad4f"/><rect x="404" y="62" width="14" height="14" fill="#46ae57"/><rect x="418" y="62" width="14" height="14" fill="#40ae60"/><rect x="432" y="62" width="14" height="14" fill="#3aae6c"/><rect x="446" y="62" width="14" height="14" fill="#35af78"/><rect x="460" y="62" width="14" height="14" fill="#31af85"/><rect x="474" y="62" width="14" height="14" fill="#2db092"/><rect x="488" y="62" width="14" height="14" fill="#2ab19d"/><rect x="502" y="62" width="14" height="14" fill="#29b0a1"/><rect x="516" y="62" width="14" height="14" fill="#27aea9"/><rect x="530" y="62" width="14" height="14" fill="#23aeba"/><rect x="544" y="62" width="14" height="14" fill="#21aec1"/><rect x="558" y="62" width="14" height="14" fill="#23a8ba"/><rect x="572" y="62" width="14" height="14" fill="#2497bb"/><rect x="586" y="62" width="14" height="14" fill="#2190c9"/><rect x="600" y="62" width="14" height="14" fill="#218dca"/><rect x="614" y="62" width="14" height="14" fill="#247bbf"/><rect x="628" y="62" width="14" height="14" fill="#2561bf"/><rect x="642" y="62" width="14" height="14" fill="#2656c0"/><rect x="656" y="62" width="14" height="14" fill="#2449c6"/><rect x="670" y="62" width="14" height="14" fill="#2347c7"/><rect x="684" y="62" width="14" height="14" fill="#2653bc"/><rect x="698" y="62" width="14" height="14" fill="#2860af"/><rect x="712" y="62" width="14" height="14" fill="#2967a6"/><rect x="726" y="62" width="14" height="14" fill="#296ba1"/><rect x="740" y="62" width="14" height="14" fill="#296c9d"/><rect x="754" y="62" width="14" height="14" fill="#2a6c9b"/><rect x="768" y="62" width="14" height="14" fill="#2b6c99"/><rect x="782" y="62" width="14" height="14" fill="#2d6d96"/><rect x="12" y="76" width="14" height="14" fill="#7e8d46"/><rect x="26" y="76" width="14" height="14" fill="#7f8e45"/><rect x="40" y="76" width="14" height="14" fill="#809043"/><rect x="54" y="76" width="14" height="14" fill="#819141"/><rect x="68" y="76" width="14" height="14" fill="#819240"/><rect x="82" y="76" width="14" height="14" fill="#82943e"/><rect x="96" y="76" width="14" height="14" fill="#83953d"/><rect x="110" y="76" width="14" height="14" fill="#84963b"/><rect x="124" y="76" width="14" height="14" fill="#859839"/><rect x="138" y="76" width="14" height="14" fill="#869938"/><rect x="152" y="76" width="14" height="14" fill="#879b37"/><rect x="166" y="76" width="14" height="14" fill="#879c35"/><rect x="180" y="76" width="14" height="14" fill="#889e34"/><rect x="194" y="76" width="14" height="14" fill="#879f34"/><rect x="208" y="76" width="14" height="14" fill="#87a133"/><rect x="222" y="76" width="14" height="14" fill="#86a233"/><rect x="236" y="76" width="14" height="14" fill="#85a432"/><rect x="250" y="76" width="14" height="14" fill="#83a532"/><rect x="264" y="76" width="14" height="14" fill="#80a633"/><rect x="278" y="76" width="14" height="14" fill="#7da833"/><rect x="292" y="76" width="14" height="14" fill="#79a934"/><rect x="306" y="76" width="14" height="14" fill="#74aa35"/><rect x="320" y="76" width="14" height="14" fill="#6eab37"/><rect x="334" y="76" width="14" height="14" fill="#68ac39"/><rect x="348" y="76" width="14" height="14" fill="#62ad3c"/><rect x="362" y="76" width="14" height="14" fill="#5bae3f"/><rect x="376" y="76" width="14" height="14" fill="#53ae44"/><rect x="390" y="76" width="14" height="14" fill="#4caf4a"/><rect x="404" y="76" width="14" height="14" fill="#45af53"/><rect x="418" y="76" width="14" height="14" fill="#3daf5f"/><rect x="432" y="76" width="14" height="14" fill="#36af6f"/><rect x="446" y="76" width="14" height="14" fill="#30b07f"/><rect x="460" y="76" width="14" height="14" fill="#2cb18c"/><rect x="474" y="76" width="14" height="14" fill="#28b39e"/><rect x="488" y="76" width="14" height="14" fill="#24b5af"/><rect x="502" y="76" width="14" height="14" fill="#25b4ae"/><rect x="516" y="76" width="14" height="14" fill="#26b0a9"/><rect x="530" y="76" width="14" height="14" fill="#22afbb"/><rect x="544" y="76" width="14" height="14" fill="#20afc4"/><rect x="558" y="76" width="14" height="14" fill="#23abb8"/><rect x="572" y="76" width="14" height="14" fill="#279ea9"/><rect x="586" y="76" width="14" height="14" fill="#2694b0"/><rect x="600" y="76" width="14" height="14" fill="#268eb0"/><rect x="614" y="76" width="14" height="14" fill="#2983a9"/><rect x="628" y="76" width="14" height="14" fill="#2971a9"/><rect x="642" y="76" width="14" height="14" fill="#265db4"/><rect x="656" y="76" width="14" height="14" fill="#2148c7"/><rect x="670" y="76" width="14" height="14" fill="#2147c9"/><rect x="684" y="76" width="14" height="14" fill="#225abb"/><rect x="698" y="76" width="14" height="14" fill="#2465af"/><rect x="712" y="76" width="14" height="14" fill="#256ca6"/><rect x="726" y="76" width="14" height="14" fill="#266ea1"/><rect x="740" y="76" width="14" height="14" fill="#266c9e"/><rect x="754" y="76" width="14" height="14" fill="#27699d"/><rect x="768" y="76" width="14" height="14" fill="#28699b"/><rect x="782" y="76" width="14" height="14" fill="#2a6a99"/><rect x="12" y="90" width="14" height="14" fill="#7d8d47"/><rect x="26" y="90" width="14" height="14" fill="#7e8e45"/><rect x="40" y="90" width="14" height="14" fill="#7f8f44"/><rect x="54" y="90" width="14" height="14" fill="#809042"/><rect x="68" y="90" width="14" height="14" fill="#819240"/><rect x="82" y="90" width="14" height="14" fill="#83933e"/><rect x="96" y="90" width="14" height="14" fill="#84953c"/><rect x="110" y="90" width="14" height="14" fill="#85963b"/><rect x="124" y="90" width="14" height="14" fill="#869839"/><rect x="138" y="90" width="14" height="14" fill="#879a37"/><rect x="152" y="90" width="14" height="14" fill="#889b36"/><rect x="166" y="90" width="14" height="14" fill="#899d34"/><rect x="180" y="90" width="14" height="14" fill="#899e33"/><rect x="194" y="90" width="14" height="14" fill="#8aa032"/><rect x="208" y="90" width="14" height="14" fill="#89a231"/><rect x="222" y="90" width="14" height="14" fill="#89a331"/><rect x="236" y="90" width="14" height="14" fill="#87a530"/><rect x="250" y="90" width="14" height="14" fill="#85a630"/><rect x="264" y="90" width="14" height="14" fill="#83a830"/><rect x="278" y="90" width="14" height="14" fill="#7fa930"/><rect x="292" y="90" width="14" height="14" fill="#7baa31"/><rect x="306" y="90" width="14" height="14" fill="#76ac32"/><rect x="320" y="90" width="14" height="14" fill="#70ad33"/><rect x="334" y="90" width="14" height="14" fill="#6aae35"/><rect x="348" y="90" width="14" height="14" fill="#63af37"/><rect x="362" y="90" width="14" height="14" fill="#5bb03a"/><rect x="376" y="90" width="14" height="14" fill="#53b03f"/><rect x="390" y="90" width="14" height="14" fill="#4cb044"/><rect x="404" y="90" width="14" height="14" fill="#44b04c"/><rect x="418" y="90" width="14" height="14" fill="#3cb058"/><rect x="432" y="90" width="14" height="14" fill="#33b06f"/><rect x="446" y="90" width="14" height="14" fill="#29b08c"/><rect x="460" y="90" width="14" height="14" fill="#27b095"/><rect x="474" y="90" width="14" height="14" fill="#26b4a3"/><rect x="488" y="90" width="14" height="14" fill="#21b7ba"/><rect x="502" y="90" width="14" height="14" fill="#22b6b7"/><rect x="516" y="90" width="14" height="14" fill="#27b2a0"/><rect x="530" y="90" width="14" height="14" fill="#26ae9e"/><rect x="544" y="90" width="14" height="14" fill="#24ada6"/><rect x="558" y="90" width="14" height="14" fill="#27aa99"/><rect x="572" y="90" width="14" height="14" fill="#2ca38b"/><rect x="586" y="90" width="14" height="14" fill="#2d9f87"/><rect x="600" y="90" width="14" height="14" fill="#2e9a88"/><rect x="614" y="90" width="14" height="14" fill="#2e9089"/><rect x="628" y="90" width="14" height="14" fill="#2d838c"/><rect x="642" y="90" width="14" height="14" fill="#2a7299"/><rect x="656" y="90" width="14" height="14" fill="#255faf"/><rect x="670" y="90" width="14" height="14" fill="#225db8"/><rect x="684" y="90" width="14" height="14" fill="#2161bb"/><rect x="698" y="90" width="14" height="14" fill="#236aad"/><rect x="712" y="90" width="14" height="14" fill="#2270a8"/><rect x="726" y="90" width="14" height="14" fill="#236fa3"/><rect x="740" y="90" width="14" height="14" fill="#2468a0"/><rect x="754" y="90" width="14" height="14" fill="#2462a1"/><rect x="768" y="90" width="14" height="14" fill="#2563a0"/><rect x="782" y="90" width="14" height="14" fill="#28679b"/><rect x="12" y="104" width="14" height="14" fill="#7c8c48"/><rect x="26" y="104" width="14" height="14" fill="#7d8d46"/><rect x="40" y="104" width="14" height="14" fill="#7f8e44"/><rect x="54" y="104" width="14" height="14" fill="#809043"/><rect x="68" y="104" width="14" height="14" fill="#819140"/><rect x="82" y="104" width="14" height="14" fill="#82933e"/><rect x="96" y="104" width="14" height="14" fill="#84953c"/><rect x="110" y="104" width="14" height="14" fill="#85963a"/><rect x="124" y="104" width="14" height="14" fill="#879838"/><rect x="138" y="104" width="14" height="14" fill="#889a36"/><rect x="152" y="104" width="14" height="14" fill="#899c35"/><rect x="166" y="104" width="14" height="14" fill="#8a9d33"/><rect x="180" y="104" width="14" height="14" fill="#8b9f32"/><rect x="194" y="104" width="14" height="14" fill="#8ca131"/><rect x="208" y="104" width="14" height="14" fill="#8ca330"/><rect x="222" y="104" width="14" height="14" fill="#8ba42f"/><rect x="236" y="104" width="14" height="14" fill="#8aa62e"/><rect x="250" y="104" width="14" height="14" fill="#89a82e"/><rect x="264" y="104" width="14" height="14" fill="#86a92e"/><rect x="278" y="104" width="14" height="14" fill="#82ab2e"/><rect x="292" y="104" width="14" height="14" fill="#7eac2e"/><rect x="306" y="104" width="14" height="14" fill="#79ae2f"/><rect x="320" y="104" width="14" height="14" fill="#73af30"/><rect x="334" y="104" width="14" height="14" fill="#6bb031"/><rect x="348" y="104" width="14" height="14" fill="#64b132"/><rect x="362" y="104" width="14" height="14" fill="#5cb234"/><rect x="376" y="104" width="14" height="14" fill="#54b338"/><rect x="390" y="104" width="14" height="14" fill="#4cb23d"/><rect x="404" y="104" width="14" height="14" fill="#44b143"/><rect x="418" y="104" width="14" height="14" fill="#3db048"/><rect x="432" y="104" width="14" height="14" fill="#36b05c"/><rect x="446" y="104" width="14" height="14" fill="#26b094"/><rect x="460" y="104" width="14" height="14" fill="#23b09c"/><rect x="474" y="104" width="14" height="14" fill="#28b297"/><rect x="488" y="104" width="14" height="14" fill="#24b6ae"/><rect x="502" y="104" width="14" height="14" fill="#25b5aa"/><rect x="516" y="104" width="14" height="14" fill="#2ab184"/><rect x="530" y="104" width="14" height="14" fill="#2aaf66"/><rect x="544" y="104" width="14" height="14" fill="#28ae5d"/><rect x="558" y="104" width="14" height="14" fill="#2bab64"/><rect x="572" y="104" width="14" height="14" fill="#2fa771"/><rect x="586" y="104" width="14" height="14" fill="#30a677"/><rect x="600" y="104" width="14" height="14" fill="#30a577"/><rect x="614" y="104" width="14" height="14" fill="#309c75"/><rect x="628" y="104" width="14" height="14" fill="#2f956f"/><rect x="642" y="104" width="14" height="14" fill="#2e9070"/><rect x="656" y="104" width="14" height="14" fill="#2b8184"/><rect x="670" y="104" width="14" height="14" fill="#2670a0"/><rect x="684" y="104" width="14" height="14" fill="#246ea6"/><rect x="698" y="104" width="14" height="14" fill="#25779b"/><rect x="712" y="104" width="14" height="14" fill="#2172a9"/><rect x="726" y="104" width="14" height="14" fill="#24719f"/><rect x="740" y="104" width="14" height="14" fill="#2360a2"/><rect x="754" y="104" width="14" height="14" fill="#2157a9"/><rect x="768" y="104" width="14" height="14" fill="#235ca4"/><rect x="782" y="104" width="14" height="14" fill="#27639d"/><rect x="12" y="118" width="14" height="14" fill="#7b8b49"/><rect x="26" y="118" width="14" height="14" fill="#7d8c48"/><rect x="40" y="118" width="14" height="14" fill="#7e8e45"/><rect x="54" y="118" width="14" height="14" fill="#7f8f43"/><rect x="68" y="118" width="14" height="14" fill="#819141"/><rect x="82" y="118" width="14" height="14" fill="#82933f"/><rect x="96" y="118" width="14" height="14" fill="#84943c"/><rect x="110" y="118" width="14" height="14" fill="#85963a"/><rect x="124" y="118" width="14" height="14" fill="#879838"/><rect x="138" y="118" width="14" height="14" fill="#899a36"/><rect x="152" y="118" width="14" height="14" fill="#8a9c34"/><rect x="166" y="118" width="14" height="14" fill="#8c9e32"/><rect x="180" y="118" width="14" height="14" fill="#8da030"/><rect x="194" y="118" width="14" height="14" fill="#8ea22f"/><rect x="208" y="118" width="14" height="14" fill="#8ea42e"/><rect x="222" y="118" width="14" height="14" fill="#8ea52d"/><rect x="236" y="118" width="14" height="14" fill="#8da72c"/><rect x="250" y="118" width="14" height="14" fill="#8ca92c"/><rect x="264" y="118" width="14" height="14" fill="#89ab2b"/><rect x="278" y="118" width="14" height="14" fill="#86ac2b"/><rect x="292" y="118" width="14" height="14" fill="#81ae2b"/><rect x="306" y="118" width="14" height="14" fill="#7cb02b"/><rect x="320" y="118" width="14" height="14" fill="#75b12c"/><rect x="334" y="118" width="14" height="14" fill="#6db22d"/><rect x="348" y="118" width="14" height="14" fill="#64b42d"/><rect x="362" y="118" width="14" height="14" fill="#5cb62e"/><rect x="376" y="118" width="14" height="14" fill="#55b62f"/><rect x="390" y="118" width="14" height="14" fill="#4eb533"/><rect x="404" y="118" width="14" height="14" fill="#46b239"/><rect x="418" y="118" width="14" height="14" fill="#40b139"/><rect x="432" y="118" width="14" height="14" fill="#3eb037"/><rect x="446" y="118" width="14" height="14" fill="#35b15d"/><rect x="460" y="118" width="14" height="14" fill="#2db17c"/><rect x="474" y="118" width="14" height="14" fill="#30b177"/><rect x="488" y="118" width="14" height="14" fill="#30b27e"/><rect x="502" y="118" width="14" height="14" fill="#30b277"/><rect x="516" y="118" width="14" height="14" fill="#2fb15b"/><rect x="530" y="118" width="14" height="14" fill="#29b045"/><rect x="544" y="118" width="14" height="14" fill="#25b041"/><rect x="558" y="118" width="14" height="14" fill="#2aae47"/><rect x="572" y="118" width="14" height="14" fill="#31a962"/><rect x="586" y="118" width="14" height="14" fill="#30a774"/><rect x="600" y="118" width="14" height="14" fill="#30a675"/><rect x="614" y="118" width="14" height="14" fill="#32a169"/><rect x="628" y="118" width="14" height="14" fill="#309e5c"/><rect x="642" y="118" width="14" height="14" fill="#309e5e"/><rect x="656" y="118" width="14" height="14" fill="#2f9863"/><rect x="670" y="118" width="14" height="14" fill="#2b887a"/><rect x="684" y="118" width="14" height="14" fill="#2a8979"/><rect x="698" y="118" width="14" height="14" fill="#2b8d78"/><rect x="712" y="118" width="14" height="14" fill="#28808b"/><rect x="726" y="118" width="14" height="14" fill="#287787"/><rect x="740" y="118" width="14" height="14" fill="#23609e"/><rect x="754" y="118" width="14" height="14" fill="#2154ab"/><rect x="768" y="118" width="14" height="14" fill="#235ba5"/><rect x="782" y="118" width="14" height="14" fill="#26639d"/><rect x="12" y="132" width="14" height="14" fill="#7a8a4b"/><rect x="26" y="132" width="14" height="14" fill="#7b8b49"/><rect x="40" y="132" width="14" height="14" fill="#7d8d47"/><rect x="54" y="132" width="14" height="14" fill="#7e8f44"/><rect x="68" y="132" width="14" height="14" fill="#809042"/><rect x="82" y="132" width="14" height="14" fill="#81923f"/><rect x="96" y="132" width="14" height="14" fill="#83943d"/><rect x="110" y="132" width="14" height="14" fill="#85963a"/><rect x="124" y="132" width="14" height="14" fill="#879837"/><rect x="138" y="132" width="14" height="14" fill="#899a35"/><rect x="152" y="132" width="14" height="14" fill="#8b9c33"/><rect x="166" y="132" width="14" height="14" fill="#8d9e31"/><rect x="180" y="132" width="14" height="14" fill="#8ea02f"/><rect x="194" y="132" width="14" height="14" fill="#90a32d"/><rect x="208" y="132" width="14" height="14" fill="#91a52c"/><rect x="222" y="132" width="14" height="14" fill="#91a72b"/><rect x="236" y="132" width="14" height="14" fill="#91a92a"/><rect x="250" y="132" width="14" height="14" fill="#8fab29"/><rect x="264" y="132" width="14" height="14" fill="#8dad29"/><rect x="278" y="132" width="14" height="14" fill="#89ae28"/><rect x="292" y="132" width="14" height="14" fill="#84b028"/><rect x="306" y="132" width="14" height="14" fill="#7eb228"/><rect x="320" y="132" width="14" height="14" fill="#78b428"/><rect x="334" y="132" width="14" height="14" fill="#70b529"/><rect x="348" y="132" width="14" height="14" fill="#65b729"/><rect x="362" y="132" width="14" height="14" fill="#5ab927"/><rect x="376" y="132" width="14" height="14" fill="#54bb26"/><rect x="390" y="132" width="14" height="14" fill="#50ba29"/><rect x="404" y="132" width="14" height="14" fill="#49b532"/><rect x="418" y="132" width="14" height="14" fill="#42b234"/><rect x="432" y="132" width="14" height="14" fill="#41b230"/><rect x="446" y="132" width="14" height="14" fill="#42b52d"/><rect x="460" y="132" width="14" height="14" fill="#3db342"/><rect x="474" y="132" width="14" height="14" fill="#3bb14e"/><rect x="488" y="132" width="14" height="14" fill="#3cb04a"/><rect x="502" y="132" width="14" height="14" fill="#3bb047"/><rect x="516" y="132" width="14" height="14" fill="#37b140"/><rect x="530" y="132" width="14" height="14" fill="#32b234"/><rect x="544" y="132" width="14" height="14" fill="#2fb231"/><rect x="558" y="132" width="14" height="14" fill="#32b137"/><rect x="572" y="132" width="14" height="14" fill="#36ac4e"/><rect x="586" y="132" width="14" height="14" fill="#35a765"/><rect x="600" y="132" width="14" height="14" fill="#35a566"/><rect x="614" y="132" width="14" height="14" fill="#34a356"/><rect x="628" y="132" width="14" height="14" fill="#31a444"/><rect x="642" y="132" width="14" height="14" fill="#30a441"/><rect x="656" y="132" width="14" height="14" fill="#30a048"/><rect x="670" y="132" width="14" height="14" fill="#2e9266"/><rect x="684" y="132" width="14" height="14" fill="#2c9072"/><rect x="698" y="132" width="14" height="14" fill="#2d9672"/><rect x="712" y="132" width="14" height="14" fill="#2b8a7c"/><rect x="726" y="132" width="14" height="14" fill="#297984"/><rect x="740" y="132" width="14" height="14" fill="#276d90"/><rect x="754" y="132" width="14" height="14" fill="#24609f"/><rect x="768" y="132" width="14" height="14" fill="#25629e"/><rect x="782" y="132" width="14" height="14" fill="#286799"/><rect x="12" y="146" width="14" height="14" fill="#79894d"/><rect x="26" y="146" width="14" height="14" fill="#7a8a4b"/><rect x="40" y="146" width="14" height="14" fill="#7b8c48"/><rect x="54" y="146" width="14" height="14" fill="#7d8e46"/><rect x="68" y="146" width="14" height="14" fill="#7f9043"/><rect x="82" y="146" width="14" height="14" fill="#809240"/><rect x="96" y="146" width="14" height="14" fill="#82943d"/><rect x="110" y="146" width="14" height="14" fill="#84963a"/><rect x="124" y="146" width="14" height="14" fill="#879837"/><rect x="138" y="146" width="14" height="14" fill="#899b34"/><rect x="152" y="146" width="14" height="14" fill="#8b9d32"/><rect x="166" y="146" width="14" height="14" fill="#8d9f30"/><rect x="180" y="146" width="14" height="14" fill="#90a12e"/><rect x="194" y="146" width="14" height="14" fill="#91a42c"/><rect x="208" y="146" width="14" height="14" fill="#93a62a"/><rect x="222" y="146" width="14" height="14" fill="#94a829"/><rect x="236" y="146" width="14" height="14" fill="#94aa28"/><rect x="250" y="146" width="14" height="14" fill="#93ac27"/><rect x="264" y="146" width="14" height="14" fill="#91af27"/><rect x="278" y="146" width="14" height="14" fill="#8db126"/><rect x="292" y="146" width="14" height="14" fill="#87b326"/><rect x="306" y="146" width="14" height="14" fill="#80b525"/><rect x="320" y="146" width="14" height="14" fill="#79b725"/><rect x="334" y="146" width="14" height="14" fill="#72b825"/><rect x="348" y="146" width="14" height="14" fill="#68b925"/><rect x="362" y="146" width="14" height="14" fill="#59bc23"/><rect x="376" y="146" width="14" height="14" fill="#51be21"/><rect x="390" y="146" width="14" height="14" fill="#50be22"/><rect x="404" y="146" width="14" height="14" fill="#4db82b"/><rect x="418" y="146" width="14" height="14" fill="#43b333"/><rect x="432" y="146" width="14" height="14" fill="#3db332"/><rect x="446" y="146" width="14" height="14" fill="#3cb332"/><rect x="460" y="146" width="14" height="14" fill="#3db237"/><rect x="474" y="146" width="14" height="14" fill="#40b136"/><rect x="488" y="146" width="14" height="14" fill="#40b029"/><rect x="502" y="146" width="14" height="14" fill="#40b02a"/><rect x="516" y="146" width="14" height="14" fill="#3eb130"/><rect x="530" y="146" width="14" height="14" fill="#3cb525"/><rect x="544" y="146" width="14" height="14" fill="#3eb61c"/><rect x="558" y="146" width="14" height="14" fill="#3cb428"/><rect x="572" y="146" width="14" height="14" fill="#3fae3d"/><rect x="586" y="146" width="14" height="14" fill="#43aa4a"/><rect x="600" y="146" width="14" height="14" fill="#42a84c"/><rect x="614" y="146" width="14" height="14" fill="#3ba642"/><rect x="628" y="146" width="14" height="14" fill="#33a92b"/><rect x="642" y="146" width="14" height="14" fill="#30ad19"/><rect x="656" y="146" width="14" height="14" fill="#31a72b"/><rect x="670" y="146" width="14" height="14" fill="#309857"/><rect x="684" y="146" width="14" height="14" fill="#2e926e"/><rect x="698" y="146" width="14" height="14" fill="#2e9174"/><rect x="712" y="146" width="14" height="14" fill="#2c897b"/><rect x="726" y="146" width="14" height="14" fill="#2b7d83"/><rect x="740" y="146" width="14" height="14" fill="#29748b"/><rect x="754" y="146" width="14" height="14" fill="#286d93"/><rect x="768" y="146" width="14" height="14" fill="#296b94"/><rect x="782" y="146" width="14" height="14" fill="#2b6d92"/><rect x="12" y="160" width="14" height="14" fill="#77874f"/><rect x="26" y="160" width="14" height="14" fill="#78894d"/><rect x="40" y="160" width="14" height="14" fill="#7a8b4a"/><rect x="54" y="160" width="14" height="14" fill="#7b8d47"/><rect x="68" y="160" width="14" height="14" fill="#7d8f44"/><rect x="82" y="160" width="14" height="14" fill="#7f9141"/><rect x="96" y="160" width="14" height="14" fill="#81943e"/><rect x="110" y="160" width="14" height="14" fill="#83963a"/><rect x="124" y="160" width="14" height="14" fill="#869937"/><rect x="138" y="160" width="14" height="14" fill="#889b34"/><rect x="152" y="160" width="14" height="14" fill="#8b9e31"/><rect x="166" y="160" width="14" height="14" fill="#8ea02f"/><rect x="180" y="160" width="14" height="14" fill="#90a22c"/><rect x="194" y="160" width="14" height="14" fill="#93a52a"/><rect x="208" y="160" width="14" height="14" fill="#95a729"/><rect x="222" y="160" width="14" height="14" fill="#97aa27"/><rect x="236" y="160" width="14" height="14" fill="#98ac26"/><rect x="250" y="160" width="14" height="14" fill="#97af25"/><rect x="264" y="160" width="14" height="14" fill="#95b125"/><rect x="278" y="160" width="14" height="14" fill="#91b324"/><rect x="292" y="160" width="14" height="14" fill="#8ab523"/><rect x="306" y="160" width="14" height="14" fill="#81b823"/><rect x="320" y="160" width="14" height="14" fill="#79ba22"/><rect x="334" y="160" width="14" height="14" fill="#74bb22"/><rect x="348" y="160" width="14" height="14" fill="#6ebb23"/><rect x="362" y="160" width="14" height="14" fill="#5ebc23"/><rect x="376" y="160" width="14" height="14" fill="#52be21"/><rect x="390" y="160" width="14" height="14" fill="#51be21"/><rect x="404" y="160" width="14" height="14" fill="#52b829"/><rect x="418" y="160" width="14" height="14" fill="#48b333"/><rect x="432" y="160" width="14" height="14" fill="#3ab139"/><rect x="446" y="160" width="14" height="14" fill="#35b03c"/><rect x="460" y="160" width="14" height="14" fill="#3eb138"/><rect x="474" y="160" width="14" height="14" fill="#44b02d"/><rect x="488" y="160" width="14" height="14" fill="#41b022"/><rect x="502" y="160" width="14" height="14" fill="#42b023"/><rect x="516" y="160" width="14" height="14" fill="#45b12b"/><rect x="530" y="160" width="14" height="14" fill="#42b328"/><rect x="544" y="160" width="14" height="14" fill="#41b424"/><rect x="558" y="160" width="14" height="14" fill="#44b22b"/><rect x="572" y="160" width="14" height="14" fill="#4fb031"/><rect x="586" y="160" width="14" height="14" fill="#5ab02f"/><rect x="600" y="160" width="14" height="14" fill="#59af30"/><rect x="614" y="160" width="14" height="14" fill="#4baa35"/><rect x="628" y="160" width="14" height="14" fill="#3ba92e"/><rect x="642" y="160" width="14" height="14" fill="#35a926"/><rect x="656" y="160" width="14" height="14" fill="#35a434"/><rect x="670" y="160" width="14" height="14" fill="#359a51"/><rect x="684" y="160" width="14" height="14" fill="#339267"/><rect x="698" y="160" width="14" height="14" fill="#318e72"/><rect x="712" y="160" width="14" height="14" fill="#308879"/><rect x="726" y="160" width="14" height="14" fill="#2e817f"/><rect x="740" y="160" width="14" height="14" fill="#2d7a85"/><rect x="754" y="160" width="14" height="14" fill="#2d758a"/><rect x="768" y="160" width="14" height="14" fill="#2e738b"/><rect x="782" y="160" width="14" height="14" fill="#30748a"/><rect x="12" y="174" width="14" height="14" fill="#758652"/><rect x="26" y="174" width="14" height="14" fill="#768850"/><rect x="40" y="174" width="14" height="14" fill="#778a4d"/><rect x="54" y="174" width="14" height="14" fill="#798c49"/><rect x="68" y="174" width="14" height="14" fill="#7b8e46"/><rect x="82" y="174" width="14" height="14" fill="#7d9142"/><rect x="96" y="174" width="14" height="14" fill="#80933e"/><rect x="110" y="174" width="14" height="14" fill="#82963b"/><rect x="124" y="174" width="14" height="14" fill="#859937"/><rect x="138" y="174" width="14" height="14" fill="#879c33"/><rect x="152" y="174" width="14" height="14" fill="#8a9e30"/><rect x="166" y="174" width="14" height="14" fill="#8da12d"/><rect x="180" y="174" width="14" height="14" fill="#91a42b"/><rect x="194" y="174" width="14" height="14" fill="#94a629"/><rect x="208" y="174" width="14" height="14" fill="#97a927"/><rect x="222" y="174" width="14" height="14" fill="#9aac26"/><rect x="236" y="174" width="14" height="14" fill="#9bae25"/><rect x="250" y="174" width="14" height="14" fill="#9cb124"/><rect x="264" y="174" width="14" height="14" fill="#9ab423"/><rect x="278" y="174" width="14" height="14" fill="#96b622"/><rect x="292" y="174" width="14" height="14" fill="#8eb822"/><rect x="306" y="174" width="14" height="14" fill="#83ba21"/><rect x="320" y="174" width="14" height="14" fill="#76bd20"/><rect x="334" y="174" width="14" height="14" fill="#71be20"/><rect x="348" y="174" width="14" height="14" fill="#72bd21"/><rect x="362" y="174" width="14" height="14" fill="#6bba23"/><rect x="376" y="174" width="14" height="14" fill="#5fba23"/><rect x="390" y="174" width="14" height="14" fill="#5db925"/><rect x="404" y="174" width="14" height="14" fill="#5fb52a"/><rect x="418" y="174" width="14" height="14" fill="#58b231"/><rect x="432" y="174" width="14" height="14" fill="#4ab036"/><rect x="446" y="174" width="14" height="14" fill="#45b038"/><rect x="460" y="174" width="14" height="14" fill="#4cb034"/><rect x="474" y="174" width="14" height="14" fill="#51b02c"/><rect x="488" y="174" width="14" height="14" fill="#4eb026"/><rect x="502" y="174" width="14" height="14" fill="#4fb026"/><rect x="516" y="174" width="14" height="14" fill="#52b02a"/><rect x="530" y="174" width="14" height="14" fill="#4eb12d"/><rect x="544" y="174" width="14" height="14" fill="#4db12d"/><rect x="558" y="174" width="14" height="14" fill="#53b12d"/><rect x="572" y="174" width="14" height="14" fill="#61b226"/><rect x="586" y="174" width="14" height="14" fill="#6bb61c"/><rect x="600" y="174" width="14" height="14" fill="#6bb51d"/><rect x="614" y="174" width="14" height="14" fill="#5fb028"/><rect x="628" y="174" width="14" height="14" fill="#4da932"/><rect x="642" y="174" width="14" height="14" fill="#44a536"/><rect x="656" y="174" width="14" height="14" fill="#41a13f"/><rect x="670" y="174" width="14" height="14" fill="#409b4f"/><rect x="684" y="174" width="14" height="14" fill="#3d945f"/><rect x="698" y="174" width="14" height="14" fill="#3a8f6a"/><rect x="712" y="174" width="14" height="14" fill="#378a72"/><rect x="726" y="174" width="14" height="14" fill="#358478"/><rect x="740" y="174" width="14" height="14" fill="#34807d"/><rect x="754" y="174" width="14" height="14" fill="#337c81"/><rect x="768" y="174" width="14" height="14" fill="#347a82"/><rect x="782" y="174" width="14" height="14" fill="#357a82"/><rect x="12" y="188" width="14" height="14" fill="#728455"/><rect x="26" y="188" width="14" height="14" fill="#738653"/><rect x="40" y="188" width="14" height="14" fill="#758850"/><rect x="54" y="188" width="14" height="14" fill="#778b4c"/><rect x="68" y="188" width="14" height="14" fill="#798d48"/><rect x="82" y="188" width="14" height="14" fill="#7b9044"/><rect x="96" y="188" width="14" height="14" fill="#7d933f"/><rect x="110" y="188" width="14" height="14" fill="#80963b"/><rect x="124" y="188" width="14" height="14" fill="#839937"/><rect x="138" y="188" width="14" height="14" fill="#869c33"/><rect x="152" y="188" width="14" height="14" fill="#899f2f"/><rect x="166" y="188" width="14" height="14" fill="#8ca22c"/><rect x="180" y="188" width="14" height="14" fill="#90a52a"/><rect x="194" y="188" width="14" height="14" fill="#94a828"/><rect x="208" y="188" width="14" height="14" fill="#98ab26"/><rect x="222" y="188" width="14" height="14" fill="#9cae24"/><rect x="236" y="188" width="14" height="14" fill="#9eb123"/><rect x="250" y="188" width="14" height="14" fill="#a0b422"/><rect x="264" y="188" width="14" height="14" fill="#a0b722"/><rect x="278" y="188" width="14" height="14" fill="#9bb921"/><rect x="292" y="188" width="14" height="14" fill="#93bb21"/><rect x="306" y="188" width="14" height="14" fill="#8bbc20"/><rect x="320" y="188" width="14" height="14" fill="#79bd20"/><rect x="334" y="188" width="14" height="14" fill="#72bf20"/><rect x="348" y="188" width="14" height="14" fill="#75bc21"/><rect x="362" y="188" width="14" height="14" fill="#7ab723"/><rect x="376" y="188" width="14" height="14" fill="#78b425"/><rect x="390" y="188" width="14" height="14" fill="#78b327"/><rect x="404" y="188" width="14" height="14" fill="#7bb129"/><rect x="418" y="188" width="14" height="14" fill="#7ab02b"/><rect x="432" y="188" width="14" height="14" fill="#70af2e"/><rect x="446" y="188" width="14" height="14" fill="#66af30"/><rect x="460" y="188" width="14" height="14" fill="#65b02e"/><rect x="474" y="188" width="14" height="14" fill="#6eb228"/><rect x="488" y="188" width="14" height="14" fill="#77b524"/><rect x="502" y="188" width="14" height="14" fill="#75b424"/><rect x="516" y="188" width="14" height="14" fill="#6ab228"/><rect x="530" y="188" width="14" height="14" fill="#60b02d"/><rect x="544" y="188" width="14" height="14" fill="#5caf2e"/><rect x="558" y="188" width="14" height="14" fill="#60b02b"/><rect x="572" y="188" width="14" height="14" fill="#69b322"/><rect x="586" y="188" width="14" height="14" fill="#6eb61a"/><rect x="600" y="188" width="14" height="14" fill="#6eb61a"/><rect x="614" y="188" width="14" height="14" fill="#69b124"/><rect x="628" y="188" width="14" height="14" fill="#60aa30"/><rect x="642" y="188" width="14" height="14" fill="#5aa638"/><rect x="656" y="188" width="14" height="14" fill="#59a23e"/><rect x="670" y="188" width="14" height="14" fill="#569e47"/><rect x="684" y="188" width="14" height="14" fill="#509952"/><rect x="698" y="188" width="14" height="14" fill="#49935e"/><rect x="712" y="188" width="14" height="14" fill="#438e67"/><rect x="726" y="188" width="14" height="14" fill="#3f896e"/><rect x="740" y="188" width="14" height="14" fill="#3d8574"/><rect x="754" y="188" width="14" height="14" fill="#3b8277"/><rect x="768" y="188" width="14" height="14" fill="#3b807a"/><rect x="782" y="188" width="14" height="14" fill="#3c7f7a"/><rect x="12" y="202" width="14" height="14" fill="#6f8259"/><rect x="26" y="202" width="14" height="14" fill="#708456"/><rect x="40" y="202" width="14" height="14" fill="#728753"/><rect x="54" y="202" width="14" height="14" fill="#74894f"/><rect x="68" y="202" width="14" height="14" fill="#768c4b"/><rect x="82" y="202" width="14" height="14" fill="#789046"/><rect x="96" y="202" width="14" height="14" fill="#7b9341"/><rect x="110" y="202" width="14" height="14" fill="#7d973c"/><rect x="124" y="202" width="14" height="14" fill="#809a37"/><rect x="138" y="202" width="14" height="14" fill="#839d32"/><rect x="152" y="202" width="14" height="14" fill="#86a12e"/><rect x="166" y="202" width="14" height="14" fill="#8aa42b"/><rect x="180" y="202" width="14" height="14" fill="#8ea728"/><rect x="194" y="202" width="14" height="14" fill="#93aa26"/><rect x="208" y="202" width="14" height="14" fill="#98ad24"/><rect x="222" y="202" width="14" height="14" fill="#9db023"/><rect x="236" y="202" width="14" height="14" fill="#a1b422"/><rect x="250" y="202" width="14" height="14" fill="#a4b721"/><rect x="264" y="202" width="14" height="14" fill="#a7ba20"/><rect x="278" y="202" width="14" height="14" fill="#a2bb20"/><rect x="292" y="202" width="14" height="14" fill="#94bd20"/><rect x="306" y="202" width="14" height="14" fill="#90be20"/><rect x="320" y="202" width="14" height="14" fill="#8abc20"/><rect x="334" y="202" width="14" height="14" fill="#80bb20"/><rect x="348" y="202" width="14" height="14" fill="#83b721"/><rect x="362" y="202" width="14" height="14" fill="#8cb223"/><rect x="376" y="202" width="14" height="14" fill="#92af24"/><rect x="390" y="202" width="14" height="14" fill="#97ae25"/><rect x="404" y="202" width="14" height="14" fill="#9dae25"/><rect x="418" y="202" width="14" height="14" fill="#a2ae24"/><rect x="432" y="202" width="14" height="14" fill="#9cae25"/><rect x="446" y="202" width="14" height="14" fill="#8aae29"/><rect x="460" y="202" width="14" height="14" fill="#7db029"/><rect x="474" y="202" width="14" height="14" fill="#80b424"/><rect x="488" y="202" width="14" height="14" fill="#86b720"/><rect x="502" y="202" width="14" height="14" fill="#84b621"/><rect x="516" y="202" width="14" height="14" fill="#7ab326"/><rect x="530" y="202" width="14" height="14" fill="#6faf2b"/><rect x="544" y="202" width="14" height="14" fill="#6aae2d"/><rect x="558" y="202" width="14" height="14" fill="#6cae2b"/><rect x="572" y="202" width="14" height="14" fill="#70b125"/><rect x="586" y="202" width="14" height="14" fill="#71b320"/><rect x="600" y="202" width="14" height="14" fill="#71b320"/><rect x="614" y="202" width="14" height="14" fill="#71af26"/><rect x="628" y="202" width="14" height="14" fill="#71ab2e"/><rect x="642" y="202" width="14" height="14" fill="#75a930"/><rect x="656" y="202" width="14" height="14" fill="#78a831"/><rect x="670" y="202" width="14" height="14" fill="#74a536"/><rect x="684" y="202" width="14" height="14" fill="#6aa041"/><rect x="698" y="202" width="14" height="14" fill="#5d9a4e"/><rect x="712" y="202" width="14" height="14" fill="#539459"/><rect x="726" y="202" width="14" height="14" fill="#4c8f62"/><rect x="740" y="202" width="14" height="14" fill="#488b69"/><rect x="754" y="202" width="14" height="14" fill="#45886d"/><rect x="768" y="202" width="14" height="14" fill="#448670"/><rect x="782" y="202" width="14" height="14" fill="#438472"/><rect x="12" y="216" width="14" height="14" fill="#6c805e"/><rect x="26" y="216" width="14" height="14" fill="#6d825b"/><rect x="40" y="216" width="14" height="14" fill="#6e8557"/><rect x="54" y="216" width="14" height="14" fill="#708853"/><rect x="68" y="216" width="14" height="14" fill="#728b4e"/><rect x="82" y="216" width="14" height="14" fill="#758f48"/><rect x="96" y="216" width="14" height="14" fill="#779342"/><rect x="110" y="216" width="14" height="14" fill="#7a973d"/><rect x="124" y="216" width="14" height="14" fill="#7d9b37"/><rect x="138" y="216" width="14" height="14" fill="#7f9f32"/><rect x="152" y="216" width="14" height="14" fill="#82a32d"/><rect x="166" y="216" width="14" height="14" fill="#85a72a"/><rect x="180" y="216" width="14" height="14" fill="#89aa27"/><rect x="194" y="216" width="14" height="14" fill="#8fac25"/><rect x="208" y="216" width="14" height="14" fill="#97af23"/><rect x="222" y="216" width="14" height="14" fill="#9db322"/><rect x="236" y="216" width="14" height="14" fill="#a0b721"/><rect x="250" y="216" width="14" height="14" fill="#a6b920"/><rect x="264" y="216" width="14" height="14" fill="#acbd20"/><rect x="278" y="216" width="14" height="14" fill="#acbe20"/><rect x="292" y="216" width="14" height="14" fill="#9abd20"/><rect x="306" y="216" width="14" height="14" fill="#92be20"/><rect x="320" y="216" width="14" height="14" fill="#95b920"/><rect x="334" y="216" width="14" height="14" fill="#98b221"/><rect x="348" y="216" width="14" height="14" fill="#9dae22"/><rect x="362" y="216" width="14" height="14" fill="#a3ac22"/><rect x="376" y="216" width="14" height="14" fill="#aaac23"/><rect x="390" y="216" width="14" height="14" fill="#afad22"/><rect x="404" y="216" width="14" height="14" fill="#b1ae22"/><rect x="418" y="216" width="14" height="14" fill="#b5af20"/><rect x="432" y="216" width="14" height="14" fill="#b2af21"/><rect x="446" y="216" width="14" height="14" fill="#a1ae24"/><rect x="460" y="216" width="14" height="14" fill="#8eae26"/><rect x="474" y="216" width="14" height="14" fill="#87b224"/><rect x="488" y="216" width="14" height="14" fill="#86b521"/><rect x="502" y="216" width="14" height="14" fill="#85b522"/><rect x="516" y="216" width="14" height="14" fill="#7fb226"/><rect x="530" y="216" width="14" height="14" fill="#79ae2a"/><rect x="544" y="216" width="14" height="14" fill="#76ac2c"/><rect x="558" y="216" width="14" height="14" fill="#79ad2a"/><rect x="572" y="216" width="14" height="14" fill="#80ae27"/><rect x="586" y="216" width="14" height="14" fill="#85af24"/><rect x="600" y="216" width="14" height="14" fill="#85af24"/><rect x="614" y="216" width="14" height="14" fill="#82ad27"/><rect x="628" y="216" width="14" height="14" fill="#83ac29"/><rect x="642" y="216" width="14" height="14" fill="#8bac27"/><rect x="656" y="216" width="14" height="14" fill="#90ad24"/><rect x="670" y="216" width="14" height="14" fill="#8dac27"/><rect x="684" y="216" width="14" height="14" fill="#81a731"/><rect x="698" y="216" width="14" height="14" fill="#71a13f"/><rect x="712" y="216" width="14" height="14" fill="#649a4c"/><rect x="726" y="216" width="14" height="14" fill="#5a9556"/><rect x="740" y="216" width="14" height="14" fill="#54905e"/><rect x="754" y="216" width="14" height="14" fill="#4f8d64"/><rect x="768" y="216" width="14" height="14" fill="#4d8b67"/><rect x="782" y="216" width="14" height="14" fill="#4b896a"/><rect x="12" y="230" width="14" height="14" fill="#687d63"/><rect x="26" y="230" width="14" height="14" fill="#697f61"/><rect x="40" y="230" width="14" height="14" fill="#6a825d"/><rect x="54" y="230" width="14" height="14" fill="#6c8658"/><rect x="68" y="230" width="14" height="14" fill="#6e8a52"/><rect x="82" y="230" width="14" height="14" fill="#718e4c"/><rect x="96" y="230" width="14" height="14" fill="#739345"/><rect x="110" y="230" width="14" height="14" fill="#76973e"/><rect x="124" y="230" width="14" height="14" fill="#789c37"/><rect x="138" y="230" width="14" height="14" fill="#7ba131"/><rect x="152" y="230" width="14" height="14" fill="#7da52c"/><rect x="166" y="230" width="14" height="14" fill="#7eaa28"/><rect x="180" y="230" width="14" height="14" fill="#80ae25"/><rect x="194" y="230" width="14" height="14" fill="#86b023"/><rect x="208" y="230" width="14" height="14" fill="#92b222"/><rect x="222" y="230" width="14" height="14" fill="#9bb621"/><rect x="236" y="230" width="14" height="14" fill="#9cbb20"/><rect x="250" y="230" width="14" height="14" fill="#a0bb20"/><rect x="264" y="230" width="14" height="14" fill="#acbc20"/><rect x="278" y="230" width="14" height="14" fill="#aebd20"/><rect x="292" y="230" width="14" height="14" fill="#a8b820"/><rect x="306" y="230" width="14" height="14" fill="#a2b620"/><rect x="320" y="230" width="14" height="14" fill="#a7af20"/><rect x="334" y="230" width="14" height="14" fill="#b1a821"/><rect x="348" y="230" width="14" height="14" fill="#b6a521"/><rect x="362" y="230" width="14" height="14" fill="#b5a621"/><rect x="376" y="230" width="14" height="14" fill="#bbab21"/><rect x="390" y="230" width="14" height="14" fill="#c1ae20"/><rect x="404" y="230" width="14" height="14" fill="#bcae20"/><rect x="418" y="230" width="14" height="14" fill="#b6af20"/><rect x="432" y="230" width="14" height="14" fill="#b4ae20"/><rect x="446" y="230" width="14" height="14" fill="#a9ad23"/><rect x="460" y="230" width="14" height="14" fill="#9cac24"/><rect x="474" y="230" width="14" height="14" fill="#95ae24"/><rect x="488" y="230" width="14" height="14" fill="#8eb024"/><rect x="502" y="230" width="14" height="14" fill="#8ab025"/><rect x="516" y="230" width="14" height="14" fill="#85ae27"/><rect x="530" y="230" width="14" height="14" fill="#82ab2a"/><rect x="544" y="230" width="14" height="14" fill="#82ab2a"/><rect x="558" y="230" width="14" height="14" fill="#87ac28"/><rect x="572" y="230" width="14" height="14" fill="#92ae24"/><rect x="586" y="230" width="14" height="14" fill="#9aaf21"/><rect x="600" y="230" width="14" height="14" fill="#9aaf21"/><rect x="614" y="230" width="14" height="14" fill="#92ae24"/><rect x="628" y="230" width="14" height="14" fill="#8fad26"/><rect x="642" y="230" width="14" height="14" fill="#94ae22"/><rect x="656" y="230" width="14" height="14" fill="#97af20"/><rect x="670" y="230" width="14" height="14" fill="#95af22"/><rect x="684" y="230" width="14" height="14" fill="#8cab29"/><rect x="698" y="230" width="14" height="14" fill="#7fa535"/><rect x="712" y="230" width="14" height="14" fill="#729f41"/><rect x="726" y="230" width="14" height="14" fill="#679a4c"/><rect x="740" y="230" width="14" height="14" fill="#609554"/><rect x="754" y="230" width="14" height="14" fill="#5a925a"/><rect x="768" y="230" width="14" height="14" fill="#568f5f"/><rect x="782" y="230" width="14" height="14" fill="#538d62"/><rect x="12" y="244" width="14" height="14" fill="#63796a"/><rect x="26" y="244" width="14" height="14" fill="#647c67"/><rect x="40" y="244" width="14" height="14" fill="#657f63"/><rect x="54" y="244" width="14" height="14" fill="#67835e"/><rect x="68" y="244" width="14" height="14" fill="#698857"/><rect x="82" y="244" width="14" height="14" fill="#6c8d50"/><rect x="96" y="244" width="14" height="14" fill="#6f9347"/><rect x="110" y="244" width="14" height="14" fill="#71983f"/><rect x="124" y="244" width="14" height="14" fill="#739e37"/><rect x="138" y="244" width="14" height="14" fill="#75a330"/><rect x="152" y="244" width="14" height="14" fill="#76a92b"/><rect x="166" y="244" width="14" height="14" fill="#75af26"/><rect x="180" y="244" width="14" height="14" fill="#73b423"/><rect x="194" y="244" width="14" height="14" fill="#76b621"/><rect x="208" y="244" width="14" height="14" fill="#89b421"/><rect x="222" y="244" width="14" height="14" fill="#9cb620"/><rect x="236" y="244" width="14" height="14" fill="#9cbc20"/><rect x="250" y="244" width="14" height="14" fill="#9dbc20"/><rect x="264" y="244" width="14" height="14" fill="#aab620"/><rect x="278" y="244" width="14" height="14" fill="#b3b420"/><rect x="292" y="244" width="14" height="14" fill="#b9b020"/><rect x="306" y="244" width="14" height="14" fill="#b7ad20"/><rect x="320" y="244" width="14" height="14" fill="#b9a620"/><rect x="334" y="244" width="14" height="14" fill="#c2a120"/><rect x="348" y="244" width="14" height="14" fill="#c4a020"/><rect x="362" y="244" width="14" height="14" fill="#bfa220"/><rect x="376" y="244" width="14" height="14" fill="#c1aa20"/><rect x="390" y="244" width="14" height="14" fill="#c6af20"/><rect x="404" y="244" width="14" height="14" fill="#c3ae20"/><rect x="418" y="244" width="14" height="14" fill="#b8ac21"/><rect x="432" y="244" width="14" height="14" fill="#b2ab21"/><rect x="446" y="244" width="14" height="14" fill="#abaa22"/><rect x="460" y="244" width="14" height="14" fill="#a8ac22"/><rect x="474" y="244" width="14" height="14" fill="#a8ad21"/><rect x="488" y="244" width="14" height="14" fill="#a2ac22"/><rect x="502" y="244" width="14" height="14" fill="#98ab25"/><rect x="516" y="244" width="14" height="14" fill="#90a927"/><rect x="530" y="244" width="14" height="14" fill="#8ca829"/><rect x="544" y="244" width="14" height="14" fill="#8ca829"/><rect x="558" y="244" width="14" height="14" fill="#90ab27"/><rect x="572" y="244" width="14" height="14" fill="#99ae23"/><rect x="586" y="244" width="14" height="14" fill="#9eaf20"/><rect x="600" y="244" width="14" height="14" fill="#9eaf20"/><rect x="614" y="244" width="14" height="14" fill="#99ae23"/><rect x="628" y="244" width="14" height="14" fill="#95ad25"/><rect x="642" y="244" width="14" height="14" fill="#96ae22"/><rect x="656" y="244" width="14" height="14" fill="#97af21"/><rect x="670" y="244" width="14" height="14" fill="#95ae22"/><rect x="684" y="244" width="14" height="14" fill="#90ac28"/><rect x="698" y="244" width="14" height="14" fill="#87a731"/><rect x="712" y="244" width="14" height="14" fill="#7ca23a"/><rect x="726" y="244" width="14" height="14" fill="#729d44"/><rect x="740" y="244" width="14" height="14" fill="#6a994c"/><rect x="754" y="244" width="14" height="14" fill="#649652"/><rect x="768" y="244" width="14" height="14" fill="#5f9357"/><rect x="782" y="244" width="14" height="14" fill="#5b905b"/><rect x="12" y="258" width="14" height="14" fill="#5e7571"/><rect x="26" y="258" width="14" height="14" fill="#5e786f"/><rect x="40" y="258" width="14" height="14" fill="#5f7b6c"/><rect x="54" y="258" width="14" height="14" fill="#618066"/><rect x="68" y="258" width="14" height="14" fill="#63865e"/><rect x="82" y="258" width="14" height="14" fill="#668c55"/><rect x="96" y="258" width="14" height="14" fill="#69934b"/><rect x="110" y="258" width="14" height="14" fill="#6c9a40"/><rect x="124" y="258" width="14" height="14" fill="#6da037"/><rect x="138" y="258" width="14" height="14" fill="#6ea62f"/><rect x="152" y="258" width="14" height="14" fill="#6fac29"/><rect x="166" y="258" width="14" height="14" fill="#6eb324"/><rect x="180" y="258" width="14" height="14" fill="#68ba21"/><rect x="194" y="258" width="14" height="14" fill="#65bd20"/><rect x="208" y="258" width="14" height="14" fill="#79b720"/><rect x="222" y="258" width="14" height="14" fill="#a1b120"/><rect x="236" y="258" width="14" height="14" fill="#b0b220"/><rect x="250" y="258" width="14" height="14" fill="#b2b220"/><rect x="264" y="258" width="14" height="14" fill="#b4ae20"/><rect x="278" y="258" width="14" height="14" fill="#bfad20"/><rect x="292" y="258" width="14" height="14" fill="#c5ae20"/><rect x="306" y="258" width="14" height="14" fill="#c2ac20"/><rect x="320" y="258" width="14" height="14" fill="#bfa320"/><rect x="334" y="258" width="14" height="14" fill="#c59f20"/><rect x="348" y="258" width="14" height="14" fill="#c69f20"/><rect x="362" y="258" width="14" height="14" fill="#c29f20"/><rect x="376" y="258" width="14" height="14" fill="#c1a420"/><rect x="390" y="258" width="14" height="14" fill="#c3a920"/><rect x="404" y="258" width="14" height="14" fill="#c1a820"/><rect x="418" y="258" width="14" height="14" fill="#b9a521"/><rect x="432" y="258" width="14" height="14" fill="#b2a422"/><rect x="446" y="258" width="14" height="14" fill="#ada722"/><rect x="460" y="258" width="14" height="14" fill="#aead20"/><rect x="474" y="258" width="14" height="14" fill="#afaf20"/><rect x="488" y="258" width="14" height="14" fill="#acad21"/><rect x="502" y="258" width="14" height="14" fill="#a3a823"/><rect x="516" y="258" width="14" height="14" fill="#9ba526"/><rect x="530" y="258" width="14" height="14" fill="#96a427"/><rect x="544" y="258" width="14" height="14" fill="#95a528"/><rect x="558" y="258" width="14" height="14" fill="#96a926"/><rect x="572" y="258" width="14" height="14" fill="#9aac23"/><rect x="586" y="258" width="14" height="14" fill="#9dae21"/><rect x="600" y="258" width="14" height="14" fill="#9dae21"/><rect x="614" y="258" width="14" height="14" fill="#9bad23"/><rect x="628" y="258" width="14" height="14" fill="#9cad23"/><rect x="642" y="258" width="14" height="14" fill="#9dae22"/><rect x="656" y="258" width="14" height="14" fill="#9bae23"/><rect x="670" y="258" width="14" height="14" fill="#98ad24"/><rect x="684" y="258" width="14" height="14" fill="#93ab28"/><rect x="698" y="258" width="14" height="14" fill="#8ca82e"/><rect x="712" y="258" width="14" height="14" fill="#84a436"/><rect x="726" y="258" width="14" height="14" fill="#7ba03e"/><rect x="740" y="258" width="14" height="14" fill="#739c45"/><rect x="754" y="258" width="14" height="14" fill="#6c994b"/><rect x="768" y="258" width="14" height="14" fill="#679651"/><rect x="782" y="258" width="14" height="14" fill="#629355"/><rect x="12" y="272" width="14" height="14" fill="#59707a"/><rect x="26" y="272" width="14" height="14" fill="#587379"/><rect x="40" y="272" width="14" height="14" fill="#587676"/><rect x="54" y="272" width="14" height="14" fill="#5a7c70"/><rect x="68" y="272" width="14" height="14" fill="#5d8267"/><rect x="82" y="272" width="14" height="14" fill="#608a5c"/><rect x="96" y="272" width="14" height="14" fill="#63934f"/><rect x="110" y="272" width="14" height="14" fill="#669c42"/><rect x="124" y="272" width="14" height="14" fill="#66a436"/><rect x="138" y="272" width="14" height="14" fill="#65ac2d"/><rect x="152" y="272" width="14" height="14" fill="#66b027"/><rect x="166" y="272" width="14" height="14" fill="#69b424"/><rect x="180" y="272" width="14" height="14" fill="#65bb21"/><rect x="194" y="272" width="14" height="14" fill="#62be20"/><rect x="208" y="272" width="14" height="14" fill="#75b720"/><rect x="222" y="272" width="14" height="14" fill="#a6ac20"/><rect x="236" y="272" width="14" height="14" fill="#bcad20"/><rect x="250" y="272" width="14" height="14" fill="#beab20"/><rect x="264" y="272" width="14" height="14" fill="#bfa320"/><rect x="278" y="272" width="14" height="14" fill="#c2a620"/><rect x="292" y="272" width="14" height="14" fill="#c5ac20"/><rect x="306" y="272" width="14" height="14" fill="#c4a720"/><rect x="320" y="272" width="14" height="14" fill="#c19d20"/><rect x="334" y="272" width="14" height="14" fill="#c39920"/><rect x="348" y="272" width="14" height="14" fill="#c39820"/><rect x="362" y="272" width="14" height="14" fill="#c29720"/><rect x="376" y="272" width="14" height="14" fill="#c19820"/><rect x="390" y="272" width="14" height="14" fill="#c39820"/><rect x="404" y="272" width="14" height="14" fill="#c19920"/><rect x="418" y="272" width="14" height="14" fill="#bc9a21"/><rect x="432" y="272" width="14" height="14" fill="#b59b22"/><rect x="446" y="272" width="14" height="14" fill="#b0a121"/><rect x="460" y="272" width="14" height="14" fill="#afaa20"/><rect x="474" y="272" width="14" height="14" fill="#afad20"/><rect x="488" y="272" width="14" height="14" fill="#adaa20"/><rect x="502" y="272" width="14" height="14" fill="#a9a322"/><rect x="516" y="272" width="14" height="14" fill="#a49f24"/><rect x="530" y="272" width="14" height="14" fill="#a19f25"/><rect x="544" y="272" width="14" height="14" fill="#9fa126"/><rect x="558" y="272" width="14" height="14" fill="#9da526"/><rect x="572" y="272" width="14" height="14" fill="#9ca925"/><rect x="586" y="272" width="14" height="14" fill="#9cab23"/><rect x="600" y="272" width="14" height="14" fill="#9dac23"/><rect x="614" y="272" width="14" height="14" fill="#9fad23"/><rect x="628" y="272" width="14" height="14" fill="#a4ae21"/><rect x="642" y="272" width="14" height="14" fill="#a6af20"/><rect x="656" y="272" width="14" height="14" fill="#a4af21"/><rect x="670" y="272" width="14" height="14" fill="#a0ad23"/><rect x="684" y="272" width="14" height="14" fill="#9aac27"/><rect x="698" y="272" width="14" height="14" fill="#93a92c"/><rect x="712" y="272" width="14" height="14" fill="#8ba632"/><rect x="726" y="272" width="14" height="14" fill="#82a239"/><rect x="740" y="272" width="14" height="14" fill="#7a9f40"/><rect x="754" y="272" width="14" height="14" fill="#739b46"/><rect x="768" y="272" width="14" height="14" fill="#6e984b"/><rect x="782" y="272" width="14" height="14" fill="#699650"/><rect x="12" y="286" width="14" height="14" fill="#536a84"/><rect x="26" y="286" width="14" height="14" fill="#516c84"/><rect x="40" y="286" width="14" height="14" fill="#507082"/><rect x="54" y="286" width="14" height="14" fill="#51757d"/><rect x="68" y="286" width="14" height="14" fill="#547e73"/><rect x="82" y="286" width="14" height="14" fill="#598864"/><rect x="96" y="286" width="14" height="14" fill="#5d9354"/><rect x="110" y="286" width="14" height="14" fill="#609d44"/><rect x="124" y="286" width="14" height="14" fill="#5fa934"/><rect x="138" y="286" width="14" height="14" fill="#5bb328"/><rect x="152" y="286" width="14" height="14" fill="#58b823"/><rect x="166" y="286" width="14" height="14" fill="#60b523"/><rect x="180" y="286" width="14" height="14" fill="#6bb422"/><rect x="194" y="286" width="14" height="14" fill="#6fb421"/><rect x="208" y="286" width="14" height="14" fill="#85ac21"/><rect x="222" y="286" width="14" height="14" fill="#aba220"/><rect x="236" y="286" width="14" height="14" fill="#c09d20"/><rect x="250" y="286" width="14" height="14" fill="#ca9520"/><rect x="264" y="286" width="14" height="14" fill="#c9941f"/><rect x="278" y="286" width="14" height="14" fill="#c5961f"/><rect x="292" y="286" width="14" height="14" fill="#c49a1f"/><rect x="306" y="286" width="14" height="14" fill="#c3971f"/><rect x="320" y="286" width="14" height="14" fill="#c38f1f"/><rect x="334" y="286" width="14" height="14" fill="#c4891f"/><rect x="348" y="286" width="14" height="14" fill="#c58720"/><rect x="362" y="286" width="14" height="14" fill="#c38c20"/><rect x="376" y="286" width="14" height="14" fill="#c49020"/><rect x="390" y="286" width="14" height="14" fill="#c79020"/><rect x="404" y="286" width="14" height="14" fill="#c59020"/><rect x="418" y="286" width="14" height="14" fill="#c19020"/><rect x="432" y="286" width="14" height="14" fill="#bb9021"/><rect x="446" y="286" width="14" height="14" fill="#b69321"/><rect x="460" y="286" width="14" height="14" fill="#b29a20"/><rect x="474" y="286" width="14" height="14" fill="#b19e20"/><rect x="488" y="286" width="14" height="14" fill="#b09b20"/><rect x="502" y="286" width="14" height="14" fill="#af9721"/><rect x="516" y="286" width="14" height="14" fill="#ad9722"/><rect x="530" y="286" width="14" height="14" fill="#ad9a23"/><rect x="544" y="286" width="14" height="14" fill="#ac9e24"/><rect x="558" y="286" width="14" height="14" fill="#a9a124"/><rect x="572" y="286" width="14" height="14" fill="#a4a525"/><rect x="586" y="286" width="14" height="14" fill="#a2a824"/><rect x="600" y="286" width="14" height="14" fill="#a1ab24"/><rect x="614" y="286" width="14" height="14" fill="#a3ad22"/><rect x="628" y="286" width="14" height="14" fill="#a6af21"/><rect x="642" y="286" width="14" height="14" fill="#a7af20"/><rect x="656" y="286" width="14" height="14" fill="#a8af20"/><rect x="670" y="286" width="14" height="14" fill="#a6ae22"/><rect x="684" y="286" width="14" height="14" fill="#a1ac25"/><rect x="698" y="286" width="14" height="14" fill="#99aa2a"/><rect x="712" y="286" width="14" height="14" fill="#91a72f"/><rect x="726" y="286" width="14" height="14" fill="#88a436"/><rect x="740" y="286" width="14" height="14" fill="#81a03c"/><rect x="754" y="286" width="14" height="14" fill="#7a9d42"/><rect x="768" y="286" width="14" height="14" fill="#749a47"/><rect x="782" y="286" width="14" height="14" fill="#6f984b"/><rect x="12" y="300" width="14" height="14" fill="#4d638e"/><rect x="26" y="300" width="14" height="14" fill="#4a6491"/><rect x="40" y="300" width="14" height="14" fill="#476792"/><rect x="54" y="300" width="14" height="14" fill="#476d8e"/><rect x="68" y="300" width="14" height="14" fill="#4a7783"/><rect x="82" y="300" width="14" height="14" fill="#508470"/><rect x="96" y="300" width="14" height="14" fill="#56935b"/><rect x="110" y="300" width="14" height="14" fill="#599f48"/><rect x="124" y="300" width="14" height="14" fill="#5aab36"/><rect x="138" y="300" width="14" height="14" fill="#55b826"/><rect x="152" y="300" width="14" height="14" fill="#51be20"/><rect x="166" y="300" width="14" height="14" fill="#58b922"/><rect x="180" y="300" width="14" height="14" fill="#6fab23"/><rect x="194" y="300" width="14" height="14" fill="#83a122"/><rect x="208" y="300" width="14" height="14" fill="#989921"/><rect x="222" y="300" width="14" height="14" fill="#b19220"/><rect x="236" y="300" width="14" height="14" fill="#c3901f"/><rect x="250" y="300" width="14" height="14" fill="#cd8f1f"/><rect x="264" y="300" width="14" height="14" fill="#cc8c1f"/><rect x="278" y="300" width="14" height="14" fill="#ca841e"/><rect x="292" y="300" width="14" height="14" fill="#c9801c"/><rect x="306" y="300" width="14" height="14" fill="#c7821d"/><rect x="320" y="300" width="14" height="14" fill="#c6831e"/><rect x="334" y="300" width="14" height="14" fill="#c7811f"/><rect x="348" y="300" width="14" height="14" fill="#c7801f"/><rect x="362" y="300" width="14" height="14" fill="#c6841f"/><rect x="376" y="300" width="14" height="14" fill="#c58b1f"/><rect x="390" y="300" width="14" height="14" fill="#c78f20"/><rect x="404" y="300" width="14" height="14" fill="#c68d20"/><rect x="418" y="300" width="14" height="14" fill="#c58520"/><rect x="432" y="300" width="14" height="14" fill="#c38120"/><rect x="446" y="300" width="14" height="14" fill="#be811f"/><rect x="460" y="300" width="14" height="14" fill="#bc7e1e"/><rect x="474" y="300" width="14" height="14" fill="#bb7c1d"/><rect x="488" y="300" width="14" height="14" fill="#b9801d"/><rect x="502" y="300" width="14" height="14" fill="#b7871e"/><rect x="516" y="300" width="14" height="14" fill="#b78f20"/><rect x="530" y="300" width="14" height="14" fill="#b99721"/><rect x="544" y="300" width="14" height="14" fill="#ba9c21"/><rect x="558" y="300" width="14" height="14" fill="#b69f22"/><rect x="572" y="300" width="14" height="14" fill="#afa323"/><rect x="586" y="300" width="14" height="14" fill="#aaa723"/><rect x="600" y="300" width="14" height="14" fill="#a7aa23"/><rect x="614" y="300" width="14" height="14" fill="#a7ac22"/><rect x="628" y="300" width="14" height="14" fill="#a9ae21"/><rect x="642" y="300" width="14" height="14" fill="#abaf20"/><rect x="656" y="300" width="14" height="14" fill="#aeaf20"/><rect x="670" y="300" width="14" height="14" fill="#abaf21"/><rect x="684" y="300" width="14" height="14" fill="#a6ad24"/><rect x="698" y="300" width="14" height="14" fill="#9eab28"/><rect x="712" y="300" width="14" height="14" fill="#95a82d"/><rect x="726" y="300" width="14" height="14" fill="#8da433"/><rect x="740" y="300" width="14" height="14" fill="#85a139"/><rect x="754" y="300" width="14" height="14" fill="#7e9e3e"/><rect x="768" y="300" width="14" height="14" fill="#799c43"/><rect x="782" y="300" width="14" height="14" fill="#749947"/><rect x="12" y="314" width="14" height="14" fill="#485b98"/><rect x="26" y="314" width="14" height="14" fill="#425b9f"/><rect x="40" y="314" width="14" height="14" fill="#3c5ca5"/><rect x="54" y="314" width="14" height="14" fill="#3a60a5"/><rect x="68" y="314" width="14" height="14" fill="#3e6c99"/><rect x="82" y="314" width="14" height="14" fill="#46807f"/><rect x="96" y="314" width="14" height="14" fill="#4e9462"/><rect x="110" y="314" width="14" height="14" fill="#51a24b"/><rect x="124" y="314" width="14" height="14" fill="#53aa3d"/><rect x="138" y="314" width="14" height="14" fill="#57b22d"/><rect x="152" y="314" width="14" height="14" fill="#55b923"/><rect x="166" y="314" width="14" height="14" fill="#5fb224"/><rect x="180" y="314" width="14" height="14" fill="#799e24"/><rect x="194" y="314" width="14" height="14" fill="#928d22"/><rect x="208" y="314" width="14" height="14" fill="#a58220"/><rect x="222" y="314" width="14" height="14" fill="#b57e1e"/><rect x="236" y="314" width="14" height="14" fill="#c17e1d"/><rect x="250" y="314" width="14" height="14" fill="#c97e1e"/><rect x="264" y="314" width="14" height="14" fill="#cf781e"/><rect x="278" y="314" width="14" height="14" fill="#d0741d"/><rect x="292" y="314" width="14" height="14" fill="#cf7219"/><rect x="306" y="314" width="14" height="14" fill="#cc751a"/><rect x="320" y="314" width="14" height="14" fill="#c87c1d"/><rect x="334" y="314" width="14" height="14" fill="#c77e1e"/><rect x="348" y="314" width="14" height="14" fill="#c87d1e"/><rect x="362" y="314" width="14" height="14" fill="#c87c1d"/><rect x="376" y="314" width="14" height="14" fill="#c6831e"/><rect x="390" y="314" width="14" height="14" fill="#c6881f"/><rect x="404" y="314" width="14" height="14" fill="#c88120"/><rect x="418" y="314" width="14" height="14" fill="#cc7620"/><rect x="432" y="314" width="14" height="14" fill="#cb741f"/><rect x="446" y="314" width="14" height="14" fill="#c5731e"/><rect x="460" y="314" width="14" height="14" fill="#c4661a"/><rect x="474" y="314" width="14" height="14" fill="#c56119"/><rect x="488" y="314" width="14" height="14" fill="#c16a1a"/><rect x="502" y="314" width="14" height="14" fill="#be7b1b"/><rect x="516" y="314" width="14" height="14" fill="#be8a1d"/><rect x="530" y="314" width="14" height="14" fill="#c2991f"/><rect x="544" y="314" width="14" height="14" fill="#c49e20"/><rect x="558" y="314" width="14" height="14" fill="#c09f20"/><rect x="572" y="314" width="14" height="14" fill="#b7a421"/><rect x="586" y="314" width="14" height="14" fill="#b2a922"/><rect x="600" y="314" width="14" height="14" fill="#afab22"/><rect x="614" y="314" width="14" height="14" fill="#acac22"/><rect x="628" y="314" width="14" height="14" fill="#abae21"/><rect x="642" y="314" width="14" height="14" fill="#aeaf20"/><rect x="656" y="314" width="14" height="14" fill="#afaf20"/><rect x="670" y="314" width="14" height="14" fill="#adaf21"/><rect x="684" y="314" width="14" height="14" fill="#a7ad23"/><rect x="698" y="314" width="14" height="14" fill="#a0ab27"/><rect x="712" y="314" width="14" height="14" fill="#98a82c"/><rect x="726" y="314" width="14" height="14" fill="#90a532"/><rect x="740" y="314" width="14" height="14" fill="#89a237"/><rect x="754" y="314" width="14" height="14" fill="#829f3c"/><rect x="768" y="314" width="14" height="14" fill="#7c9d40"/><rect x="782" y="314" width="14" height="14" fill="#789b45"/><rect x="12" y="328" width="14" height="14" fill="#4551a0"/><rect x="26" y="328" width="14" height="14" fill="#3c52aa"/><rect x="40" y="328" width="14" height="14" fill="#3251b8"/><rect x="54" y="328" width="14" height="14" fill="#2c50c0"/><rect x="68" y="328" width="14" height="14" fill="#305cb4"/><rect x="82" y="328" width="14" height="14" fill="#3c7b91"/><rect x="96" y="328" width="14" height="14" fill="#46976a"/><rect x="110" y="328" width="14" height="14" fill="#49a84a"/><rect x="124" y="328" width="14" height="14" fill="#47ad40"/><rect x="138" y="328" width="14" height="14" fill="#56ab39"/><rect x="152" y="328" width="14" height="14" fill="#67a72e"/><rect x="166" y="328" width="14" height="14" fill="#779c28"/><rect x="180" y="328" width="14" height="14" fill="#8e8824"/><rect x="194" y="328" width="14" height="14" fill="#a27520"/><rect x="208" y="328" width="14" height="14" fill="#b06a1c"/><rect x="222" y="328" width="14" height="14" fill="#ba641a"/><rect x="236" y="328" width="14" height="14" fill="#c26219"/><rect x="250" y="328" width="14" height="14" fill="#c9651a"/><rect x="264" y="328" width="14" height="14" fill="#d36d1e"/><rect x="278" y="328" width="14" height="14" fill="#d56f1e"/><rect x="292" y="328" width="14" height="14" fill="#cf7019"/><rect x="306" y="328" width="14" height="14" fill="#cd7219"/><rect x="320" y="328" width="14" height="14" fill="#c9761b"/><rect x="334" y="328" width="14" height="14" fill="#ca741b"/><rect x="348" y="328" width="14" height="14" fill="#cd6d19"/><rect x="362" y="328" width="14" height="14" fill="#cd6e19"/><rect x="376" y="328" width="14" height="14" fill="#c9771c"/><rect x="390" y="328" width="14" height="14" fill="#c77d1f"/><rect x="404" y="328" width="14" height="14" fill="#cb771f"/><rect x="418" y="328" width="14" height="14" fill="#cf7120"/><rect x="432" y="328" width="14" height="14" fill="#ce711f"/><rect x="446" y="328" width="14" height="14" fill="#c86e1d"/><rect x="460" y="328" width="14" height="14" fill="#c65e19"/><rect x="474" y="328" width="14" height="14" fill="#c75a18"/><rect x="488" y="328" width="14" height="14" fill="#c46619"/><rect x="502" y="328" width="14" height="14" fill="#c07719"/><rect x="516" y="328" width="14" height="14" fill="#c0831b"/><rect x="530" y="328" width="14" height="14" fill="#c59a1f"/><rect x="544" y="328" width="14" height="14" fill="#c79f20"/><rect x="558" y="328" width="14" height="14" fill="#c49f20"/><rect x="572" y="328" width="14" height="14" fill="#baa620"/><rect x="586" y="328" width="14" height="14" fill="#b6ad20"/><rect x="600" y="328" width="14" height="14" fill="#b5ae20"/><rect x="614" y="328" width="14" height="14" fill="#b1ad21"/><rect x="628" y="328" width="14" height="14" fill="#adad22"/><rect x="642" y="328" width="14" height="14" fill="#acae21"/><rect x="656" y="328" width="14" height="14" fill="#adae21"/><rect x="670" y="328" width="14" height="14" fill="#abae22"/><rect x="684" y="328" width="14" height="14" fill="#a6ac24"/><rect x="698" y="328" width="14" height="14" fill="#a0aa28"/><rect x="712" y="328" width="14" height="14" fill="#99a72c"/><rect x="726" y="328" width="14" height="14" fill="#92a531"/><rect x="740" y="328" width="14" height="14" fill="#8ba236"/><rect x="754" y="328" width="14" height="14" fill="#85a03a"/><rect x="768" y="328" width="14" height="14" fill="#7f9d3e"/><rect x="782" y="328" width="14" height="14" fill="#7b9b42"/><rect x="12" y="342" width="14" height="14" fill="#4546a3"/><rect x="26" y="342" width="14" height="14" fill="#3b49b0"/><rect x="40" y="342" width="14" height="14" fill="#2c49c3"/><rect x="54" y="342" width="14" height="14" fill="#2344d1"/><rect x="68" y="342" width="14" height="14" fill="#264ec8"/><rect x="82" y="342" width="14" height="14" fill="#327e9f"/><rect x="96" y="342" width="14" height="14" fill="#3b9c7c"/><rect x="110" y="342" width="14" height="14" fill="#48aa4e"/><rect x="124" y="342" width="14" height="14" fill="#47ae3f"/><rect x="138" y="342" width="14" height="14" fill="#60ac38"/><rect x="152" y="342" width="14" height="14" fill="#7b9e2f"/><rect x="166" y="342" width="14" height="14" fill="#918828"/><rect x="180" y="342" width="14" height="14" fill="#a57020"/><rect x="194" y="342" width="14" height="14" fill="#b35d1b"/><rect x="208" y="342" width="14" height="14" fill="#ba5217"/><rect x="222" y="342" width="14" height="14" fill="#bf4b15"/><rect x="236" y="342" width="14" height="14" fill="#c34814"/><rect x="250" y="342" width="14" height="14" fill="#c74913"/><rect x="264" y="342" width="14" height="14" fill="#cc5917"/><rect x="278" y="342" width="14" height="14" fill="#d06a1c"/><rect x="292" y="342" width="14" height="14" fill="#ce6e1a"/><rect x="306" y="342" width="14" height="14" fill="#cb711a"/><rect x="320" y="342" width="14" height="14" fill="#c9731b"/><rect x="334" y="342" width="14" height="14" fill="#cb6f1a"/><rect x="348" y="342" width="14" height="14" fill="#cf6918"/><rect x="362" y="342" width="14" height="14" fill="#ce6a18"/><rect x="376" y="342" width="14" height="14" fill="#ca721b"/><rect x="390" y="342" width="14" height="14" fill="#c7781e"/><rect x="404" y="342" width="14" height="14" fill="#ca761f"/><rect x="418" y="342" width="14" height="14" fill="#cd721f"/><rect x="432" y="342" width="14" height="14" fill="#cc711f"/><rect x="446" y="342" width="14" height="14" fill="#c76e1d"/><rect x="460" y="342" width="14" height="14" fill="#c5631a"/><rect x="474" y="342" width="14" height="14" fill="#c56018"/><rect x="488" y="342" width="14" height="14" fill="#c17018"/><rect x="502" y="342" width="14" height="14" fill="#c07818"/><rect x="516" y="342" width="14" height="14" fill="#c07c19"/><rect x="530" y="342" width="14" height="14" fill="#c3931e"/><rect x="544" y="342" width="14" height="14" fill="#c59d1f"/><rect x="558" y="342" width="14" height="14" fill="#c1a020"/><rect x="572" y="342" width="14" height="14" fill="#b9a920"/><rect x="586" y="342" width="14" height="14" fill="#b7af20"/><rect x="600" y="342" width="14" height="14" fill="#b7af20"/><rect x="614" y="342" width="14" height="14" fill="#b4ae21"/><rect x="628" y="342" width="14" height="14" fill="#aeac22"/><rect x="642" y="342" width="14" height="14" fill="#abac22"/><rect x="656" y="342" width="14" height="14" fill="#aaad23"/><rect x="670" y="342" width="14" height="14" fill="#a8ac24"/><rect x="684" y="342" width="14" height="14" fill="#a4ab26"/><rect x="698" y="342" width="14" height="14" fill="#9fa929"/><rect x="712" y="342" width="14" height="14" fill="#99a72d"/><rect x="726" y="342" width="14" height="14" fill="#92a431"/><rect x="740" y="342" width="14" height="14" fill="#8ca235"/><rect x="754" y="342" width="14" height="14" fill="#87a039"/><rect x="768" y="342" width="14" height="14" fill="#829e3d"/><rect x="782" y="342" width="14" height="14" fill="#7d9c41"/><rect x="12" y="356" width="14" height="14" fill="#4c36a1"/><rect x="26" y="356" width="14" height="14" fill="#423cab"/><rect x="40" y="356" width="14" height="14" fill="#3046bf"/><rect x="54" y="356" width="14" height="14" fill="#2546ce"/><rect x="68" y="356" width="14" height="14" fill="#2756c3"/><rect x="82" y="356" width="14" height="14" fill="#2994a1"/><rect x="96" y="356" width="14" height="14" fill="#29a996"/><rect x="110" y="356" width="14" height="14" fill="#4ba965"/><rect x="124" y="356" width="14" height="14" fill="#75b433"/><rect x="138" y="356" width="14" height="14" fill="#86b627"/><rect x="152" y="356" width="14" height="14" fill="#8f9d29"/><rect x="166" y="356" width="14" height="14" fill="#a77823"/><rect x="180" y="356" width="14" height="14" fill="#b75e1b"/><rect x="194" y="356" width="14" height="14" fill="#bf4915"/><rect x="208" y="356" width="14" height="14" fill="#c24113"/><rect x="222" y="356" width="14" height="14" fill="#c23b12"/><rect x="236" y="356" width="14" height="14" fill="#c43711"/><rect x="250" y="356" width="14" height="14" fill="#c74110"/><rect x="264" y="356" width="14" height="14" fill="#c74812"/><rect x="278" y="356" width="14" height="14" fill="#c95c18"/><rect x="292" y="356" width="14" height="14" fill="#c9691a"/><rect x="306" y="356" width="14" height="14" fill="#c86f1b"/><rect x="320" y="356" width="14" height="14" fill="#c7721c"/><rect x="334" y="356" width="14" height="14" fill="#c9701b"/><rect x="348" y="356" width="14" height="14" fill="#cc6c19"/><rect x="362" y="356" width="14" height="14" fill="#cc6d1a"/><rect x="376" y="356" width="14" height="14" fill="#c8731c"/><rect x="390" y="356" width="14" height="14" fill="#c5781e"/><rect x="404" y="356" width="14" height="14" fill="#c6781f"/><rect x="418" y="356" width="14" height="14" fill="#c87520"/><rect x="432" y="356" width="14" height="14" fill="#c7741f"/><rect x="446" y="356" width="14" height="14" fill="#c4711e"/><rect x="460" y="356" width="14" height="14" fill="#c26d1b"/><rect x="474" y="356" width="14" height="14" fill="#c16d1a"/><rect x="488" y="356" width="14" height="14" fill="#c07419"/><rect x="502" y="356" width="14" height="14" fill="#bf7818"/><rect x="516" y="356" width="14" height="14" fill="#bf7d1a"/><rect x="530" y="356" width="14" height="14" fill="#bf8b1d"/><rect x="544" y="356" width="14" height="14" fill="#bf981f"/><rect x="558" y="356" width="14" height="14" fill="#bc9f20"/><rect x="572" y="356" width="14" height="14" fill="#b8a820"/><rect x="586" y="356" width="14" height="14" fill="#b7ae20"/><rect x="600" y="356" width="14" height="14" fill="#b6ae20"/><rect x="614" y="356" width="14" height="14" fill="#b4ad21"/><rect x="628" y="356" width="14" height="14" fill="#afab22"/><rect x="642" y="356" width="14" height="14" fill="#aaab24"/><rect x="656" y="356" width="14" height="14" fill="#a7aa25"/><rect x="670" y="356" width="14" height="14" fill="#a5aa26"/><rect x="684" y="356" width="14" height="14" fill="#a1a928"/><rect x="698" y="356" width="14" height="14" fill="#9da72a"/><rect x="712" y="356" width="14" height="14" fill="#98a52e"/><rect x="726" y="356" width="14" height="14" fill="#92a331"/><rect x="740" y="356" width="14" height="14" fill="#8da135"/><rect x="754" y="356" width="14" height="14" fill="#889f39"/><rect x="768" y="356" width="14" height="14" fill="#839e3c"/><rect x="782" y="356" width="14" height="14" fill="#7f9c3f"/><rect x="12" y="370" width="14" height="14" fill="#55249c"/><rect x="26" y="370" width="14" height="14" fill="#5027a0"/><rect x="40" y="370" width="14" height="14" fill="#383fb6"/><rect x="54" y="370" width="14" height="14" fill="#2a4bc4"/><rect x="68" y="370" width="14" height="14" fill="#2a64bb"/><rect x="82" y="370" width="14" height="14" fill="#2a94a3"/><rect x="96" y="370" width="14" height="14" fill="#29a898"/><rect x="110" y="370" width="14" height="14" fill="#50a66b"/><rect x="124" y="370" width="14" height="14" fill="#82b330"/><rect x="138" y="370" width="14" height="14" fill="#8eb425"/><rect x="152" y="370" width="14" height="14" fill="#a29025"/><rect x="166" y="370" width="14" height="14" fill="#be6a1c"/><rect x="180" y="370" width="14" height="14" fill="#c35718"/><rect x="194" y="370" width="14" height="14" fill="#c33f12"/><rect x="208" y="370" width="14" height="14" fill="#c53b11"/><rect x="222" y="370" width="14" height="14" fill="#c33a11"/><rect x="236" y="370" width="14" height="14" fill="#c33511"/><rect x="250" y="370" width="14" height="14" fill="#c44012"/><rect x="264" y="370" width="14" height="14" fill="#c54a14"/><rect x="278" y="370" width="14" height="14" fill="#c55817"/><rect x="292" y="370" width="14" height="14" fill="#c5651a"/><rect x="306" y="370" width="14" height="14" fill="#c46d1c"/><rect x="320" y="370" width="14" height="14" fill="#c4711c"/><rect x="334" y="370" width="14" height="14" fill="#c6721c"/><rect x="348" y="370" width="14" height="14" fill="#c7711c"/><rect x="362" y="370" width="14" height="14" fill="#c7731c"/><rect x="376" y="370" width="14" height="14" fill="#c5761d"/><rect x="390" y="370" width="14" height="14" fill="#c3791f"/><rect x="404" y="370" width="14" height="14" fill="#c27a20"/><rect x="418" y="370" width="14" height="14" fill="#c27920"/><rect x="432" y="370" width="14" height="14" fill="#c2781f"/><rect x="446" y="370" width="14" height="14" fill="#c0761e"/><rect x="460" y="370" width="14" height="14" fill="#bf741d"/><rect x="474" y="370" width="14" height="14" fill="#be751c"/><rect x="488" y="370" width="14" height="14" fill="#be781b"/><rect x="502" y="370" width="14" height="14" fill="#be7b1a"/><rect x="516" y="370" width="14" height="14" fill="#bd801b"/><rect x="530" y="370" width="14" height="14" fill="#bc8a1e"/><rect x="544" y="370" width="14" height="14" fill="#bb9420"/><rect x="558" y="370" width="14" height="14" fill="#b89d21"/><rect x="572" y="370" width="14" height="14" fill="#b6a521"/><rect x="586" y="370" width="14" height="14" fill="#b5aa21"/><rect x="600" y="370" width="14" height="14" fill="#b4ab21"/><rect x="614" y="370" width="14" height="14" fill="#b1ab22"/><rect x="628" y="370" width="14" height="14" fill="#ada923"/><rect x="642" y="370" width="14" height="14" fill="#a9a925"/><rect x="656" y="370" width="14" height="14" fill="#a5a826"/><rect x="670" y="370" width="14" height="14" fill="#a2a828"/><rect x="684" y="370" width="14" height="14" fill="#9fa72a"/><rect x="698" y="370" width="14" height="14" fill="#9ba52c"/><rect x="712" y="370" width="14" height="14" fill="#96a42f"/><rect x="726" y="370" width="14" height="14" fill="#92a232"/><rect x="740" y="370" width="14" height="14" fill="#8da135"/><rect x="754" y="370" width="14" height="14" fill="#899f38"/><rect x="768" y="370" width="14" height="14" fill="#859d3b"/><rect x="782" y="370" width="14" height="14" fill="#819c3e"/><rect x="12" y="384" width="14" height="14" fill="#581d9a"/><rect x="26" y="384" width="14" height="14" fill="#571e9b"/><rect x="40" y="384" width="14" height="14" fill="#3a39b5"/><rect x="54" y="384" width="14" height="14" fill="#2745ca"/><rect x="68" y="384" width="14" height="14" fill="#246cc5"/><rect x="82" y="384" width="14" height="14" fill="#2884b6"/><rect x="96" y="384" width="14" height="14" fill="#3d968c"/><rect x="110" y="384" width="14" height="14" fill="#5ea05f"/><rect x="124" y="384" width="14" height="14" fill="#81a33c"/><rect x="138" y="384" width="14" height="14" fill="#9d992b"/><rect x="152" y="384" width="14" height="14" fill="#b78122"/><rect x="166" y="384" width="14" height="14" fill="#c9651a"/><rect x="180" y="384" width="14" height="14" fill="#c95a17"/><rect x="194" y="384" width="14" height="14" fill="#c13e11"/><rect x="208" y="384" width="14" height="14" fill="#c13d11"/><rect x="222" y="384" width="14" height="14" fill="#c14013"/><rect x="236" y="384" width="14" height="14" fill="#c14013"/><rect x="250" y="384" width="14" height="14" fill="#c14614"/><rect x="264" y="384" width="14" height="14" fill="#c24f16"/><rect x="278" y="384" width="14" height="14" fill="#c15a19"/><rect x="292" y="384" width="14" height="14" fill="#c1641b"/><rect x="306" y="384" width="14" height="14" fill="#c06c1d"/><rect x="320" y="384" width="14" height="14" fill="#c0711d"/><rect x="334" y="384" width="14" height="14" fill="#c1731e"/><rect x="348" y="384" width="14" height="14" fill="#c2751e"/><rect x="362" y="384" width="14" height="14" fill="#c2761e"/><rect x="376" y="384" width="14" height="14" fill="#c0781f"/><rect x="390" y="384" width="14" height="14" fill="#bf7b20"/><rect x="404" y="384" width="14" height="14" fill="#be7b20"/><rect x="418" y="384" width="14" height="14" fill="#be7b21"/><rect x="432" y="384" width="14" height="14" fill="#bd7b20"/><rect x="446" y="384" width="14" height="14" fill="#bc7a20"/><rect x="460" y="384" width="14" height="14" fill="#bc7a1f"/><rect x="474" y="384" width="14" height="14" fill="#bb7a1e"/><rect x="488" y="384" width="14" height="14" fill="#bb7c1d"/><rect x="502" y="384" width="14" height="14" fill="#bb7f1d"/><rect x="516" y="384" width="14" height="14" fill="#ba841e"/><rect x="530" y="384" width="14" height="14" fill="#b88b1f"/><rect x="544" y="384" width="14" height="14" fill="#b79321"/><rect x="558" y="384" width="14" height="14" fill="#b59a22"/><rect x="572" y="384" width="14" height="14" fill="#b3a122"/><rect x="586" y="384" width="14" height="14" fill="#b2a522"/><rect x="600" y="384" width="14" height="14" fill="#b1a723"/><rect x="614" y="384" width="14" height="14" fill="#aea824"/><rect x="628" y="384" width="14" height="14" fill="#aba725"/><rect x="642" y="384" width="14" height="14" fill="#a7a626"/><rect x="656" y="384" width="14" height="14" fill="#a3a628"/><rect x="670" y="384" width="14" height="14" fill="#a0a629"/><rect x="684" y="384" width="14" height="14" fill="#9da52b"/><rect x="698" y="384" width="14" height="14" fill="#99a42d"/><rect x="712" y="384" width="14" height="14" fill="#95a330"/><rect x="726" y="384" width="14" height="14" fill="#91a133"/><rect x="740" y="384" width="14" height="14" fill="#8da035"/><rect x="754" y="384" width="14" height="14" fill="#899e38"/><rect x="768" y="384" width="14" height="14" fill="#859d3b"/><rect x="782" y="384" width="14" height="14" fill="#829c3e"/><rect x="12" y="398" width="14" height="14" fill="#51259e"/><rect x="26" y="398" width="14" height="14" fill="#4d24a1"/><rect x="40" y="398" width="14" height="14" fill="#432faa"/><rect x="54" y="398" width="14" height="14" fill="#304fbc"/><rect x="68" y="398" width="14" height="14" fill="#227bc5"/><rect x="82" y="398" width="14" height="14" fill="#2885b9"/><rect x="96" y="398" width="14" height="14" fill="#499978"/><rect x="110" y="398" width="14" height="14" fill="#61ab45"/><rect x="124" y="398" width="14" height="14" fill="#80a535"/><rect x="138" y="398" width="14" height="14" fill="#b09327"/><rect x="152" y="398" width="14" height="14" fill="#c88a20"/><rect x="166" y="398" width="14" height="14" fill="#c5711d"/><rect x="180" y="398" width="14" height="14" fill="#c35718"/><rect x="194" y="398" width="14" height="14" fill="#c04915"/><rect x="208" y="398" width="14" height="14" fill="#bf4514"/><rect x="222" y="398" width="14" height="14" fill="#be4816"/><rect x="236" y="398" width="14" height="14" fill="#be4b17"/><rect x="250" y="398" width="14" height="14" fill="#be5018"/><rect x="264" y="398" width="14" height="14" fill="#be5619"/><rect x="278" y="398" width="14" height="14" fill="#bd5e1b"/><rect x="292" y="398" width="14" height="14" fill="#bd651d"/><rect x="306" y="398" width="14" height="14" fill="#bd6c1e"/><rect x="320" y="398" width="14" height="14" fill="#bd711f"/><rect x="334" y="398" width="14" height="14" fill="#bd741f"/><rect x="348" y="398" width="14" height="14" fill="#bd771f"/><rect x="362" y="398" width="14" height="14" fill="#bd7920"/><rect x="376" y="398" width="14" height="14" fill="#bc7a20"/><rect x="390" y="398" width="14" height="14" fill="#bc7c21"/><rect x="404" y="398" width="14" height="14" fill="#bb7d21"/><rect x="418" y="398" width="14" height="14" fill="#ba7e21"/><rect x="432" y="398" width="14" height="14" fill="#ba7e21"/><rect x="446" y="398" width="14" height="14" fill="#b97e21"/><rect x="460" y="398" width="14" height="14" fill="#b87e20"/><rect x="474" y="398" width="14" height="14" fill="#b87f20"/><rect x="488" y="398" width="14" height="14" fill="#b8801f"/><rect x="502" y="398" width="14" height="14" fill="#b7831f"/><rect x="516" y="398" width="14" height="14" fill="#b68720"/><rect x="530" y="398" width="14" height="14" fill="#b58c21"/><rect x="544" y="398" width="14" height="14" fill="#b39222"/><rect x="558" y="398" width="14" height="14" fill="#b29823"/><rect x="572" y="398" width="14" height="14" fill="#b09d23"/><rect x="586" y="398" width="14" height="14" fill="#afa124"/><rect x="600" y="398" width="14" height="14" fill="#ada324"/><rect x="614" y="398" width="14" height="14" fill="#aba425"/><rect x="628" y="398" width="14" height="14" fill="#a8a426"/><rect x="642" y="398" width="14" height="14" fill="#a5a428"/><rect x="656" y="398" width="14" height="14" fill="#a1a429"/><rect x="670" y="398" width="14" height="14" fill="#9ea32b"/><rect x="684" y="398" width="14" height="14" fill="#9ba32d"/><rect x="698" y="398" width="14" height="14" fill="#98a22f"/><rect x="712" y="398" width="14" height="14" fill="#94a131"/><rect x="726" y="398" width="14" height="14" fill="#91a033"/><rect x="740" y="398" width="14" height="14" fill="#8d9f36"/><rect x="754" y="398" width="14" height="14" fill="#899e38"/><rect x="768" y="398" width="14" height="14" fill="#869c3b"/><rect x="782" y="398" width="14" height="14" fill="#839b3d"/><rect x="12" y="412" width="14" height="14" fill="#4b2ca3"/><rect x="26" y="412" width="14" height="14" fill="#4924a5"/><rect x="40" y="412" width="14" height="14" fill="#442aae"/><rect x="54" y="412" width="14" height="14" fill="#3c45b5"/><rect x="68" y="412" width="14" height="14" fill="#3474ae"/><rect x="82" y="412" width="14" height="14" fill="#399099"/><rect x="96" y="412" width="14" height="14" fill="#51a660"/><rect x="110" y="412" width="14" height="14" fill="#59b935"/><rect x="124" y="412" width="14" height="14" fill="#82b02e"/><rect x="138" y="412" width="14" height="14" fill="#b39e24"/><rect x="152" y="412" width="14" height="14" fill="#c5821f"/><rect x="166" y="412" width="14" height="14" fill="#c4641b"/><rect x="180" y="412" width="14" height="14" fill="#c04a17"/><rect x="194" y="412" width="14" height="14" fill="#bf4b17"/><rect x="208" y="412" width="14" height="14" fill="#bd4f18"/><rect x="222" y="412" width="14" height="14" fill="#bc5219"/><rect x="236" y="412" width="14" height="14" fill="#bb541a"/><rect x="250" y="412" width="14" height="14" fill="#ba581b"/><rect x="264" y="412" width="14" height="14" fill="#ba5c1c"/><rect x="278" y="412" width="14" height="14" fill="#ba621d"/><rect x="292" y="412" width="14" height="14" fill="#ba681e"/><rect x="306" y="412" width="14" height="14" fill="#ba6d1f"/><rect x="320" y="412" width="14" height="14" fill="#b97220"/><rect x="334" y="412" width="14" height="14" fill="#ba7521"/><rect x="348" y="412" width="14" height="14" fill="#ba7821"/><rect x="362" y="412" width="14" height="14" fill="#b97a21"/><rect x="376" y="412" width="14" height="14" fill="#b97c22"/><rect x="390" y="412" width="14" height="14" fill="#b87d22"/><rect x="404" y="412" width="14" height="14" fill="#b87e22"/><rect x="418" y="412" width="14" height="14" fill="#b77f23"/><rect x="432" y="412" width="14" height="14" fill="#b68022"/><rect x="446" y="412" width="14" height="14" fill="#b68022"/><rect x="460" y="412" width="14" height="14" fill="#b58122"/><rect x="474" y="412" width="14" height="14" fill="#b58222"/><rect x="488" y="412" width="14" height="14" fill="#b48321"/><rect x="502" y="412" width="14" height="14" fill="#b48621"/><rect x="516" y="412" width="14" height="14" fill="#b38922"/><rect x="530" y="412" width="14" height="14" fill="#b28d23"/><rect x="544" y="412" width="14" height="14" fill="#b09223"/><rect x="558" y="412" width="14" height="14" fill="#af9724"/><rect x="572" y="412" width="14" height="14" fill="#ad9b25"/><rect x="586" y="412" width="14" height="14" fill="#ac9e25"/><rect x="600" y="412" width="14" height="14" fill="#aaa026"/><rect x="614" y="412" width="14" height="14" fill="#a8a127"/><rect x="628" y="412" width="14" height="14" fill="#a5a228"/><rect x="642" y="412" width="14" height="14" fill="#a2a229"/><rect x="656" y="412" width="14" height="14" fill="#9fa22b"/><rect x="670" y="412" width="14" height="14" fill="#9ca22c"/><rect x="684" y="412" width="14" height="14" fill="#99a12e"/><rect x="698" y="412" width="14" height="14" fill="#96a030"/><rect x="712" y="412" width="14" height="14" fill="#93a032"/><rect x="726" y="412" width="14" height="14" fill="#909f34"/><rect x="740" y="412" width="14" height="14" fill="#8d9e36"/><rect x="754" y="412" width="14" height="14" fill="#8a9d38"/><rect x="768" y="412" width="14" height="14" fill="#879c3b"/><rect x="782" y="412" width="14" height="14" fill="#849b3d"/><rect x="12" y="426" width="14" height="14" fill="#4835a6"/><rect x="26" y="426" width="14" height="14" fill="#4331b0"/><rect x="40" y="426" width="14" height="14" fill="#3c32c0"/><rect x="54" y="426" width="14" height="14" fill="#3d42b8"/><rect x="68" y="426" width="14" height="14" fill="#3786a1"/><rect x="82" y="426" width="14" height="14" fill="#2da89d"/><rect x="96" y="426" width="14" height="14" fill="#49a976"/><rect x="110" y="426" width="14" height="14" fill="#6fb13c"/><rect x="124" y="426" width="14" height="14" fill="#a4ad28"/><rect x="138" y="426" width="14" height="14" fill="#b8a822"/><rect x="152" y="426" width="14" height="14" fill="#bf751e"/><rect x="166" y="426" width="14" height="14" fill="#c55819"/><rect x="180" y="426" width="14" height="14" fill="#c05319"/><rect x="194" y="426" width="14" height="14" fill="#be5219"/><rect x="208" y="426" width="14" height="14" fill="#bb571b"/><rect x="222" y="426" width="14" height="14" fill="#b95a1c"/><rect x="236" y="426" width="14" height="14" fill="#b85c1d"/><rect x="250" y="426" width="14" height="14" fill="#b75f1e"/><rect x="264" y="426" width="14" height="14" fill="#b7621f"/><rect x="278" y="426" width="14" height="14" fill="#b7661f"/><rect x="292" y="426" width="14" height="14" fill="#b66b20"/><rect x="306" y="426" width="14" height="14" fill="#b66f21"/><rect x="320" y="426" width="14" height="14" fill="#b67322"/><rect x="334" y="426" width="14" height="14" fill="#b67622"/><rect x="348" y="426" width="14" height="14" fill="#b67922"/><rect x="362" y="426" width="14" height="14" fill="#b67b23"/><rect x="376" y="426" width="14" height="14" fill="#b67d23"/><rect x="390" y="426" width="14" height="14" fill="#b57e23"/><rect x="404" y="426" width="14" height="14" fill="#b48024"/><rect x="418" y="426" width="14" height="14" fill="#b48124"/><rect x="432" y="426" width="14" height="14" fill="#b38124"/><rect x="446" y="426" width="14" height="14" fill="#b38224"/><rect x="460" y="426" width="14" height="14" fill="#b28323"/><rect x="474" y="426" width="14" height="14" fill="#b28423"/><rect x="488" y="426" width="14" height="14" fill="#b18623"/><rect x="502" y="426" width="14" height="14" fill="#b18823"/><rect x="516" y="426" width="14" height="14" fill="#b08b24"/><rect x="530" y="426" width="14" height="14" fill="#af8e24"/><rect x="544" y="426" width="14" height="14" fill="#ad9225"/><rect x="558" y="426" width="14" height="14" fill="#ac9526"/><rect x="572" y="426" width="14" height="14" fill="#aa9826"/><rect x="586" y="426" width="14" height="14" fill="#a99b27"/><rect x="600" y="426" width="14" height="14" fill="#a79d28"/><rect x="614" y="426" width="14" height="14" fill="#a59e29"/><rect x="628" y="426" width="14" height="14" fill="#a39f2a"/><rect x="642" y="426" width="14" height="14" fill="#a0a02b"/><rect x="656" y="426" width="14" height="14" fill="#9ea02c"/><rect x="670" y="426" width="14" height="14" fill="#9ba02e"/><rect x="684" y="426" width="14" height="14" fill="#989f2f"/><rect x="698" y="426" width="14" height="14" fill="#959f31"/><rect x="712" y="426" width="14" height="14" fill="#929e33"/><rect x="726" y="426" width="14" height="14" fill="#8f9e35"/><rect x="740" y="426" width="14" height="14" fill="#8c9d37"/><rect x="754" y="426" width="14" height="14" fill="#8a9c39"/><rect x="768" y="426" width="14" height="14" fill="#879b3b"/><rect x="782" y="426" width="14" height="14" fill="#849a3d"/><rect x="12" y="440" width="14" height="14" fill="#4a42a3"/><rect x="26" y="440" width="14" height="14" fill="#453fac"/><rect x="40" y="440" width="14" height="14" fill="#4141b3"/><rect x="54" y="440" width="14" height="14" fill="#425aa7"/><rect x="68" y="440" width="14" height="14" fill="#3b9497"/><rect x="82" y="440" width="14" height="14" fill="#30ab9a"/><rect x="96" y="440" width="14" height="14" fill="#53ab74"/><rect x="110" y="440" width="14" height="14" fill="#8cad3b"/><rect x="124" y="440" width="14" height="14" fill="#adaf25"/><rect x="138" y="440" width="14" height="14" fill="#b5ad22"/><rect x="152" y="440" width="14" height="14" fill="#b88c21"/><rect x="166" y="440" width="14" height="14" fill="#bd6b1d"/><rect x="180" y="440" width="14" height="14" fill="#bc621d"/><rect x="194" y="440" width="14" height="14" fill="#ba5f1d"/><rect x="208" y="440" width="14" height="14" fill="#b8601e"/><rect x="222" y="440" width="14" height="14" fill="#b6611f"/><rect x="236" y="440" width="14" height="14" fill="#b56320"/><rect x="250" y="440" width="14" height="14" fill="#b46520"/><rect x="264" y="440" width="14" height="14" fill="#b46721"/><rect x="278" y="440" width="14" height="14" fill="#b46a22"/><rect x="292" y="440" width="14" height="14" fill="#b36e22"/><rect x="306" y="440" width="14" height="14" fill="#b37123"/><rect x="320" y="440" width="14" height="14" fill="#b37423"/><rect x="334" y="440" width="14" height="14" fill="#b37724"/><rect x="348" y="440" width="14" height="14" fill="#b37a24"/><rect x="362" y="440" width="14" height="14" fill="#b37c24"/><rect x="376" y="440" width="14" height="14" fill="#b37e24"/><rect x="390" y="440" width="14" height="14" fill="#b27f25"/><rect x="404" y="440" width="14" height="14" fill="#b28025"/><rect x="418" y="440" width="14" height="14" fill="#b18225"/><rect x="432" y="440" width="14" height="14" fill="#b18325"/><rect x="446" y="440" width="14" height="14" fill="#b08425"/><rect x="460" y="440" width="14" height="14" fill="#b08525"/><rect x="474" y="440" width="14" height="14" fill="#af8625"/><rect x="488" y="440" width="14" height="14" fill="#ae8825"/><rect x="502" y="440" width="14" height="14" fill="#ae8a25"/><rect x="516" y="440" width="14" height="14" fill="#ad8c25"/><rect x="530" y="440" width="14" height="14" fill="#ac8f26"/><rect x="544" y="440" width="14" height="14" fill="#aa9126"/><rect x="558" y="440" width="14" height="14" fill="#a99427"/><rect x="572" y="440" width="14" height="14" fill="#a89728"/><rect x="586" y="440" width="14" height="14" fill="#a69928"/><rect x="600" y="440" width="14" height="14" fill="#a49b29"/><rect x="614" y="440" width="14" height="14" fill="#a39c2a"/><rect x="628" y="440" width="14" height="14" fill="#a09d2b"/><rect x="642" y="440" width="14" height="14" fill="#9e9e2c"/><rect x="656" y="440" width="14" height="14" fill="#9c9e2d"/><rect x="670" y="440" width="14" height="14" fill="#999e2f"/><rect x="684" y="440" width="14" height="14" fill="#979e30"/><rect x="698" y="440" width="14" height="14" fill="#949e32"/><rect x="712" y="440" width="14" height="14" fill="#919d33"/><rect x="726" y="440" width="14" height="14" fill="#8f9d35"/><rect x="740" y="440" width="14" height="14" fill="#8c9c37"/><rect x="754" y="440" width="14" height="14" fill="#8a9b39"/><rect x="768" y="440" width="14" height="14" fill="#879b3b"/><rect x="782" y="440" width="14" height="14" fill="#859a3c"/><rect x="12" y="454" width="14" height="14" fill="#4f5198"/><rect x="26" y="454" width="14" height="14" fill="#4d539c"/><rect x="40" y="454" width="14" height="14" fill="#4e5c99"/><rect x="54" y="454" width="14" height="14" fill="#53768a"/><rect x="68" y="454" width="14" height="14" fill="#5b9875"/><rect x="82" y="454" width="14" height="14" fill="#6aab5f"/><rect x="96" y="454" width="14" height="14" fill="#8ab13f"/><rect x="110" y="454" width="14" height="14" fill="#a5b428"/><rect x="124" y="454" width="14" height="14" fill="#acb125"/><rect x="138" y="454" width="14" height="14" fill="#b1ac23"/><rect x="152" y="454" width="14" height="14" fill="#b19924"/><rect x="166" y="454" width="14" height="14" fill="#b48023"/><rect x="180" y="454" width="14" height="14" fill="#b57222"/><rect x="194" y="454" width="14" height="14" fill="#b56c22"/><rect x="208" y="454" width="14" height="14" fill="#b36a22"/><rect x="222" y="454" width="14" height="14" fill="#b26922"/><rect x="236" y="454" width="14" height="14" fill="#b26923"/><rect x="250" y="454" width="14" height="14" fill="#b16a23"/><rect x="264" y="454" width="14" height="14" fill="#b16c23"/><rect x="278" y="454" width="14" height="14" fill="#b16e24"/><rect x="292" y="454" width="14" height="14" fill="#b17024"/><rect x="306" y="454" width="14" height="14" fill="#b17325"/><rect x="320" y="454" width="14" height="14" fill="#b17625"/><rect x="334" y="454" width="14" height="14" fill="#b17825"/><rect x="348" y="454" width="14" height="14" fill="#b07a25"/><rect x="362" y="454" width="14" height="14" fill="#b07c26"/><rect x="376" y="454" width="14" height="14" fill="#b07e26"/><rect x="390" y="454" width="14" height="14" fill="#b08026"/><rect x="404" y="454" width="14" height="14" fill="#af8126"/><rect x="418" y="454" width="14" height="14" fill="#af8226"/><rect x="432" y="454" width="14" height="14" fill="#ae8426"/><rect x="446" y="454" width="14" height="14" fill="#ae8526"/><rect x="460" y="454" width="14" height="14" fill="#ad8626"/><rect x="474" y="454" width="14" height="14" fill="#ad8726"/><rect x="488" y="454" width="14" height="14" fill="#ac8926"/><rect x="502" y="454" width="14" height="14" fill="#ab8b27"/><rect x="516" y="454" width="14" height="14" fill="#aa8d27"/><rect x="530" y="454" width="14" height="14" fill="#a98f27"/><rect x="544" y="454" width="14" height="14" fill="#a89128"/><rect x="558" y="454" width="14" height="14" fill="#a79328"/><rect x="572" y="454" width="14" height="14" fill="#a59629"/><rect x="586" y="454" width="14" height="14" fill="#a4982a"/><rect x="600" y="454" width="14" height="14" fill="#a2992a"/><rect x="614" y="454" width="14" height="14" fill="#a09a2b"/><rect x="628" y="454" width="14" height="14" fill="#9e9b2c"/><rect x="642" y="454" width="14" height="14" fill="#9c9c2d"/><rect x="656" y="454" width="14" height="14" fill="#9a9c2f"/><rect x="670" y="454" width="14" height="14" fill="#989c30"/><rect x="684" y="454" width="14" height="14" fill="#969c31"/><rect x="698" y="454" width="14" height="14" fill="#939c33"/><rect x="712" y="454" width="14" height="14" fill="#919c34"/><rect x="726" y="454" width="14" height="14" fill="#8e9b36"/><rect x="740" y="454" width="14" height="14" fill="#8c9b37"/><rect x="754" y="454" width="14" height="14" fill="#8a9a39"/><rect x="768" y="454" width="14" height="14" fill="#879a3b"/><rect x="782" y="454" width="14" height="14" fill="#85993c"/><rect x="12" y="468" width="14" height="14" fill="#57608b"/><rect x="26" y="468" width="14" height="14" fill="#586689"/><rect x="40" y="468" width="14" height="14" fill="#5d7380"/><rect x="54" y="468" width="14" height="14" fill="#688a6c"/><rect x="68" y="468" width="14" height="14" fill="#7da44e"/><rect x="82" y="468" width="14" height="14" fill="#95b82e"/><rect x="96" y="468" width="14" height="14" fill="#9ebc24"/><rect x="110" y="468" width="14" height="14" fill="#aab723"/><rect x="124" y="468" width="14" height="14" fill="#aab324"/><rect x="138" y="468" width="14" height="14" fill="#aaa927"/><rect x="152" y="468" width="14" height="14" fill="#ab9b28"/><rect x="166" y="468" width="14" height="14" fill="#ad8b27"/><rect x="180" y="468" width="14" height="14" fill="#af7e26"/><rect x="194" y="468" width="14" height="14" fill="#af7626"/><rect x="208" y="468" width="14" height="14" fill="#af7225"/><rect x="222" y="468" width="14" height="14" fill="#af7025"/><rect x="236" y="468" width="14" height="14" fill="#ae6f26"/><rect x="250" y="468" width="14" height="14" fill="#ae6f26"/><rect x="264" y="468" width="14" height="14" fill="#ae7026"/><rect x="278" y="468" width="14" height="14" fill="#ae7126"/><rect x="292" y="468" width="14" height="14" fill="#ae7326"/><rect x="306" y="468" width="14" height="14" fill="#ae7526"/><rect x="320" y="468" width="14" height="14" fill="#ae7726"/><rect x="334" y="468" width="14" height="14" fill="#ae7927"/><rect x="348" y="468" width="14" height="14" fill="#ae7b27"/><rect x="362" y="468" width="14" height="14" fill="#ae7d27"/><rect x="376" y="468" width="14" height="14" fill="#ae7f27"/><rect x="390" y="468" width="14" height="14" fill="#ad8027"/><rect x="404" y="468" width="14" height="14" fill="#ad8227"/><rect x="418" y="468" width="14" height="14" fill="#ac8327"/><rect x="432" y="468" width="14" height="14" fill="#ac8427"/><rect x="446" y="468" width="14" height="14" fill="#ab8627"/><rect x="460" y="468" width="14" height="14" fill="#ab8727"/><rect x="474" y="468" width="14" height="14" fill="#aa8828"/><rect x="488" y="468" width="14" height="14" fill="#aa8a28"/><rect x="502" y="468" width="14" height="14" fill="#a98b28"/><rect x="516" y="468" width="14" height="14" fill="#a88d28"/><rect x="530" y="468" width="14" height="14" fill="#a78f29"/><rect x="544" y="468" width="14" height="14" fill="#a69129"/><rect x="558" y="468" width="14" height="14" fill="#a4932a"/><rect x="572" y="468" width="14" height="14" fill="#a3952a"/><rect x="586" y="468" width="14" height="14" fill="#a2962b"/><rect x="600" y="468" width="14" height="14" fill="#a0982c"/><rect x="614" y="468" width="14" height="14" fill="#9e992d"/><rect x="628" y="468" width="14" height="14" fill="#9d9a2d"/><rect x="642" y="468" width="14" height="14" fill="#9b9a2e"/><rect x="656" y="468" width="14" height="14" fill="#999b30"/><rect x="670" y="468" width="14" height="14" fill="#979b31"/><rect x="684" y="468" width="14" height="14" fill="#959b32"/><rect x="698" y="468" width="14" height="14" fill="#929b33"/><rect x="712" y="468" width="14" height="14" fill="#909b35"/><rect x="726" y="468" width="14" height="14" fill="#8e9a36"/><rect x="740" y="468" width="14" height="14" fill="#8c9a38"/><rect x="754" y="468" width="14" height="14" fill="#899a39"/><rect x="768" y="468" width="14" height="14" fill="#87993b"/><rect x="782" y="468" width="14" height="14" fill="#85993c"/><rect x="12" y="482" width="14" height="14" fill="#5f6c7e"/><rect x="26" y="482" width="14" height="14" fill="#637478"/><rect x="40" y="482" width="14" height="14" fill="#6a816d"/><rect x="54" y="482" width="14" height="14" fill="#779459"/><rect x="68" y="482" width="14" height="14" fill="#89a93f"/><rect x="82" y="482" width="14" height="14" fill="#99b829"/><rect x="96" y="482" width="14" height="14" fill="#9ebb24"/><rect x="110" y="482" width="14" height="14" fill="#a2b626"/><rect x="124" y="482" width="14" height="14" fill="#a5af28"/><rect x="138" y="482" width="14" height="14" fill="#a5a62a"/><rect x="152" y="482" width="14" height="14" fill="#a69b2b"/><rect x="166" y="482" width="14" height="14" fill="#a88f2b"/><rect x="180" y="482" width="14" height="14" fill="#a9852a"/><rect x="194" y="482" width="14" height="14" fill="#aa7d29"/><rect x="208" y="482" width="14" height="14" fill="#ab7829"/><rect x="222" y="482" width="14" height="14" fill="#ab7528"/><rect x="236" y="482" width="14" height="14" fill="#ab7428"/><rect x="250" y="482" width="14" height="14" fill="#ab7328"/><rect x="264" y="482" width="14" height="14" fill="#ab7328"/><rect x="278" y="482" width="14" height="14" fill="#ab7428"/><rect x="292" y="482" width="14" height="14" fill="#ab7628"/><rect x="306" y="482" width="14" height="14" fill="#ac7728"/><rect x="320" y="482" width="14" height="14" fill="#ac7928"/><rect x="334" y="482" width="14" height="14" fill="#ac7b28"/><rect x="348" y="482" width="14" height="14" fill="#ac7c28"/><rect x="362" y="482" width="14" height="14" fill="#ac7e28"/><rect x="376" y="482" width="14" height="14" fill="#ab8028"/><rect x="390" y="482" width="14" height="14" fill="#ab8128"/><rect x="404" y="482" width="14" height="14" fill="#ab8228"/><rect x="418" y="482" width="14" height="14" fill="#aa8428"/><rect x="432" y="482" width="14" height="14" fill="#aa8529"/><rect x="446" y="482" width="14" height="14" fill="#a98629"/><rect x="460" y="482" width="14" height="14" fill="#a98729"/><rect x="474" y="482" width="14" height="14" fill="#a88929"/><rect x="488" y="482" width="14" height="14" fill="#a78a29"/><rect x="502" y="482" width="14" height="14" fill="#a78c29"/><rect x="516" y="482" width="14" height="14" fill="#a68d2a"/><rect x="530" y="482" width="14" height="14" fill="#a58f2a"/><rect x="544" y="482" width="14" height="14" fill="#a4902a"/><rect x="558" y="482" width="14" height="14" fill="#a2922b"/><rect x="572" y="482" width="14" height="14" fill="#a1942c"/><rect x="586" y="482" width="14" height="14" fill="#a0952c"/><rect x="600" y="482" width="14" height="14" fill="#9e962d"/><rect x="614" y="482" width="14" height="14" fill="#9d972e"/><rect x="628" y="482" width="14" height="14" fill="#9b982f"/><rect x="642" y="482" width="14" height="14" fill="#99992f"/><rect x="656" y="482" width="14" height="14" fill="#979931"/><rect x="670" y="482" width="14" height="14" fill="#969a32"/><rect x="684" y="482" width="14" height="14" fill="#949a33"/><rect x="698" y="482" width="14" height="14" fill="#929a34"/><rect x="712" y="482" width="14" height="14" fill="#909a35"/><rect x="726" y="482" width="14" height="14" fill="#8d9a37"/><rect x="740" y="482" width="14" height="14" fill="#8b9938"/><rect x="754" y="482" width="14" height="14" fill="#899939"/><rect x="768" y="482" width="14" height="14" fill="#87993b"/><rect x="782" y="482" width="14" height="14" fill="#86983c"/><rect x="12" y="496" width="14" height="14" fill="#677573"/><rect x="26" y="496" width="14" height="14" fill="#6b7d6c"/><rect x="40" y="496" width="14" height="14" fill="#728961"/><rect x="54" y="496" width="14" height="14" fill="#7d9752"/><rect x="68" y="496" width="14" height="14" fill="#8aa640"/><rect x="82" y="496" width="14" height="14" fill="#95b031"/><rect x="96" y="496" width="14" height="14" fill="#9ab32c"/><rect x="110" y="496" width="14" height="14" fill="#9db02c"/><rect x="124" y="496" width="14" height="14" fill="#9faa2d"/><rect x="138" y="496" width="14" height="14" fill="#a0a22e"/><rect x="152" y="496" width="14" height="14" fill="#a29a2e"/><rect x="166" y="496" width="14" height="14" fill="#a3902e"/><rect x="180" y="496" width="14" height="14" fill="#a5882d"/><rect x="194" y="496" width="14" height="14" fill="#a6822c"/><rect x="208" y="496" width="14" height="14" fill="#a77d2c"/><rect x="222" y="496" width="14" height="14" fill="#a87a2b"/><rect x="236" y="496" width="14" height="14" fill="#a8782b"/><rect x="250" y="496" width="14" height="14" fill="#a8772a"/><rect x="264" y="496" width="14" height="14" fill="#a9772a"/><rect x="278" y="496" width="14" height="14" fill="#a9772a"/><rect x="292" y="496" width="14" height="14" fill="#a9782a"/><rect x="306" y="496" width="14" height="14" fill="#a9792a"/><rect x="320" y="496" width="14" height="14" fill="#a97a29"/><rect x="334" y="496" width="14" height="14" fill="#a97c29"/><rect x="348" y="496" width="14" height="14" fill="#a97d29"/><rect x="362" y="496" width="14" height="14" fill="#a97f29"/><rect x="376" y="496" width="14" height="14" fill="#a98029"/><rect x="390" y="496" width="14" height="14" fill="#a98229"/><rect x="404" y="496" width="14" height="14" fill="#a9832a"/><rect x="418" y="496" width="14" height="14" fill="#a8842a"/><rect x="432" y="496" width="14" height="14" fill="#a8852a"/><rect x="446" y="496" width="14" height="14" fill="#a7872a"/><rect x="460" y="496" width="14" height="14" fill="#a7882a"/><rect x="474" y="496" width="14" height="14" fill="#a6892a"/><rect x="488" y="496" width="14" height="14" fill="#a58a2a"/><rect x="502" y="496" width="14" height="14" fill="#a58c2a"/><rect x="516" y="496" width="14" height="14" fill="#a48d2b"/><rect x="530" y="496" width="14" height="14" fill="#a38f2b"/><rect x="544" y="496" width="14" height="14" fill="#a2902c"/><rect x="558" y="496" width="14" height="14" fill="#a1922c"/><rect x="572" y="496" width="14" height="14" fill="#9f932d"/><rect x="586" y="496" width="14" height="14" fill="#9e942d"/><rect x="600" y="496" width="14" height="14" fill="#9d952e"/><rect x="614" y="496" width="14" height="14" fill="#9b962f"/><rect x="628" y="496" width="14" height="14" fill="#9a9730"/><rect x="642" y="496" width="14" height="14" fill="#989830"/><rect x="656" y="496" width="14" height="14" fill="#969831"/><rect x="670" y="496" width="14" height="14" fill="#959932"/><rect x="684" y="496" width="14" height="14" fill="#939934"/><rect x="698" y="496" width="14" height="14" fill="#919935"/><rect x="712" y="496" width="14" height="14" fill="#8f9936"/><rect x="726" y="496" width="14" height="14" fill="#8d9937"/><rect x="740" y="496" width="14" height="14" fill="#8b9838"/><rect x="754" y="496" width="14" height="14" fill="#89983a"/><rect x="768" y="496" width="14" height="14" fill="#88983b"/><rect x="782" y="496" width="14" height="14" fill="#86983c"/></g><rect x="38.0" y="374.8" width="1" height="1" fill="#000" opacity="0.6"/><rect x="27.9" y="399.8" width="1.5" height="1.5" fill="#000" opacity="0.6"/><rect x="48.3" y="424.1" width="1" height="1" fill="#000" opacity="0.6"/><rect x="26.5" y="393.2" width="1" height="1" fill="#000" opacity="0.6"/><rect x="34.6" y="400.8" width="1" height="1" fill="#000" opacity="0.6"/><rect x="58.1" y="373.0" width="1" height="1" fill="#000" opacity="0.6"/><rect x="50.2" y="402.9" width="1" height="1" fill="#000" opacity="0.6"/><rect x="48.1" y="390.8" width="1" height="1" fill="#000" opacity="0.6"/><rect x="26.9" y="420.8" width="1.5" height="1.5" fill="#000" opacity="0.6"/><rect x="41.8" y="400.1" width="1.5" height="1.5" fill="#000" opacity="0.6"/><rect x="47.4" y="409.3" width="1" height="1" fill="#000" opacity="0.6"/><rect x="48.3" y="406.5" width="1.5" height="1.5" fill="#000" opacity="0.6"/><rect x="28.9" y="411.3" width="1" height="1" fill="#000" opacity="0.6"/><rect x="49.8" y="397.3" width="2" height="2" fill="#000" opacity="0.6"/><rect x="56.1" y="395.3" width="2" height="2" fill="#000" opacity="0.6"/><rect x="39.5" y="381.1" width="1" height="1" fill="#000" opacity="0.6"/><rect x="53.0" y="380.9" width="1.5" height="1.5" fill="#000" opacity="0.6"/><rect x="46.0" y="421.9" width="2" height="2" fill="#000" opacity="0.6"/><rect x="36.5" y="428.7" width="1" height="1" fill="#000" opacity="0.6"/><rect x="45.5" y="375.7" width="1.5" height="1.5" fill="#000" opacity="0.6"/><rect x="31.1" y="396.8" width="1" height="1" fill="#000" opacity="0.6"/><rect x="63.5" y="370.0" width="1.5" height="1.5" fill="#000" opacity="0.6"/><rect x="38.6" y="387.8" width="2" height="2" fill="#000" opacity="0.6"/><rect x="48.2" y="394.7" width="1" height="1" fill="#000" opacity="0.6"/><rect x="62.8" y="395.8" width="1" height="1" fill="#000" opacity="0.6"/><rect x="27.4" y="410.6" width="2" height="2" fill="#000" opacity="0.6"/><rect x="36.4" y="390.1" width="1.5" height="1.5" fill="#000" opacity="0.6"/><rect x="25.9" y="395.0" width="1" height="1" fill="#000" opacity="0.6"/><rect x="49.4" y="397.1" width="1" height="1" fill="#000" opacity="0.6"/><rect x="55.7" y="373.4" width="1" height="1" fill="#000" opacity="0.6"/><rect x="40.9" y="424.6" width="2" height="2" fill="#000" opacity="0.6"/><rect x="28.2" y="394.2" width="1.5" height="1.5" fill="#000" opacity="0.6"/><rect x="60.3" y="418.3" width="1.5" height="1.5" fill="#000" opacity="0.6"/><rect x="53.3" y="429.1" width="2" height="2" fill="#000" opacity="0.6"/><rect x="63.3" y="374.8" width="1" height="1" fill="#000" opacity="0.6"/><rect x="31.1" y="407.8" width="1" height="1" fill="#000" opacity="0.6"/><rect x="44.4" y="403.3" width="1.5" height="1.5" fill="#000" opacity="0.6"/><rect x="36.3" y="374.5" width="1.5" height="1.5" fill="#000" opacity="0.6"/><rect x="49.4" y="385.7" width="1" height="1" fill="#000" opacity="0.6"/><rect x="52.6" y="398.5" width="1" height="1" fill="#000" opacity="0.6"/><rect x="43.3" y="421.6" width="2" height="2" fill="#000" opacity="0.6"/><rect x="40.9" y="390.6" width="2" height="2" fill="#000" opacity="0.6"/><rect x="50.4" y="369.0" width="1" height="1" fill="#000" opacity="0.6"/><rect x="64.4" y="393.6" width="1" height="1" fill="#000" opacity="0.6"/><rect x="38.6" y="368.4" width="1" height="1" fill="#000" opacity="0.6"/><rect x="47.7" y="399.9" width="1.5" height="1.5" fill="#000" opacity="0.6"/><rect x="49.5" y="369.6" width="1" height="1" fill="#000" opacity="0.6"/><rect x="49.6" y="374.7" width="1.5" height="1.5" fill="#000" opacity="0.6"/><rect x="63.2" y="404.1" width="2" height="2" fill="#000" opacity="0.6"/><rect x="29.9" y="420.2" width="2" height="2" fill="#000" opacity="0.6"/><rect x="44.2" y="385.3" width="1" height="1" fill="#000" opacity="0.6"/><rect x="29.1" y="387.3" width="1.5" height="1.5" fill="#000" opacity="0.6"/><rect x="44.1" y="410.0" width="1" height="1" fill="#000" opacity="0.6"/><rect x="33.2" y="426.9" width="1.5" height="1.5" fill="#000" opacity="0.6"/><rect x="30.9" y="400.3" width="1" height="1" fill="#000" opacity="0.6"/><rect x="55.3" y="384.4" width="1" height="1" fill="#000" opacity="0.6"/><rect x="52.8" y="382.0" width="1.5" height="1.5" fill="#000" opacity="0.6"/><rect x="61.3" y="388.1" width="1" height="1" fill="#000" opacity="0.6"/><rect x="46.3" y="415.6" width="1.5" height="1.5" fill="#000" opacity="0.6"/><rect x="50.5" y="404.9" width="1" height="1" fill="#000" opacity="0.6"/><rect x="57.2" y="418.2" width="1" height="1" fill="#000" opacity="0.6"/><rect x="33.0" y="397.0" width="1" height="1" fill="#000" opacity="0.6"/><rect x="64.6" y="416.4" width="2" height="2" fill="#000" opacity="0.6"/><rect x="35.4" y="410.0" width="1.5" height="1.5" fill="#000" opacity="0.6"/><rect x="42.9" y="425.9" width="1.5" height="1.5" fill="#000" opacity="0.6"/><rect x="63.2" y="388.7" width="1" height="1" fill="#000" opacity="0.6"/><rect x="29.1" y="395.6" width="1.5" height="1.5" fill="#000" opacity="0.6"/><rect x="33.2" y="405.6" width="1" height="1" fill="#000" opacity="0.6"/><rect x="44.2" y="407.4" width="1" height="1" fill="#000" opacity="0.6"/><rect x="58.4" y="372.8" width="2" height="2" fill="#000" opacity="0.6"/><rect x="56.3" y="413.8" width="2" height="2" fill="#000" opacity="0.6"/><rect x="60.6" y="393.2" width="1.5" height="1.5" fill="#000" opacity="0.6"/><rect x="28.5" y="426.5" width="2" height="2" fill="#000" opacity="0.6"/><rect x="43.5" y="413.3" width="1" height="1" fill="#000" opacity="0.6"/><rect x="54.0" y="376.1" width="1" height="1" fill="#000" opacity="0.6"/><rect x="26.1" y="403.4" width="2" height="2" fill="#000" opacity="0.6"/><rect x="57.3" y="374.5" width="2" height="2" fill="#000" opacity="0.6"/><rect x="51.3" y="387.8" width="1" height="1" fill="#000" opacity="0.6"/><rect x="25.9" y="417.0" width="1" height="1" fill="#000" opacity="0.6"/><rect x="46.1" y="425.7" width="2" height="2" fill="#000" opacity="0.6"/><rect x="64.5" y="377.7" width="1" height="1" fill="#000" opacity="0.6"/><rect x="26.1" y="378.8" width="1" height="1" fill="#000" opacity="0.6"/><rect x="55.5" y="386.2" width="2" height="2" fill="#000" opacity="0.6"/><rect x="58.4" y="369.0" width="1.5" height="1.5" fill="#000" opacity="0.6"/><rect x="60.9" y="408.1" width="2" height="2" fill="#000" opacity="0.6"/><rect x="58.1" y="422.1" width="1" height="1" fill="#000" opacity="0.6"/><rect x="46.3" y="399.0" width="1" height="1" fill="#000" opacity="0.6"/><rect x="59.9" y="415.5" width="1" height="1" fill="#000" opacity="0.6"/><rect x="56.0" y="374.7" width="1" height="1" fill="#000" opacity="0.6"/><rect x="43.9" y="412.1" width="1" height="1" fill="#000" opacity="0.6"/><rect x="38.0" y="398.7" width="2" height="2" fill="#000" opacity="0.6"/><rect x="56.4" y="371.9" width="1" height="1" fill="#000" opacity="0.6"/><rect x="34.9" y="383.0" width="1" height="1" fill="#000" opacity="0.6"/><rect x="45.3" y="401.5" width="1" height="1" fill="#000" opacity="0.6"/><rect x="42.7" y="404.8" width="1" height="1" fill="#000" opacity="0.6"/><rect x="52.7" y="394.4" width="2" height="2" fill="#000" opacity="0.6"/><rect x="45.3" y="381.1" width="1.5" height="1.5" fill="#000" opacity="0.6"/><rect x="61.9" y="423.0" width="1" height="1" fill="#000" opacity="0.6"/><rect x="58.6" y="373.9" width="1" height="1" fill="#000" opacity="0.6"/><rect x="40.7" y="385.5" width="1" height="1" fill="#000" opacity="0.6"/><rect x="42.1" y="378.8" width="1.5" height="1.5" fill="#000" opacity="0.6"/><rect x="56.4" y="423.3" width="1" height="1" fill="#000" opacity="0.6"/><rect x="62.6" y="406.8" width="1.5" height="1.5" fill="#000" opacity="0.6"/><rect x="30.7" y="422.4" width="2" height="2" fill="#000" opacity="0.6"/><rect x="33.8" y="426.9" width="2" height="2" fill="#000" opacity="0.6"/><rect x="60.4" y="375.6" width="1" height="1" fill="#000" opacity="0.6"/><rect x="31.5" y="393.0" width="2" height="2" fill="#000" opacity="0.6"/><rect x="38.6" y="377.7" width="1.5" height="1.5" fill="#000" opacity="0.6"/><rect x="28.7" y="388.8" width="1.5" height="1.5" fill="#000" opacity="0.6"/><rect x="47.2" y="393.6" width="1" height="1" fill="#000" opacity="0.6"/><rect x="40.4" y="398.6" width="1.5" height="1.5" fill="#000" opacity="0.6"/><rect x="45.5" y="369.2" width="1" height="1" fill="#000" opacity="0.6"/><rect x="63.9" y="371.8" width="1.5" height="1.5" fill="#000" opacity="0.6"/><rect x="35.9" y="423.9" width="1" height="1" fill="#000" opacity="0.6"/><rect x="35.8" y="373.4" width="2" height="2" fill="#000" opacity="0.6"/><rect x="59.0" y="408.9" width="1.5" height="1.5" fill="#000" opacity="0.6"/><rect x="41.2" y="399.9" width="2" height="2" fill="#000" opacity="0.6"/><rect x="53.0" y="370.8" width="1" height="1" fill="#000" opacity="0.6"/><rect x="57.0" y="376.9" width="1" height="1" fill="#000" opacity="0.6"/><rect x="35.8" y="366.1" width="1" height="1" fill="#000" opacity="0.6"/><rect x="57.1" y="370.4" width="1" height="1" fill="#000" opacity="0.6"/><rect x="27.7" y="421.1" width="2" height="2" fill="#000" opacity="0.6"/><rect x="25.5" y="429.6" width="2" height="2" fill="#000" opacity="0.6"/><rect x="62.1" y="382.4" width="1" height="1" fill="#000" opacity="0.6"/><rect x="26.7" y="411.1" width="1" height="1" fill="#000" opacity="0.6"/><rect x="63.8" y="382.0" width="1" height="1" fill="#000" opacity="0.6"/><rect x="33.1" y="385.3" width="1.5" height="1.5" fill="#000" opacity="0.6"/><rect x="46.2" y="378.4" width="2" height="2" fill="#000" opacity="0.6"/><rect x="45.0" y="376.6" width="1.5" height="1.5" fill="#000" opacity="0.6"/><rect x="57.1" y="429.6" width="1" height="1" fill="#000" opacity="0.6"/><rect x="25.6" y="412.7" width="1" height="1" fill="#000" opacity="0.6"/><rect x="45.6" y="381.0" width="2" height="2" fill="#000" opacity="0.6"/><rect x="29.3" y="418.2" width="2" height="2" fill="#000" opacity="0.6"/><rect x="51.3" y="400.5" width="2" height="2" fill="#000" opacity="0.6"/><rect x="63.8" y="385.0" width="1" height="1" fill="#000" opacity="0.6"/><rect x="64.3" y="387.3" width="1" height="1" fill="#000" opacity="0.6"/><rect x="41.2" y="387.6" width="1" height="1" fill="#000" opacity="0.6"/><rect x="58.5" y="365.9" width="1.5" height="1.5" fill="#000" opacity="0.6"/><rect x="42.2" y="368.6" width="2" height="2" fill="#000" opacity="0.6"/><rect x="59.8" y="408.6" width="1.5" height="1.5" fill="#000" opacity="0.6"/><rect x="49.0" y="410.0" width="1" height="1" fill="#000" opacity="0.6"/><rect x="43.4" y="375.2" width="2" height="2" fill="#000" opacity="0.6"/><rect x="25.1" y="388.7" width="1.5" height="1.5" fill="#000" opacity="0.6"/><rect x="63.9" y="400.6" width="1" height="1" fill="#000" opacity="0.6"/><rect x="26.4" y="422.4" width="1" height="1" fill="#000" opacity="0.6"/><rect x="39.3" y="365.1" width="2" height="2" fill="#000" opacity="0.6"/><rect x="28.4" y="383.1" width="1" height="1" fill="#000" opacity="0.6"/><rect x="34.9" y="415.5" width="1" height="1" fill="#000" opacity="0.6"/><rect x="35.6" y="370.8" width="2" height="2" fill="#000" opacity="0.6"/><rect x="48.5" y="390.6" width="1.5" height="1.5" fill="#000" opacity="0.6"/><rect x="37.2" y="380.1" width="1" height="1" fill="#000" opacity="0.6"/><rect x="51.3" y="411.5" width="2" height="2" fill="#000" opacity="0.6"/><rect x="55.6" y="411.8" width="2" height="2" fill="#000" opacity="0.6"/><rect x="31.0" y="412.1" width="1" height="1" fill="#000" opacity="0.6"/><rect x="26.8" y="419.3" width="2" height="2" fill="#000" opacity="0.6"/><rect x="54.4" y="417.8" width="1" height="1" fill="#000" opacity="0.6"/><rect x="61.4" y="413.9" width="1" height="1" fill="#000" opacity="0.6"/><rect x="58.1" y="403.0" width="1" height="1" fill="#000" opacity="0.6"/><rect x="28.4" y="367.7" width="1.5" height="1.5" fill="#000" opacity="0.6"/><rect x="63.4" y="389.5" width="2" height="2" fill="#000" opacity="0.6"/><rect x="76.8" y="392.0" width="1" height="1" fill="#000" opacity="0.7"/><rect x="74.7" y="370.1" width="1" height="1" fill="#000" opacity="0.7"/><rect x="82.4" y="387.6" width="1" height="1" fill="#000" opacity="0.7"/><rect x="79.8" y="372.3" width="2" height="2" fill="#000" opacity="0.7"/><rect x="67.6" y="372.6" width="1.5" height="1.5" fill="#000" opacity="0.7"/><rect x="67.0" y="396.5" width="1" height="1" fill="#000" opacity="0.7"/><rect x="82.2" y="404.2" width="2" height="2" fill="#000" opacity="0.7"/><rect x="85.4" y="372.7" width="1.5" height="1.5" fill="#000" opacity="0.7"/><rect x="83.0" y="391.6" width="1" height="1" fill="#000" opacity="0.7"/><rect x="62.3" y="375.2" width="1.5" height="1.5" fill="#000" opacity="0.7"/><rect x="79.5" y="394.3" width="1" height="1" fill="#000" opacity="0.7"/><rect x="60.4" y="372.1" width="1.5" height="1.5" fill="#000" opacity="0.7"/><rect x="89.2" y="373.5" width="1" height="1" fill="#000" opacity="0.7"/><rect x="80.3" y="380.2" width="1.5" height="1.5" fill="#000" opacity="0.7"/><rect x="73.9" y="386.3" width="1" height="1" fill="#000" opacity="0.7"/><rect x="89.8" y="389.2" width="1.5" height="1.5" fill="#000" opacity="0.7"/><rect x="89.3" y="402.8" width="1" height="1" fill="#000" opacity="0.7"/><rect x="68.7" y="372.7" width="2" height="2" fill="#000" opacity="0.7"/><rect x="89.8" y="383.5" width="1" height="1" fill="#000" opacity="0.7"/><rect x="62.2" y="373.2" width="1.5" height="1.5" fill="#000" opacity="0.7"/><rect x="88.6" y="374.6" width="1.5" height="1.5" fill="#000" opacity="0.7"/><rect x="86.6" y="394.6" width="1" height="1" fill="#000" opacity="0.7"/><rect x="74.9" y="400.7" width="2" height="2" fill="#000" opacity="0.7"/><rect x="60.7" y="370.1" width="2" height="2" fill="#000" opacity="0.7"/><rect x="80.4" y="384.2" width="1" height="1" fill="#000" opacity="0.7"/><rect x="72.5" y="383.2" width="1" height="1" fill="#000" opacity="0.7"/><rect x="85.2" y="370.1" width="1.5" height="1.5" fill="#000" opacity="0.7"/><rect x="85.2" y="374.2" width="1" height="1" fill="#000" opacity="0.7"/><rect x="81.4" y="401.6" width="1.5" height="1.5" fill="#000" opacity="0.7"/><rect x="67.6" y="372.3" width="2" height="2" fill="#000" opacity="0.7"/><rect x="90.0" y="390.6" width="1.5" height="1.5" fill="#000" opacity="0.7"/><rect x="87.8" y="396.4" width="1" height="1" fill="#000" opacity="0.7"/><rect x="68.4" y="371.8" width="1.5" height="1.5" fill="#000" opacity="0.7"/><rect x="79.0" y="375.2" width="1.5" height="1.5" fill="#000" opacity="0.7"/><rect x="73.1" y="381.0" width="1.5" height="1.5" fill="#000" opacity="0.7"/><rect x="83.6" y="385.0" width="1" height="1" fill="#000" opacity="0.7"/><rect x="84.4" y="392.1" width="1" height="1" fill="#000" opacity="0.7"/><rect x="81.6" y="371.7" width="2" height="2" fill="#000" opacity="0.7"/><rect x="73.5" y="396.3" width="1.5" height="1.5" fill="#000" opacity="0.7"/><rect x="74.6" y="401.9" width="1" height="1" fill="#000" opacity="0.7"/><rect x="65.1" y="384.5" width="1.5" height="1.5" fill="#000" opacity="0.7"/><rect x="68.9" y="395.9" width="1.5" height="1.5" fill="#000" opacity="0.7"/><rect x="72.2" y="378.4" width="2" height="2" fill="#000" opacity="0.7"/><rect x="76.7" y="383.8" width="1" height="1" fill="#000" opacity="0.7"/><rect x="79.3" y="372.6" width="2" height="2" fill="#000" opacity="0.7"/><rect x="76.5" y="385.9" width="1.5" height="1.5" fill="#000" opacity="0.7"/><rect x="89.9" y="385.7" width="1" height="1" fill="#000" opacity="0.7"/><rect x="76.4" y="378.5" width="1" height="1" fill="#000" opacity="0.7"/><rect x="70.3" y="373.2" width="1" height="1" fill="#000" opacity="0.7"/><rect x="71.0" y="398.3" width="1" height="1" fill="#000" opacity="0.7"/><rect x="117.7" y="346.2" width="2" height="2" fill="#000" opacity="0.8"/><rect x="107.7" y="346.2" width="1" height="1" fill="#000" opacity="0.8"/><rect x="107.5" y="340.1" width="1" height="1" fill="#000" opacity="0.8"/><rect x="110.0" y="343.6" width="1.5" height="1.5" fill="#000" opacity="0.8"/><rect x="102.5" y="342.6" width="1" height="1" fill="#000" opacity="0.8"/><rect x="101.9" y="348.5" width="2" height="2" fill="#000" opacity="0.8"/><rect x="108.0" y="341.7" width="1.5" height="1.5" fill="#000" opacity="0.8"/><rect x="117.0" y="348.1" width="1" height="1" fill="#000" opacity="0.8"/><rect x="102.5" y="341.4" width="2" height="2" fill="#000" opacity="0.8"/><rect x="119.4" y="342.3" width="1" height="1" fill="#000" opacity="0.8"/><rect x="107.8" y="348.9" width="2" height="2" fill="#000" opacity="0.8"/><rect x="119.4" y="338.7" width="1" height="1" fill="#000" opacity="0.8"/><rect x="104.5" y="337.3" width="1" height="1" fill="#000" opacity="0.8"/><rect x="118.8" y="345.8" width="2" height="2" fill="#000" opacity="0.8"/><rect x="101.7" y="346.7" width="1" height="1" fill="#000" opacity="0.8"/><rect x="115.6" y="338.5" width="1" height="1" fill="#000" opacity="0.8"/><rect x="112.9" y="339.6" width="1" height="1" fill="#000" opacity="0.8"/><rect x="112.5" y="342.9" width="2" height="2" fill="#000" opacity="0.8"/><rect x="114.0" y="336.7" width="1" height="1" fill="#000" opacity="0.8"/><rect x="106.0" y="349.2" width="1" height="1" fill="#000" opacity="0.8"/><rect x="142.8" y="320.7" width="1" height="1" fill="#000" opacity="0.8"/><rect x="135.2" y="321.6" width="2" height="2" fill="#000" opacity="0.8"/><rect x="140.6" y="321.8" width="1" height="1" fill="#000" opacity="0.8"/><rect x="144.5" y="320.8" width="1" height="1" fill="#000" opacity="0.8"/><rect x="135.6" y="322.9" width="1.5" height="1.5" fill="#000" opacity="0.8"/><rect x="136.1" y="320.3" width="2" height="2" fill="#000" opacity="0.8"/><rect x="136.6" y="320.7" width="2" height="2" fill="#000" opacity="0.8"/><rect x="153.5" y="320.7" width="1" height="1" fill="#000" opacity="0.8"/><rect x="148.9" y="326.6" width="1.5" height="1.5" fill="#000" opacity="0.8"/><rect x="148.7" y="320.4" width="1.5" height="1.5" fill="#000" opacity="0.8"/><rect x="149.8" y="324.1" width="1" height="1" fill="#000" opacity="0.8"/><rect x="144.9" y="320.4" width="1" height="1" fill="#000" opacity="0.8"/><rect x="139.6" y="320.7" width="1.5" height="1.5" fill="#000" opacity="0.8"/><rect x="137.2" y="325.5" width="1" height="1" fill="#000" opacity="0.8"/><rect x="152.9" y="323.8" width="1" height="1" fill="#000" opacity="0.8"/><rect x="246.9" y="384.4" width="2" height="2" fill="#000" opacity="0.55"/><rect x="193.3" y="380.7" width="1" height="1" fill="#000" opacity="0.55"/><rect x="214.9" y="401.3" width="1" height="1" fill="#000" opacity="0.55"/><rect x="213.6" y="406.9" width="1.5" height="1.5" fill="#000" opacity="0.55"/><rect x="234.0" y="409.9" width="1" height="1" fill="#000" opacity="0.55"/><rect x="209.8" y="385.6" width="2" height="2" fill="#000" opacity="0.55"/><rect x="191.9" y="399.9" width="2" height="2" fill="#000" opacity="0.55"/><rect x="240.3" y="409.5" width="2" height="2" fill="#000" opacity="0.55"/><rect x="200.2" y="380.1" width="1.5" height="1.5" fill="#000" opacity="0.55"/><rect x="194.8" y="392.6" width="1" height="1" fill="#000" opacity="0.55"/><rect x="223.7" y="402.8" width="2" height="2" fill="#000" opacity="0.55"/><rect x="211.4" y="404.6" width="2" height="2" fill="#000" opacity="0.55"/><rect x="195.3" y="401.2" width="1" height="1" fill="#000" opacity="0.55"/><rect x="212.4" y="407.6" width="1" height="1" fill="#000" opacity="0.55"/><rect x="209.4" y="402.1" width="2" height="2" fill="#000" opacity="0.55"/><rect x="191.8" y="392.3" width="2" height="2" fill="#000" opacity="0.55"/><rect x="192.4" y="381.0" width="1" height="1" fill="#000" opacity="0.55"/><rect x="238.2" y="381.9" width="1" height="1" fill="#000" opacity="0.55"/><rect x="234.8" y="407.0" width="1.5" height="1.5" fill="#000" opacity="0.55"/><rect x="211.8" y="390.0" width="1" height="1" fill="#000" opacity="0.55"/><rect x="205.7" y="401.5" width="1.5" height="1.5" fill="#000" opacity="0.55"/><rect x="245.5" y="388.9" width="1" height="1" fill="#000" opacity="0.55"/><rect x="191.5" y="387.0" width="2" height="2" fill="#000" opacity="0.55"/><rect x="232.9" y="394.0" width="2" height="2" fill="#000" opacity="0.55"/><rect x="237.4" y="407.4" width="2" height="2" fill="#000" opacity="0.55"/><rect x="198.0" y="394.9" width="1" height="1" fill="#000" opacity="0.55"/><rect x="238.2" y="402.2" width="1" height="1" fill="#000" opacity="0.55"/><rect x="226.4" y="389.8" width="1.5" height="1.5" fill="#000" opacity="0.55"/><rect x="217.6" y="403.5" width="1" height="1" fill="#000" opacity="0.55"/><rect x="220.7" y="391.8" width="1" height="1" fill="#000" opacity="0.55"/><rect x="204.8" y="381.9" width="1" height="1" fill="#000" opacity="0.55"/><rect x="218.9" y="396.3" width="1" height="1" fill="#000" opacity="0.55"/><rect x="248.8" y="406.5" width="1" height="1" fill="#000" opacity="0.55"/><rect x="205.9" y="382.5" width="1" height="1" fill="#000" opacity="0.55"/><rect x="215.3" y="409.7" width="2" height="2" fill="#000" opacity="0.55"/><rect x="200.4" y="384.0" width="2" height="2" fill="#000" opacity="0.55"/><rect x="227.2" y="400.2" width="1" height="1" fill="#000" opacity="0.55"/><rect x="236.8" y="388.8" width="1.5" height="1.5" fill="#000" opacity="0.55"/><rect x="224.0" y="391.2" width="1.5" height="1.5" fill="#000" opacity="0.55"/><rect x="202.0" y="387.4" width="1" height="1" fill="#000" opacity="0.55"/><rect x="204.1" y="388.4" width="1" height="1" fill="#000" opacity="0.55"/><rect x="209.6" y="391.9" width="1" height="1" fill="#000" opacity="0.55"/><rect x="220.4" y="386.9" width="1" height="1" fill="#000" opacity="0.55"/><rect x="229.2" y="409.7" width="1" height="1" fill="#000" opacity="0.55"/><rect x="190.3" y="406.5" width="1" height="1" fill="#000" opacity="0.55"/><rect x="240.4" y="407.4" width="1" height="1" fill="#000" opacity="0.55"/><rect x="242.6" y="387.0" width="1" height="1" fill="#000" opacity="0.55"/><rect x="201.4" y="409.2" width="1" height="1" fill="#000" opacity="0.55"/><rect x="245.8" y="391.2" width="1" height="1" fill="#000" opacity="0.55"/><rect x="216.9" y="387.8" width="1" height="1" fill="#000" opacity="0.55"/><rect x="196.3" y="397.9" width="1.5" height="1.5" fill="#000" opacity="0.55"/><rect x="203.1" y="391.1" width="1" height="1" fill="#000" opacity="0.55"/><rect x="192.6" y="410.0" width="1" height="1" fill="#000" opacity="0.55"/><rect x="226.0" y="399.5" width="1" height="1" fill="#000" opacity="0.55"/><rect x="238.9" y="404.6" width="2" height="2" fill="#000" opacity="0.55"/><rect x="230.7" y="385.6" width="1.5" height="1.5" fill="#000" opacity="0.55"/><rect x="194.7" y="380.9" width="2" height="2" fill="#000" opacity="0.55"/><rect x="222.9" y="381.9" width="1" height="1" fill="#000" opacity="0.55"/><rect x="237.8" y="399.9" width="1" height="1" fill="#000" opacity="0.55"/><rect x="228.4" y="382.7" width="1" height="1" fill="#000" opacity="0.55"/><rect x="171.9" y="414.5" width="1.5" height="1.5" fill="#000" opacity="0.5"/><rect x="180.0" y="419.6" width="1" height="1" fill="#000" opacity="0.5"/><rect x="169.4" y="424.8" width="1.5" height="1.5" fill="#000" opacity="0.5"/><rect x="172.4" y="405.6" width="1.5" height="1.5" fill="#000" opacity="0.5"/><rect x="179.3" y="418.7" width="2" height="2" fill="#000" opacity="0.5"/><rect x="166.1" y="405.2" width="1" height="1" fill="#000" opacity="0.5"/><rect x="172.7" y="433.7" width="2" height="2" fill="#000" opacity="0.5"/><rect x="177.3" y="417.8" width="1" height="1" fill="#000" opacity="0.5"/><rect x="163.9" y="406.8" width="1" height="1" fill="#000" opacity="0.5"/><rect x="179.2" y="436.8" width="1" height="1" fill="#000" opacity="0.5"/><rect x="177.2" y="437.5" width="1" height="1" fill="#000" opacity="0.5"/><rect x="164.4" y="414.9" width="1" height="1" fill="#000" opacity="0.5"/><rect x="187.8" y="408.8" width="2" height="2" fill="#000" opacity="0.5"/><rect x="182.6" y="432.7" width="1" height="1" fill="#000" opacity="0.5"/><rect x="169.0" y="434.3" width="1" height="1" fill="#000" opacity="0.5"/><rect x="189.3" y="421.9" width="1" height="1" fill="#000" opacity="0.5"/><rect x="178.2" y="427.3" width="1" height="1" fill="#000" opacity="0.5"/><rect x="187.1" y="426.7" width="1" height="1" fill="#000" opacity="0.5"/><rect x="179.2" y="435.0" width="2" height="2" fill="#000" opacity="0.5"/><rect x="178.4" y="411.9" width="2" height="2" fill="#000" opacity="0.5"/><rect x="165.5" y="412.6" width="2" height="2" fill="#000" opacity="0.5"/><rect x="188.2" y="410.5" width="1.5" height="1.5" fill="#000" opacity="0.5"/><rect x="163.7" y="413.6" width="1" height="1" fill="#000" opacity="0.5"/><rect x="161.2" y="424.7" width="1" height="1" fill="#000" opacity="0.5"/><rect x="180.0" y="416.3" width="2" height="2" fill="#000" opacity="0.5"/><rect x="178.0" y="424.3" width="1.5" height="1.5" fill="#000" opacity="0.5"/><rect x="179.5" y="415.8" width="1" height="1" fill="#000" opacity="0.5"/><rect x="172.8" y="428.1" width="2" height="2" fill="#000" opacity="0.5"/><rect x="175.1" y="411.3" width="1" height="1" fill="#000" opacity="0.5"/><rect x="178.6" y="422.1" width="1" height="1" fill="#000" opacity="0.5"/><rect x="173.4" y="426.7" width="2" height="2" fill="#000" opacity="0.5"/><rect x="185.1" y="433.4" width="2" height="2" fill="#000" opacity="0.5"/><rect x="163.2" y="409.5" width="2" height="2" fill="#000" opacity="0.5"/><rect x="171.0" y="433.1" width="1" height="1" fill="#000" opacity="0.5"/><rect x="161.2" y="409.6" width="1.5" height="1.5" fill="#000" opacity="0.5"/><rect x="183.3" y="422.9" width="1" height="1" fill="#000" opacity="0.5"/><rect x="182.6" y="436.3" width="1" height="1" fill="#000" opacity="0.5"/><rect x="160.8" y="407.3" width="1" height="1" fill="#000" opacity="0.5"/><rect x="165.8" y="439.4" width="2" height="2" fill="#000" opacity="0.5"/><rect x="168.6" y="433.4" width="1" height="1" fill="#000" opacity="0.5"/><rect x="754.3" y="133.0" width="1" height="1" fill="#000" opacity="0.7"/><rect x="723.3" y="123.8" width="1.5" height="1.5" fill="#000" opacity="0.7"/><rect x="727.9" y="137.4" width="1.5" height="1.5" fill="#000" opacity="0.7"/><rect x="765.3" y="126.4" width="1.5" height="1.5" fill="#000" opacity="0.7"/><rect x="745.1" y="138.0" width="1" height="1" fill="#000" opacity="0.7"/><rect x="749.6" y="130.4" width="1" height="1" fill="#000" opacity="0.7"/><rect x="736.0" y="115.9" width="1" height="1" fill="#000" opacity="0.7"/><rect x="740.2" y="130.9" width="1.5" height="1.5" fill="#000" opacity="0.7"/><rect x="754.0" y="137.4" width="1" height="1" fill="#000" opacity="0.7"/><rect x="759.6" y="121.6" width="1" height="1" fill="#000" opacity="0.7"/><rect x="751.8" y="124.0" width="2" height="2" fill="#000" opacity="0.7"/><rect x="747.8" y="129.5" width="1" height="1" fill="#000" opacity="0.7"/><rect x="732.6" y="128.4" width="2" height="2" fill="#000" opacity="0.7"/><rect x="756.9" y="124.3" width="2" height="2" fill="#000" opacity="0.7"/><rect x="769.5" y="129.4" width="1.5" height="1.5" fill="#000" opacity="0.7"/><rect x="736.5" y="117.0" width="1" height="1" fill="#000" opacity="0.7"/><rect x="728.8" y="133.6" width="1" height="1" fill="#000" opacity="0.7"/><rect x="734.8" y="127.9" width="1.5" height="1.5" fill="#000" opacity="0.7"/><rect x="752.0" y="139.6" width="1.5" height="1.5" fill="#000" opacity="0.7"/><rect x="756.7" y="133.7" width="1" height="1" fill="#000" opacity="0.7"/><rect x="727.5" y="130.4" width="2" height="2" fill="#000" opacity="0.7"/><rect x="740.9" y="124.1" width="1" height="1" fill="#000" opacity="0.7"/><rect x="726.6" y="120.7" width="1" height="1" fill="#000" opacity="0.7"/><rect x="721.1" y="115.1" width="1.5" height="1.5" fill="#000" opacity="0.7"/><rect x="735.2" y="128.1" width="1" height="1" fill="#000" opacity="0.7"/><rect x="740.7" y="122.5" width="1" height="1" fill="#000" opacity="0.7"/><rect x="730.2" y="130.6" width="2" height="2" fill="#000" opacity="0.7"/><rect x="727.9" y="115.4" width="1" height="1" fill="#000" opacity="0.7"/><rect x="755.4" y="126.3" width="1" height="1" fill="#000" opacity="0.7"/><rect x="751.9" y="136.8" width="1.5" height="1.5" fill="#000" opacity="0.7"/><rect x="740.1" y="121.6" width="1" height="1" fill="#000" opacity="0.7"/><rect x="722.8" y="135.5" width="1.5" height="1.5" fill="#000" opacity="0.7"/><rect x="749.7" y="129.5" width="2" height="2" fill="#000" opacity="0.7"/><rect x="732.4" y="137.6" width="1" height="1" fill="#000" opacity="0.7"/><rect x="723.1" y="115.6" width="1" height="1" fill="#000" opacity="0.7"/><rect x="731.9" y="116.5" width="1" height="1" fill="#000" opacity="0.7"/><rect x="720.6" y="128.8" width="1" height="1" fill="#000" opacity="0.7"/><rect x="727.1" y="120.0" width="2" height="2" fill="#000" opacity="0.7"/><rect x="760.7" y="119.4" width="1.5" height="1.5" fill="#000" opacity="0.7"/><rect x="723.2" y="130.6" width="2" height="2" fill="#000" opacity="0.7"/><rect x="755.8" y="115.2" width="2" height="2" fill="#000" opacity="0.7"/><rect x="757.3" y="126.6" width="2" height="2" fill="#000" opacity="0.7"/><rect x="728.8" y="139.9" width="1.5" height="1.5" fill="#000" opacity="0.7"/><rect x="731.6" y="116.0" width="1.5" height="1.5" fill="#000" opacity="0.7"/><rect x="764.6" y="138.1" width="1.5" height="1.5" fill="#000" opacity="0.7"/><rect x="755.6" y="121.6" width="2" height="2" fill="#000" opacity="0.7"/><rect x="754.3" y="137.9" width="1.5" height="1.5" fill="#000" opacity="0.7"/><rect x="734.8" y="138.2" width="1" height="1" fill="#000" opacity="0.7"/><rect x="724.3" y="127.7" width="1" height="1" fill="#000" opacity="0.7"/><rect x="733.0" y="120.9" width="1" height="1" fill="#000" opacity="0.7"/><rect x="767.2" y="133.7" width="1.5" height="1.5" fill="#000" opacity="0.7"/><rect x="729.6" y="124.7" width="1" height="1" fill="#000" opacity="0.7"/><rect x="739.0" y="136.3" width="2" height="2" fill="#000" opacity="0.7"/><rect x="743.6" y="128.3" width="1" height="1" fill="#000" opacity="0.7"/><rect x="762.9" y="125.9" width="1" height="1" fill="#000" opacity="0.7"/><rect x="748.5" y="122.7" width="1" height="1" fill="#000" opacity="0.7"/><rect x="739.6" y="129.6" width="1" height="1" fill="#000" opacity="0.7"/><rect x="727.2" y="115.7" width="1" height="1" fill="#000" opacity="0.7"/><rect x="751.1" y="119.0" width="1" height="1" fill="#000" opacity="0.7"/><rect x="755.0" y="115.8" width="1" height="1" fill="#000" opacity="0.7"/><rect x="720.8" y="120.8" width="1" height="1" fill="#000" opacity="0.5"/><rect x="722.1" y="106.6" width="1.5" height="1.5" fill="#000" opacity="0.5"/><rect x="706.0" y="128.9" width="1" height="1" fill="#000" opacity="0.5"/><rect x="726.4" y="123.9" width="2" height="2" fill="#000" opacity="0.5"/><rect x="703.2" y="110.1" width="1" height="1" fill="#000" opacity="0.5"/><rect x="701.0" y="128.7" width="1" height="1" fill="#000" opacity="0.5"/><rect x="724.8" y="120.8" width="1.5" height="1.5" fill="#000" opacity="0.5"/><rect x="714.3" y="108.3" width="1" height="1" fill="#000" opacity="0.5"/><rect x="708.8" y="113.4" width="1.5" height="1.5" fill="#000" opacity="0.5"/><rect x="700.6" y="111.4" width="1.5" height="1.5" fill="#000" opacity="0.5"/><rect x="701.5" y="124.0" width="1.5" height="1.5" fill="#000" opacity="0.5"/><rect x="723.1" y="120.1" width="2" height="2" fill="#000" opacity="0.5"/><rect x="725.5" y="120.5" width="1" height="1" fill="#000" opacity="0.5"/><rect x="723.7" y="105.8" width="1" height="1" fill="#000" opacity="0.5"/><rect x="710.4" y="122.6" width="1" height="1" fill="#000" opacity="0.5"/><rect x="721.4" y="125.7" width="1.5" height="1.5" fill="#000" opacity="0.5"/><rect x="705.1" y="105.0" width="1" height="1" fill="#000" opacity="0.5"/><rect x="708.7" y="123.8" width="1" height="1" fill="#000" opacity="0.5"/><rect x="700.1" y="117.3" width="2" height="2" fill="#000" opacity="0.5"/><rect x="720.9" y="125.6" width="2" height="2" fill="#000" opacity="0.5"/><rect x="717.8" y="128.9" width="1.5" height="1.5" fill="#000" opacity="0.5"/><rect x="717.3" y="109.0" width="1" height="1" fill="#000" opacity="0.5"/><rect x="728.1" y="110.8" width="1" height="1" fill="#000" opacity="0.5"/><rect x="703.3" y="120.9" width="1" height="1" fill="#000" opacity="0.5"/><rect x="714.7" y="129.8" width="1" height="1" fill="#000" opacity="0.5"/><rect x="674.4" y="34.2" width="2" height="2" fill="#000" opacity="0.5"/><rect x="678.9" y="55.7" width="1" height="1" fill="#000" opacity="0.5"/><rect x="671.3" y="45.8" width="1.5" height="1.5" fill="#000" opacity="0.5"/><rect x="668.1" y="30.5" width="1" height="1" fill="#000" opacity="0.5"/><rect x="670.7" y="55.4" width="1" height="1" fill="#000" opacity="0.5"/><rect x="679.2" y="25.1" width="1" height="1" fill="#000" opacity="0.5"/><rect x="670.2" y="33.1" width="1" height="1" fill="#000" opacity="0.5"/><rect x="678.0" y="38.0" width="1.5" height="1.5" fill="#000" opacity="0.5"/><rect x="667.5" y="37.6" width="1.5" height="1.5" fill="#000" opacity="0.5"/><rect x="673.7" y="25.0" width="2" height="2" fill="#000" opacity="0.5"/><rect x="674.6" y="47.9" width="1" height="1" fill="#000" opacity="0.5"/><rect x="669.0" y="50.2" width="1" height="1" fill="#000" opacity="0.5"/><rect x="675.9" y="59.0" width="1.5" height="1.5" fill="#000" opacity="0.5"/><rect x="674.0" y="33.9" width="1" height="1" fill="#000" opacity="0.5"/><rect x="669.9" y="27.6" width="1" height="1" fill="#000" opacity="0.5"/><rect x="667.5" y="46.3" width="1" height="1" fill="#000" opacity="0.5"/><rect x="670.8" y="59.4" width="1.5" height="1.5" fill="#000" opacity="0.5"/><rect x="676.0" y="37.4" width="1" height="1" fill="#000" opacity="0.5"/><rect x="666.6" y="56.5" width="1.5" height="1.5" fill="#000" opacity="0.5"/><rect x="668.1" y="35.5" width="1" height="1" fill="#000" opacity="0.5"/><rect x="665.2" y="54.2" width="2" height="2" fill="#000" opacity="0.5"/><rect x="675.4" y="40.0" width="1.5" height="1.5" fill="#000" opacity="0.5"/><rect x="671.9" y="25.7" width="2" height="2" fill="#000" opacity="0.5"/><rect x="665.1" y="29.7" width="2" height="2" fill="#000" opacity="0.5"/><rect x="675.5" y="43.5" width="2" height="2" fill="#000" opacity="0.5"/><rect x="455.8" y="124.4" width="1" height="1" fill="#000" opacity="0.7"/><rect x="451.3" y="123.9" width="2" height="2" fill="#000" opacity="0.7"/><rect x="444.7" y="117.4" width="1" height="1" fill="#000" opacity="0.7"/><rect x="457.2" y="117.1" width="2" height="2" fill="#000" opacity="0.7"/><rect x="452.3" y="123.7" width="1.5" height="1.5" fill="#000" opacity="0.7"/><rect x="455.9" y="121.2" width="1" height="1" fill="#000" opacity="0.7"/><rect x="449.8" y="120.0" width="1" height="1" fill="#000" opacity="0.7"/><rect x="457.2" y="118.6" width="1" height="1" fill="#000" opacity="0.7"/><rect x="443.5" y="121.3" width="1" height="1" fill="#000" opacity="0.7"/><rect x="434.0" y="122.2" width="1" height="1" fill="#000" opacity="0.7"/><rect x="452.3" y="129.2" width="1" height="1" fill="#000" opacity="0.7"/><rect x="447.0" y="114.7" width="2" height="2" fill="#000" opacity="0.7"/><rect x="447.6" y="125.2" width="1" height="1" fill="#000" opacity="0.7"/><rect x="450.3" y="127.1" width="1.5" height="1.5" fill="#000" opacity="0.7"/><rect x="444.1" y="129.1" width="1" height="1" fill="#000" opacity="0.7"/><rect x="459.7" y="116.1" width="1" height="1" fill="#000" opacity="0.7"/><rect x="452.7" y="123.4" width="1" height="1" fill="#000" opacity="0.7"/><rect x="439.8" y="119.5" width="1" height="1" fill="#000" opacity="0.7"/><rect x="433.4" y="120.1" width="2" height="2" fill="#000" opacity="0.7"/><rect x="450.0" y="124.5" width="1.5" height="1.5" fill="#000" opacity="0.7"/><rect x="465.5" y="119.8" width="2" height="2" fill="#000" opacity="0.7"/><rect x="507.0" y="121.2" width="1" height="1" fill="#000" opacity="0.7"/><rect x="509.7" y="123.8" width="2" height="2" fill="#000" opacity="0.7"/><rect x="470.6" y="118.8" width="1" height="1" fill="#000" opacity="0.7"/><rect x="500.5" y="121.8" width="2" height="2" fill="#000" opacity="0.7"/><rect x="492.1" y="122.3" width="1" height="1" fill="#000" opacity="0.7"/><rect x="477.7" y="121.8" width="2" height="2" fill="#000" opacity="0.7"/><rect x="483.4" y="119.8" width="1" height="1" fill="#000" opacity="0.7"/><rect x="499.0" y="120.8" width="1" height="1" fill="#000" opacity="0.7"/><rect x="473.4" y="120.3" width="1.5" height="1.5" fill="#000" opacity="0.7"/><rect x="509.1" y="122.1" width="2" height="2" fill="#000" opacity="0.7"/><rect x="460.1" y="122.3" width="1.5" height="1.5" fill="#000" opacity="0.7"/><rect x="341.5" y="358.5" width="1.5" height="1.5" fill="#000" opacity="0.5"/><rect x="348.8" y="356.3" width="1" height="1" fill="#000" opacity="0.5"/><rect x="359.6" y="355.6" width="1.5" height="1.5" fill="#000" opacity="0.5"/><rect x="371.3" y="352.6" width="1.5" height="1.5" fill="#000" opacity="0.5"/><rect x="367.0" y="353.4" width="1.5" height="1.5" fill="#000" opacity="0.5"/><rect x="358.0" y="352.1" width="1" height="1" fill="#000" opacity="0.5"/><rect x="332.6" y="352.7" width="1.5" height="1.5" fill="#000" opacity="0.5"/><rect x="335.0" y="353.0" width="1" height="1" fill="#000" opacity="0.5"/><rect x="371.3" y="353.9" width="2" height="2" fill="#000" opacity="0.5"/><rect x="340.8" y="353.5" width="2" height="2" fill="#000" opacity="0.5"/><rect x="367.5" y="353.7" width="1" height="1" fill="#000" opacity="0.5"/><rect x="360.1" y="360.9" width="1.5" height="1.5" fill="#000" opacity="0.5"/><rect x="331.8" y="358.9" width="1" height="1" fill="#000" opacity="0.5"/><rect x="364.5" y="356.4" width="1" height="1" fill="#000" opacity="0.5"/><rect x="353.3" y="354.6" width="1" height="1" fill="#000" opacity="0.5"/><rect x="369.6" y="356.7" width="1" height="1" fill="#000" opacity="0.5"/><rect x="349.1" y="361.1" width="2" height="2" fill="#000" opacity="0.5"/><rect x="334.8" y="353.6" width="1" height="1" fill="#000" opacity="0.5"/><rect x="329.6" y="355.2" width="2" height="2" fill="#000" opacity="0.5"/><rect x="359.9" y="360.4" width="1.5" height="1.5" fill="#000" opacity="0.5"/><rect x="345.5" y="362.0" width="1" height="1" fill="#000" opacity="0.5"/><rect x="330.8" y="355.6" width="1" height="1" fill="#000" opacity="0.5"/><rect x="321.2" y="352.5" width="1.5" height="1.5" fill="#000" opacity="0.5"/><rect x="368.5" y="352.9" width="2" height="2" fill="#000" opacity="0.5"/><rect x="349.1" y="361.0" width="1" height="1" fill="#000" opacity="0.5"/></g><path d="M165.0 345.0 C167.3 341.5 173.3 329.5 179.0 324.0 C184.7 318.5 193.2 316.0 199.0 312.0 C204.8 308.0 207.2 305.8 214.0 300.0 C220.8 294.2 234.2 282.0 240.0 277.0 C245.8 272.0 242.7 272.7 249.0 270.0 C255.3 267.3 268.5 265.2 278.0 261.0 C287.5 256.8 296.5 251.2 306.0 245.0 C315.5 238.8 325.3 231.0 335.0 224.0 C344.7 217.0 355.3 208.7 364.0 203.0 C372.7 197.3 376.0 196.8 387.0 190.0 C398.0 183.2 416.7 169.3 430.0 162.0 C443.3 154.7 454.5 151.2 467.0 146.0 C479.5 140.8 492.5 135.2 505.0 131.0 C517.5 126.8 529.7 125.2 542.0 121.0 C554.3 116.8 566.5 109.7 579.0 106.0 C591.5 102.3 604.5 101.2 617.0 99.0 C629.5 96.8 642.5 94.8 654.0 93.0 C665.5 91.2 680.7 88.8 686.0 88.0" fill="none" stroke="#fff" stroke-width="2.2" stroke-linejoin="round" stroke-linecap="round"/><path d="M99.0 394.0 C105.7 390.7 126.2 380.7 139.0 374.0 C151.8 367.3 163.5 361.5 176.0 354.0 C188.5 346.5 203.3 336.2 214.0 329.0 C224.7 321.8 231.0 317.7 240.0 311.0 C249.0 304.3 257.0 297.0 268.0 289.0 C279.0 281.0 293.3 271.8 306.0 263.0 C318.7 254.2 331.2 245.0 344.0 236.0 C356.8 227.0 371.5 216.2 383.0 209.0 C394.5 201.8 403.5 198.0 413.0 193.0 C422.5 188.0 427.8 183.3 440.0 179.0 C452.2 174.7 470.7 171.0 486.0 167.0 C501.3 163.0 516.5 159.3 532.0 155.0 C547.5 150.7 561.8 146.7 579.0 141.0 C596.2 135.3 619.3 125.8 635.0 121.0 C650.7 116.2 660.5 114.5 673.0 112.0 C685.5 109.5 700.7 109.5 710.0 106.0 C719.3 102.5 725.8 93.5 729.0 91.0" fill="none" stroke="#fff" stroke-width="2.2" stroke-linejoin="round" stroke-linecap="round"/><path d="M64.0 435.0 C70.3 432.3 89.5 425.0 102.0 419.0 C114.5 413.0 126.7 406.5 139.0 399.0 C151.3 391.5 163.5 382.3 176.0 374.0 C188.5 365.7 203.3 356.2 214.0 349.0 C224.7 341.8 231.0 336.8 240.0 331.0 C249.0 325.2 257.0 320.3 268.0 314.0 C279.0 307.7 293.3 300.3 306.0 293.0 C318.7 285.7 331.2 277.7 344.0 270.0 C356.8 262.3 370.2 256.2 383.0 247.0 C395.8 237.8 411.5 222.8 421.0 215.0 C430.5 207.2 433.0 203.0 440.0 200.0 C447.0 197.0 455.3 196.8 463.0 197.0 C470.7 197.2 476.5 201.2 486.0 201.0 C495.5 200.8 508.7 199.0 520.0 196.0 C531.3 193.0 540.7 187.5 554.0 183.0 C567.3 178.5 584.7 174.0 600.0 169.0 C615.3 164.0 633.3 157.0 646.0 153.0 C658.7 149.0 671.0 146.3 676.0 145.0" fill="none" stroke="#fff" stroke-width="2.2" stroke-linejoin="round" stroke-linecap="round"/><path d="M85.0 450.0 C89.8 447.3 102.8 440.8 114.0 434.0 C125.2 427.2 139.5 418.5 152.0 409.0 C164.5 399.5 178.7 384.8 189.0 377.0 C199.3 369.2 205.5 367.2 214.0 362.0 C222.5 356.8 231.0 350.8 240.0 346.0 C249.0 341.2 257.0 338.0 268.0 333.0 C279.0 328.0 294.8 321.3 306.0 316.0 C317.2 310.7 325.3 306.2 335.0 301.0 C344.7 295.8 354.5 291.7 364.0 285.0 C373.5 278.3 384.2 268.8 392.0 261.0 C399.8 253.2 404.7 243.2 411.0 238.0 C417.3 232.8 423.5 231.8 430.0 230.0 C436.5 228.2 440.7 228.8 450.0 227.0 C459.3 225.2 472.3 221.5 486.0 219.0 C499.7 216.5 516.8 215.0 532.0 212.0 C547.2 209.0 561.8 205.5 577.0 201.0 C592.2 196.5 609.5 189.5 623.0 185.0 C636.5 180.5 646.0 180.0 658.0 174.0 C670.0 168.0 688.8 153.2 695.0 149.0" fill="none" stroke="#fff" stroke-width="2.2" stroke-linejoin="round" stroke-linecap="round"/><path d="M81.0 476.0 C86.5 473.0 104.3 464.2 114.0 458.0 C123.7 451.8 131.5 444.3 139.0 439.0 C146.5 433.7 154.0 431.0 159.0 426.0 C164.0 421.0 165.7 414.3 169.0 409.0 C172.3 403.7 174.0 398.2 179.0 394.0 C184.0 389.8 190.5 389.2 199.0 384.0 C207.5 378.8 221.7 367.7 230.0 363.0 C238.3 358.3 241.0 358.5 249.0 356.0 C257.0 353.5 265.3 350.5 278.0 348.0 C290.7 345.5 307.5 344.2 325.0 341.0 C342.5 337.8 367.0 331.3 383.0 329.0 C399.0 326.7 409.8 326.7 421.0 327.0 C432.2 327.3 439.2 329.8 450.0 331.0 C460.8 332.2 470.5 333.3 486.0 334.0 C501.5 334.7 524.0 333.7 543.0 335.0 C562.0 336.3 586.7 341.0 600.0 342.0 C613.3 343.0 619.2 341.2 623.0 341.0" fill="none" stroke="#fff" stroke-width="2.2" stroke-linejoin="round" stroke-linecap="round"/><path d="M284.0 346.0 C288.5 343.3 301.0 335.3 311.0 330.0 C321.0 324.7 333.7 318.5 344.0 314.0 C354.3 309.5 363.3 306.8 373.0 303.0 C382.7 299.2 394.7 294.3 402.0 291.0 C409.3 287.7 412.7 287.7 417.0 283.0 C421.3 278.3 422.5 268.3 428.0 263.0 C433.5 257.7 440.3 254.5 450.0 251.0 C459.7 247.5 472.3 244.2 486.0 242.0 C499.7 239.8 516.8 240.3 532.0 238.0 C547.2 235.7 561.8 231.8 577.0 228.0 C592.2 224.2 610.0 220.0 623.0 215.0 C636.0 210.0 649.7 200.8 655.0 198.0" fill="none" stroke="#fff" stroke-width="2.2" stroke-linejoin="round" stroke-linecap="round"/><path d="M317.0 329.0 C318.3 329.5 317.2 332.8 325.0 332.0 C332.8 331.2 351.2 327.3 364.0 324.0 C376.8 320.7 389.3 315.3 402.0 312.0 C414.7 308.7 428.0 307.7 440.0 304.0 C452.0 300.3 462.5 293.5 474.0 290.0 C485.5 286.5 488.0 284.3 509.0 283.0 C530.0 281.7 577.2 283.5 600.0 282.0 C622.8 280.5 633.8 275.7 646.0 274.0 C658.2 272.3 668.5 272.3 673.0 272.0" fill="none" stroke="#fff" stroke-width="2.2" stroke-linejoin="round" stroke-linecap="round"/><path d="M427.0 308.0 C429.2 305.3 434.0 298.0 440.0 292.0 C446.0 286.0 451.5 277.3 463.0 272.0 C474.5 266.7 490.0 263.0 509.0 260.0 C528.0 257.0 559.8 257.7 577.0 254.0 C594.2 250.3 601.3 243.3 612.0 238.0 C622.7 232.7 636.2 224.7 641.0 222.0" fill="none" stroke="#fff" stroke-width="2.2" stroke-linejoin="round" stroke-linecap="round"/><path d="M431.0 320.0 C434.2 319.3 440.8 317.5 450.0 316.0 C459.2 314.5 472.3 313.0 486.0 311.0 C499.7 309.0 513.0 304.8 532.0 304.0 C551.0 303.2 578.0 306.8 600.0 306.0 C622.0 305.2 653.3 300.2 664.0 299.0" fill="none" stroke="#fff" stroke-width="2.2" stroke-linejoin="round" stroke-linecap="round"/><path d="M451.0 318.0 C456.8 318.7 470.7 321.7 486.0 322.0 C501.3 322.3 527.8 319.5 543.0 320.0 C558.2 320.5 564.8 324.2 577.0 325.0 C589.2 325.8 609.5 325.0 616.0 325.0" fill="none" stroke="#fff" stroke-width="2.2" stroke-linejoin="round" stroke-linecap="round"/><path d="M692.0 87.0 L682.0 93.8 L680.3 83.9 Z" fill="#fff"/><path d="M682.0 143.0 L672.9 150.9 L670.0 141.4 Z" fill="#fff"/><path d="M660.0 195.0 L652.4 204.4 L647.9 195.4 Z" fill="#fff"/><path d="M679.0 271.0 L668.6 277.1 L667.6 267.1 Z" fill="#fff"/><path d="M622.0 325.0 L611.0 330.0 L611.0 320.0 Z" fill="#fff"/><path d="M91.0 398.0 L98.6 388.6 L103.1 397.6 Z" fill="#fff"/><path d="M77.0 456.0 L84.2 446.3 L89.0 455.1 Z" fill="#fff"/><path d="M271.0 349.0 L281.3 342.7 L282.5 352.7 Z" fill="#fff"/><path d="M310.0 332.0 L315.8 321.4 L321.8 329.4 Z" fill="#fff"/><path d="M424.0 321.0 L434.4 314.9 L435.4 324.9 Z" fill="#fff"/></svg>
<svg class="s" style="left:504px;top:773px;" width="1343" height="150" viewBox="0 0 1343 150"><path d="M1 125.5 H1341" stroke="#f0f0f0" stroke-width="1"/><path d="M1 103.5 H1341" stroke="#f0f0f0" stroke-width="1"/><path d="M1 81.5 H1341" stroke="#f0f0f0" stroke-width="1"/><path d="M1 58.5 H1341" stroke="#f0f0f0" stroke-width="1"/><path d="M1 36.5 H1341" stroke="#f0f0f0" stroke-width="1"/><path d="M1 14.5 H1341" stroke="#f0f0f0" stroke-width="1"/><path d="M77.5 1 V148" stroke="#f0f0f0" stroke-width="1"/><path d="M155.5 1 V148" stroke="#f0f0f0" stroke-width="1"/><path d="M232.5 1 V148" stroke="#f0f0f0" stroke-width="1"/><path d="M310.5 1 V148" stroke="#f0f0f0" stroke-width="1"/><path d="M388.5 1 V148" stroke="#f0f0f0" stroke-width="1"/><path d="M465.5 1 V148" stroke="#f0f0f0" stroke-width="1"/><path d="M543.5 1 V148" stroke="#f0f0f0" stroke-width="1"/><path d="M620.5 1 V148" stroke="#f0f0f0" stroke-width="1"/><path d="M698.5 1 V148" stroke="#f0f0f0" stroke-width="1"/><path d="M776.5 1 V148" stroke="#f0f0f0" stroke-width="1"/><path d="M853.5 1 V148" stroke="#f0f0f0" stroke-width="1"/><path d="M931.5 1 V148" stroke="#f0f0f0" stroke-width="1"/><path d="M1008.5 1 V148" stroke="#f0f0f0" stroke-width="1"/><path d="M1086.5 1 V148" stroke="#f0f0f0" stroke-width="1"/><path d="M1164.5 1 V148" stroke="#f0f0f0" stroke-width="1"/><path d="M1241.5 1 V148" stroke="#f0f0f0" stroke-width="1"/><path d="M1319.5 1 V148" stroke="#f0f0f0" stroke-width="1"/><polyline points="0.0,129.11 1.5,127.86 3.0,126.46 4.5,124.90 6.0,123.21 7.5,121.37 9.0,119.40 10.5,117.30 12.0,115.07 13.5,112.73 15.0,110.29 16.5,107.74 18.0,105.09 19.5,102.36 21.0,99.56 22.5,96.68 24.0,93.74 25.5,90.75 27.0,87.72 28.5,84.65 30.0,81.55 31.5,78.44 33.0,75.32 34.5,72.21 36.0,69.10 37.5,66.02 39.0,62.96 40.5,59.95 42.0,56.98 43.5,54.07 45.0,51.22 46.5,48.45 48.0,45.76 49.5,43.16 51.0,40.66 52.5,38.26 54.0,35.97 55.5,33.81 57.0,31.77 58.5,29.86 60.0,28.08 61.5,26.45 63.0,24.97 64.5,23.64 66.0,22.46 67.5,21.44 69.0,20.59 70.5,19.90 72.0,19.37 73.5,19.02 75.0,18.83 76.5,18.81 78.0,18.95 79.5,19.25 81.0,19.71 82.5,20.32 84.0,21.08 85.5,22.00 87.0,23.06 88.5,24.27 90.0,25.63 91.5,27.12 93.0,28.74 94.5,30.50 96.0,32.38 97.5,34.38 99.0,36.50 100.5,38.72 102.0,41.05 103.5,43.48 105.0,45.99 106.5,48.59 108.0,51.26 109.5,54.00 111.0,56.80 112.5,59.66 114.0,62.56 115.5,65.50 117.0,68.46 118.5,71.45 120.0,74.45 121.5,77.45 123.0,80.45 124.5,83.44 126.0,86.41 127.5,89.35 129.0,92.25 130.5,95.11 132.0,97.91 133.5,100.66 135.0,103.34 136.5,105.94 138.0,108.46 139.5,110.89 141.0,113.22 142.5,115.46 144.0,117.58 145.5,119.59 147.0,121.48 148.5,123.24 150.0,124.88 151.5,126.38 153.0,127.74 154.5,128.96 156.0,130.04 157.5,130.96 159.0,131.73 160.5,132.36 162.0,132.82 163.5,133.13 165.0,133.28 166.5,133.27 168.0,133.07 169.5,132.66 171.0,132.06 172.5,131.27 174.0,130.28 175.5,129.11 177.0,127.74 178.5,126.20 180.0,124.49 181.5,122.60 183.0,120.55 184.5,118.34 186.0,115.98 187.5,113.48 189.0,110.85 190.5,108.09 192.0,105.22 193.5,102.24 195.0,99.16 196.5,95.99 198.0,92.75 199.5,89.44 201.0,86.08 202.5,82.67 204.0,79.24 205.5,75.77 207.0,72.30 208.5,68.83 210.0,65.37 211.5,61.94 213.0,58.54 214.5,55.19 216.0,51.89 217.5,48.67 219.0,45.52 220.5,42.46 222.0,39.50 223.5,36.65 225.0,33.91 226.5,31.30 228.0,28.83 229.5,26.51 231.0,24.33 232.5,22.31 234.0,20.46 235.5,18.77 237.0,17.27 238.5,15.94 240.0,14.81 241.5,13.86 243.0,13.10 244.5,12.54 246.0,12.18 247.5,12.01 249.0,12.04 250.5,12.23 252.0,12.59 253.5,13.12 255.0,13.81 256.5,14.66 258.0,15.67 259.5,16.84 261.0,18.16 262.5,19.63 264.0,21.25 265.5,23.01 267.0,24.91 268.5,26.94 270.0,29.10 271.5,31.38 273.0,33.78 274.5,36.28 276.0,38.89 277.5,41.59 279.0,44.38 280.5,47.25 282.0,50.19 283.5,53.20 285.0,56.26 286.5,59.38 288.0,62.53 289.5,65.72 291.0,68.93 292.5,72.16 294.0,75.40 295.5,78.63 297.0,81.85 298.5,85.06 300.0,88.23 301.5,91.37 303.0,94.47 304.5,97.51 306.0,100.50 307.5,103.41 309.0,106.25 310.5,109.00 312.0,111.67 313.5,114.23 315.0,116.70 316.5,119.04 318.0,121.28 319.5,123.38 321.0,125.36 322.5,127.21 324.0,128.91 325.5,130.47 327.0,131.89 328.5,133.15 330.0,134.25 331.5,135.20 333.0,135.99 334.5,136.61 336.0,137.07 337.5,137.37 339.0,137.49 340.5,137.45 342.0,137.21 343.5,136.78 345.0,136.16 346.5,135.35 348.0,134.35 349.5,133.17 351.0,131.81 352.5,130.28 354.0,128.57 355.5,126.70 357.0,124.68 358.5,122.50 360.0,120.17 361.5,117.71 363.0,115.11 364.5,112.40 366.0,109.57 367.5,106.64 369.0,103.61 370.5,100.50 372.0,97.32 373.5,94.07 375.0,90.76 376.5,87.41 378.0,84.03 379.5,80.63 381.0,77.21 382.5,73.80 384.0,70.39 385.5,67.01 387.0,63.66 388.5,60.35 390.0,57.10 391.5,53.91 393.0,50.79 394.5,47.76 396.0,44.82 397.5,41.99 399.0,39.26 400.5,36.66 402.0,34.19 403.5,31.86 405.0,29.67 406.5,27.63 408.0,25.75 409.5,24.03 411.0,22.49 412.5,21.11 414.0,19.92 415.5,18.91 417.0,18.09 418.5,17.46 420.0,17.01 421.5,16.76 423.0,16.70 424.5,16.82 426.0,17.10 427.5,17.55 429.0,18.16 430.5,18.93 432.0,19.86 433.5,20.95 435.0,22.19 436.5,23.58 438.0,25.12 439.5,26.80 441.0,28.62 442.5,30.58 444.0,32.66 445.5,34.86 447.0,37.17 448.5,39.60 450.0,42.13 451.5,44.75 453.0,47.47 454.5,50.26 456.0,53.13 457.5,56.06 459.0,59.05 460.5,62.08 462.0,65.16 463.5,68.27 465.0,71.40 466.5,74.55 468.0,77.70 469.5,80.85 471.0,83.99 472.5,87.11 474.0,90.19 475.5,93.25 477.0,96.25 478.5,99.20 480.0,102.09 481.5,104.91 483.0,107.65 484.5,110.31 486.0,112.87 487.5,115.33 489.0,117.68 490.5,119.92 492.0,122.04 493.5,124.04 495.0,125.91 496.5,127.63 498.0,129.22 499.5,130.66 501.0,131.96 502.5,133.10 504.0,134.08 505.5,134.90 507.0,135.57 508.5,136.07 510.0,136.41 511.5,136.58 513.0,136.58 514.5,136.38 516.0,135.98 517.5,135.38 519.0,134.57 520.5,133.57 522.0,132.38 523.5,130.99 525.0,129.42 526.5,127.67 528.0,125.74 529.5,123.65 531.0,121.39 532.5,118.97 534.0,116.41 535.5,113.72 537.0,110.89 538.5,107.94 540.0,104.88 541.5,101.72 543.0,98.47 544.5,95.14 546.0,91.74 547.5,88.28 549.0,84.77 550.5,81.23 552.0,77.67 553.5,74.09 555.0,70.51 556.5,66.94 558.0,63.40 559.5,59.89 561.0,56.42 562.5,53.01 564.0,49.67 565.5,46.41 567.0,43.24 568.5,40.16 570.0,37.20 571.5,34.35 573.0,31.64 574.5,29.06 576.0,26.63 577.5,24.35 579.0,22.23 580.5,20.28 582.0,18.50 583.5,16.91 585.0,15.50 586.5,14.28 588.0,13.25 589.5,12.42 591.0,11.79 592.5,11.36 594.0,11.14 595.5,11.11 597.0,11.27 598.5,11.59 600.0,12.07 601.5,12.73 603.0,13.54 604.5,14.52 606.0,15.66 607.5,16.96 609.0,18.41 610.5,20.00 612.0,21.75 613.5,23.63 615.0,25.65 616.5,27.79 618.0,30.07 619.5,32.46 621.0,34.96 622.5,37.56 624.0,40.27 625.5,43.06 627.0,45.94 628.5,48.90 630.0,51.92 631.5,55.01 633.0,58.14 634.5,61.32 636.0,64.53 637.5,67.77 639.0,71.03 640.5,74.29 642.0,77.56 643.5,80.81 645.0,84.05 646.5,87.27 648.0,90.45 649.5,93.59 651.0,96.67 652.5,99.70 654.0,102.66 655.5,105.55 657.0,108.35 658.5,111.06 660.0,113.67 661.5,116.18 663.0,118.58 664.5,120.86 666.0,123.01 667.5,125.04 669.0,126.93 670.5,128.69 672.0,130.29 673.5,131.75 675.0,133.06 676.5,134.21 678.0,135.20 679.5,136.03 681.0,136.69 682.5,137.19 684.0,137.52 685.5,137.68 687.0,137.67 688.5,137.46 690.0,137.05 691.5,136.43 693.0,135.62 694.5,134.61 696.0,133.40 697.5,132.01 699.0,130.43 700.5,128.67 702.0,126.74 703.5,124.65 705.0,122.39 706.5,119.98 708.0,117.43 709.5,114.74 711.0,111.92 712.5,108.99 714.0,105.95 715.5,102.82 717.0,99.59 718.5,96.30 720.0,92.93 721.5,89.52 723.0,86.06 724.5,82.58 726.0,79.07 727.5,75.56 729.0,72.06 730.5,68.57 732.0,65.11 733.5,61.69 735.0,58.33 736.5,55.02 738.0,51.80 739.5,48.65 741.0,45.61 742.5,42.67 744.0,39.85 745.5,37.15 747.0,34.59 748.5,32.17 750.0,29.90 751.5,27.79 753.0,25.85 754.5,24.08 756.0,22.49 757.5,21.08 759.0,19.87 760.5,18.84 762.0,18.02 763.5,17.39 765.0,16.96 766.5,16.74 768.0,16.71 769.5,16.86 771.0,17.17 772.5,17.64 774.0,18.27 775.5,19.05 777.0,20.00 778.5,21.09 780.0,22.34 781.5,23.73 783.0,25.27 784.5,26.95 786.0,28.76 787.5,30.70 789.0,32.76 790.5,34.95 792.0,37.24 793.5,39.65 795.0,42.15 796.5,44.75 798.0,47.43 799.5,50.19 801.0,53.02 802.5,55.92 804.0,58.87 805.5,61.87 807.0,64.90 808.5,67.97 810.0,71.07 811.5,74.17 813.0,77.28 814.5,80.39 816.0,83.49 817.5,86.57 819.0,89.62 820.5,92.64 822.0,95.61 823.5,98.53 825.0,101.39 826.5,104.18 828.0,106.89 829.5,109.52 831.0,112.06 832.5,114.51 834.0,116.85 835.5,119.08 837.0,121.19 838.5,123.18 840.0,125.04 841.5,126.77 843.0,128.37 844.5,129.82 846.0,131.13 847.5,132.28 849.0,133.29 850.5,134.14 852.0,134.83 853.5,135.36 855.0,135.74 856.5,135.95 858.0,136.00 859.5,135.86 861.0,135.52 862.5,134.98 864.0,134.25 865.5,133.32 867.0,132.21 868.5,130.90 870.0,129.42 871.5,127.75 873.0,125.92 874.5,123.91 876.0,121.75 877.5,119.43 879.0,116.97 880.5,114.37 882.0,111.64 883.5,108.78 885.0,105.82 886.5,102.76 888.0,99.60 889.5,96.36 891.0,93.05 892.5,89.68 894.0,86.27 895.5,82.81 897.0,79.32 898.5,75.82 900.0,72.31 901.5,68.81 903.0,65.33 904.5,61.88 906.0,58.46 907.5,55.10 909.0,51.80 910.5,48.57 912.0,45.43 913.5,42.38 915.0,39.43 916.5,36.59 918.0,33.88 919.5,31.30 921.0,28.85 922.5,26.55 924.0,24.41 925.5,22.43 927.0,20.61 928.5,18.97 930.0,17.51 931.5,16.23 933.0,15.14 934.5,14.24 936.0,13.54 937.5,13.03 939.0,12.71 940.5,12.60 942.0,12.67 943.5,12.91 945.0,13.31 946.5,13.87 948.0,14.59 949.5,15.47 951.0,16.51 952.5,17.70 954.0,19.05 955.5,20.54 957.0,22.17 958.5,23.94 960.0,25.85 961.5,27.88 963.0,30.04 964.5,32.32 966.0,34.70 967.5,37.20 969.0,39.79 970.5,42.47 972.0,45.24 973.5,48.08 975.0,50.99 976.5,53.97 978.0,56.99 979.5,60.06 981.0,63.17 982.5,66.31 984.0,69.47 985.5,72.64 987.0,75.81 988.5,78.98 990.0,82.13 991.5,85.26 993.0,88.36 994.5,91.42 996.0,94.43 997.5,97.39 999.0,100.29 1000.5,103.11 1002.0,105.85 1003.5,108.51 1005.0,111.08 1006.5,113.54 1008.0,115.90 1009.5,118.15 1011.0,120.27 1012.5,122.27 1014.0,124.14 1015.5,125.88 1017.0,127.47 1018.5,128.93 1020.0,130.23 1021.5,131.38 1023.0,132.38 1024.5,133.22 1026.0,133.90 1027.5,134.42 1029.0,134.77 1030.5,134.96 1032.0,134.99 1033.5,134.83 1035.0,134.47 1036.5,133.92 1038.0,133.18 1039.5,132.25 1041.0,131.13 1042.5,129.83 1044.0,128.35 1045.5,126.70 1047.0,124.89 1048.5,122.91 1050.0,120.78 1051.5,118.50 1053.0,116.08 1054.5,113.52 1056.0,110.85 1057.5,108.06 1059.0,105.17 1060.5,102.18 1062.0,99.11 1063.5,95.96 1065.0,92.75 1066.5,89.48 1068.0,86.18 1069.5,82.84 1071.0,79.48 1072.5,76.11 1074.0,72.75 1075.5,69.40 1077.0,66.07 1078.5,62.79 1080.0,59.55 1081.5,56.36 1083.0,53.25 1084.5,50.21 1086.0,47.27 1087.5,44.42 1089.0,41.69 1090.5,39.07 1092.0,36.58 1093.5,34.22 1095.0,32.01 1096.5,29.95 1098.0,28.05 1099.5,26.31 1101.0,24.74 1102.5,23.34 1104.0,22.13 1105.5,21.10 1107.0,20.25 1108.5,19.60 1110.0,19.14 1111.5,18.87 1113.0,18.80 1114.5,18.90 1116.0,19.15 1117.5,19.55 1119.0,20.10 1120.5,20.80 1122.0,21.65 1123.5,22.64 1125.0,23.77 1126.5,25.05 1128.0,26.46 1129.5,28.00 1131.0,29.67 1132.5,31.46 1134.0,33.37 1135.5,35.40 1137.0,37.53 1138.5,39.76 1140.0,42.09 1141.5,44.52 1143.0,47.02 1144.5,49.60 1146.0,52.25 1147.5,54.96 1149.0,57.73 1150.5,60.54 1152.0,63.39 1153.5,66.28 1155.0,69.19 1156.5,72.12 1158.0,75.06 1159.5,77.99 1161.0,80.92 1162.5,83.84 1164.0,86.73 1165.5,89.59 1167.0,92.41 1168.5,95.19 1170.0,97.91 1171.5,100.58 1173.0,103.17 1174.5,105.69 1176.0,108.13 1177.5,110.48 1179.0,112.73 1180.5,114.88 1182.0,116.93 1183.5,118.87 1185.0,120.68 1186.5,122.38 1188.0,123.94 1189.5,125.38 1191.0,126.68 1192.5,127.84 1194.0,128.87 1195.5,129.74 1197.0,130.47 1198.5,131.05 1200.0,131.48 1201.5,131.76 1203.0,131.89 1204.5,131.86 1206.0,131.64 1207.5,131.24 1209.0,130.66 1210.5,129.90 1212.0,128.96 1213.5,127.84 1215.0,126.56 1216.5,125.10 1218.0,123.48 1219.5,121.71 1221.0,119.78 1222.5,117.71 1224.0,115.50 1225.5,113.16 1227.0,110.69 1228.5,108.10 1230.0,105.41 1231.5,102.62 1233.0,99.74 1234.5,96.78 1236.0,93.74 1237.5,90.65 1239.0,87.50 1240.5,84.31 1242.0,81.09 1243.5,77.85 1245.0,74.60 1246.5,71.35 1248.0,68.11 1249.5,64.89 1251.0,61.70 1252.5,58.55 1254.0,55.46 1255.5,52.42 1257.0,49.46 1258.5,46.58 1260.0,43.79 1261.5,41.10 1263.0,38.51 1264.5,36.04 1266.0,33.70 1267.5,31.49 1269.0,29.42 1270.5,27.49 1272.0,25.72 1273.5,24.10 1275.0,22.64 1276.5,21.36 1278.0,20.24 1279.5,19.30 1281.0,18.54 1282.5,17.96 1284.0,17.56 1285.5,17.34 1287.0,17.31 1288.5,17.41 1290.0,17.65 1291.5,18.01 1293.0,18.50 1294.5,19.12 1296.0,19.86 1297.5,20.72 1299.0,21.71 1300.5,22.81 1302.0,24.03 1303.5,25.36 1305.0,26.81 1306.5,28.36 1308.0,30.01 1309.5,31.77 1311.0,33.62 1312.5,35.56 1314.0,37.59 1315.5,39.71 1317.0,41.90 1318.5,44.17 1320.0,46.50 1321.5,48.90 1323.0,51.35 1324.5,53.86 1326.0,56.41 1327.5,59.01 1329.0,61.64 1330.5,64.30 1332.0,66.98 1333.5,69.68 1335.0,72.39 1336.5,75.10 1338.0,77.82 1339.5,80.52 1341.0,83.22" fill="none" stroke="#2d6fd4" stroke-width="1.4" stroke-linejoin="round"/><rect x="0.75" y="0.75" width="1340.5" height="147.5" fill="none" stroke="#a9a9a9" stroke-width="1.5"/></svg><div class="t" style="left:493.00px;top:918px;font:9px/10px 'Liberation Sans',sans-serif;color:#4a4a4a;">0</div><div class="t" style="left:493.00px;top:896px;font:9px/10px 'Liberation Sans',sans-serif;color:#4a4a4a;">1</div><div class="t" style="left:493.00px;top:873px;font:9px/10px 'Liberation Sans',sans-serif;color:#4a4a4a;">2</div><div class="t" style="left:493.00px;top:851px;font:9px/10px 'Liberation Sans',sans-serif;color:#4a4a4a;">3</div><div class="t" style="left:493.00px;top:829px;font:9px/10px 'Liberation Sans',sans-serif;color:#4a4a4a;">4</div><div class="t" style="left:493.00px;top:807px;font:9px/10px 'Liberation Sans',sans-serif;color:#4a4a4a;">5</div><div class="t" style="left:493.00px;top:785px;font:9px/10px 'Liberation Sans',sans-serif;color:#4a4a4a;">6</div><div class="t" style="left:499.50px;top:930px;font:9px/10px 'Liberation Sans',sans-serif;color:#4a4a4a;">0</div><div class="t" style="left:567.10px;top:930px;font:9px/10px 'Liberation Sans',sans-serif;color:#4a4a4a;letter-spacing:0.000px;">20000</div><div class="t" style="left:644.70px;top:930px;font:9px/10px 'Liberation Sans',sans-serif;color:#4a4a4a;letter-spacing:0.000px;">40000</div><div class="t" style="left:722.30px;top:930px;font:9px/10px 'Liberation Sans',sans-serif;color:#4a4a4a;letter-spacing:0.000px;">60000</div><div class="t" style="left:799.90px;top:930px;font:9px/10px 'Liberation Sans',sans-serif;color:#4a4a4a;letter-spacing:0.000px;">80000</div><div class="t" style="left:875.50px;top:930px;font:9px/10px 'Liberation Sans',sans-serif;color:#4a4a4a;letter-spacing:-0.200px;">100000</div><div class="t" style="left:953.10px;top:930px;font:9px/10px 'Liberation Sans',sans-serif;color:#4a4a4a;letter-spacing:-0.200px;">120000</div><div class="t" style="left:1030.70px;top:930px;font:9px/10px 'Liberation Sans',sans-serif;color:#4a4a4a;letter-spacing:-0.200px;">140000</div><div class="t" style="left:1108.30px;top:930px;font:9px/10px 'Liberation Sans',sans-serif;color:#4a4a4a;letter-spacing:-0.200px;">160000</div><div class="t" style="left:1185.90px;top:930px;font:9px/10px 'Liberation Sans',sans-serif;color:#4a4a4a;letter-spacing:-0.200px;">180000</div><div class="t" style="left:1263.50px;top:930px;font:9px/10px 'Liberation Sans',sans-serif;color:#4a4a4a;letter-spacing:-0.200px;">200000</div><div class="t" style="left:1341.10px;top:930px;font:9px/10px 'Liberation Sans',sans-serif;color:#4a4a4a;letter-spacing:-0.200px;">220000</div><div class="t" style="left:1418.70px;top:930px;font:9px/10px 'Liberation Sans',sans-serif;color:#4a4a4a;letter-spacing:-0.200px;">240000</div><div class="t" style="left:1496.30px;top:930px;font:9px/10px 'Liberation Sans',sans-serif;color:#4a4a4a;letter-spacing:-0.200px;">260000</div><div class="t" style="left:1573.90px;top:930px;font:9px/10px 'Liberation Sans',sans-serif;color:#4a4a4a;letter-spacing:-0.200px;">280000</div><div class="t" style="left:1651.50px;top:930px;font:9px/10px 'Liberation Sans',sans-serif;color:#4a4a4a;letter-spacing:-0.200px;">300000</div><div class="t" style="left:1729.10px;top:930px;font:9px/10px 'Liberation Sans',sans-serif;color:#4a4a4a;letter-spacing:-0.200px;">320000</div><div class="t" style="left:1806.70px;top:930px;font:9px/10px 'Liberation Sans',sans-serif;color:#4a4a4a;letter-spacing:-0.200px;">340000</div><div class="t" style="left:1140.00px;top:951px;font:9px/10px 'Liberation Sans',sans-serif;color:#4a4a4a;letter-spacing:-0.236px;">Series Time (s)</div><div class="t" style="left:437px;top:866px;font:9px/11px 'Liberation Sans';color:#4a4a4a;transform:rotate(-90deg);transform-origin:0 0;">Tide (m)</div>
<svg class="s" style="left:405px;top:362px;" width="115" height="40" viewBox="0 0 115 40"><defs><filter id="sh1" x="-30%" y="-30%" width="160%" height="160%"><feDropShadow dx="2" dy="2.5" stdDeviation="1.8" flood-color="#000" flood-opacity="0.6"/></filter></defs><g filter="url(#sh1)"><path d="M8 20 L24 9.5 L24 17.5 L74 17.5 L74 22.5 L24 22.5 L24 30.5Z" fill="#f00"/><path d="M92.5 17.5 L96.5 15.5 V27" stroke="#f00" stroke-width="2.2" fill="none"/></g></svg><svg class="s" style="left:490px;top:600px;" width="40" height="130" viewBox="0 0 40 130"><defs><filter id="sh3" x="-30%" y="-30%" width="160%" height="160%"><feDropShadow dx="2" dy="2.5" stdDeviation="1.8" flood-color="#000" flood-opacity="0.6"/></filter></defs><g filter="url(#sh3)"><path d="M13.2 31.5 H17.7 V102 H26 L15.5 122 L6.7 102 H13.2Z" fill="#f00"/><path d="M15 8.5 C16 6 22.5 6 22.5 9.5 C22.5 12 19.5 12.5 18 12.5 C20 12.5 23 13 23 15.5 C23 19 16 19 15 16.5" stroke="#f00" stroke-width="2" fill="none"/></g></svg><svg class="s" style="left:605px;top:965px;" width="110" height="50" viewBox="0 0 110 50"><defs><filter id="sh2" x="-30%" y="-30%" width="160%" height="160%"><feDropShadow dx="2" dy="2.5" stdDeviation="1.8" flood-color="#000" flood-opacity="0.6"/></filter></defs><g filter="url(#sh2)"><path d="M69 10 L71.5 14.5 L28 34 L30 40 L8.7 40.4 L22.4 23.6 L25.5 29.5Z" fill="#f00"/><path d="M90.5 11.5 C91 7.5 98.5 7.5 98.5 11.5 C98.5 14.5 93 16.5 90 20 H99" stroke="#f00" stroke-width="2" fill="none"/></g></svg><div class="r" style="left:496px;top:994px;width:114px;height:24px;border:1px solid #f00;box-sizing:border-box;border-width:2px;"></div>
</body></html>
